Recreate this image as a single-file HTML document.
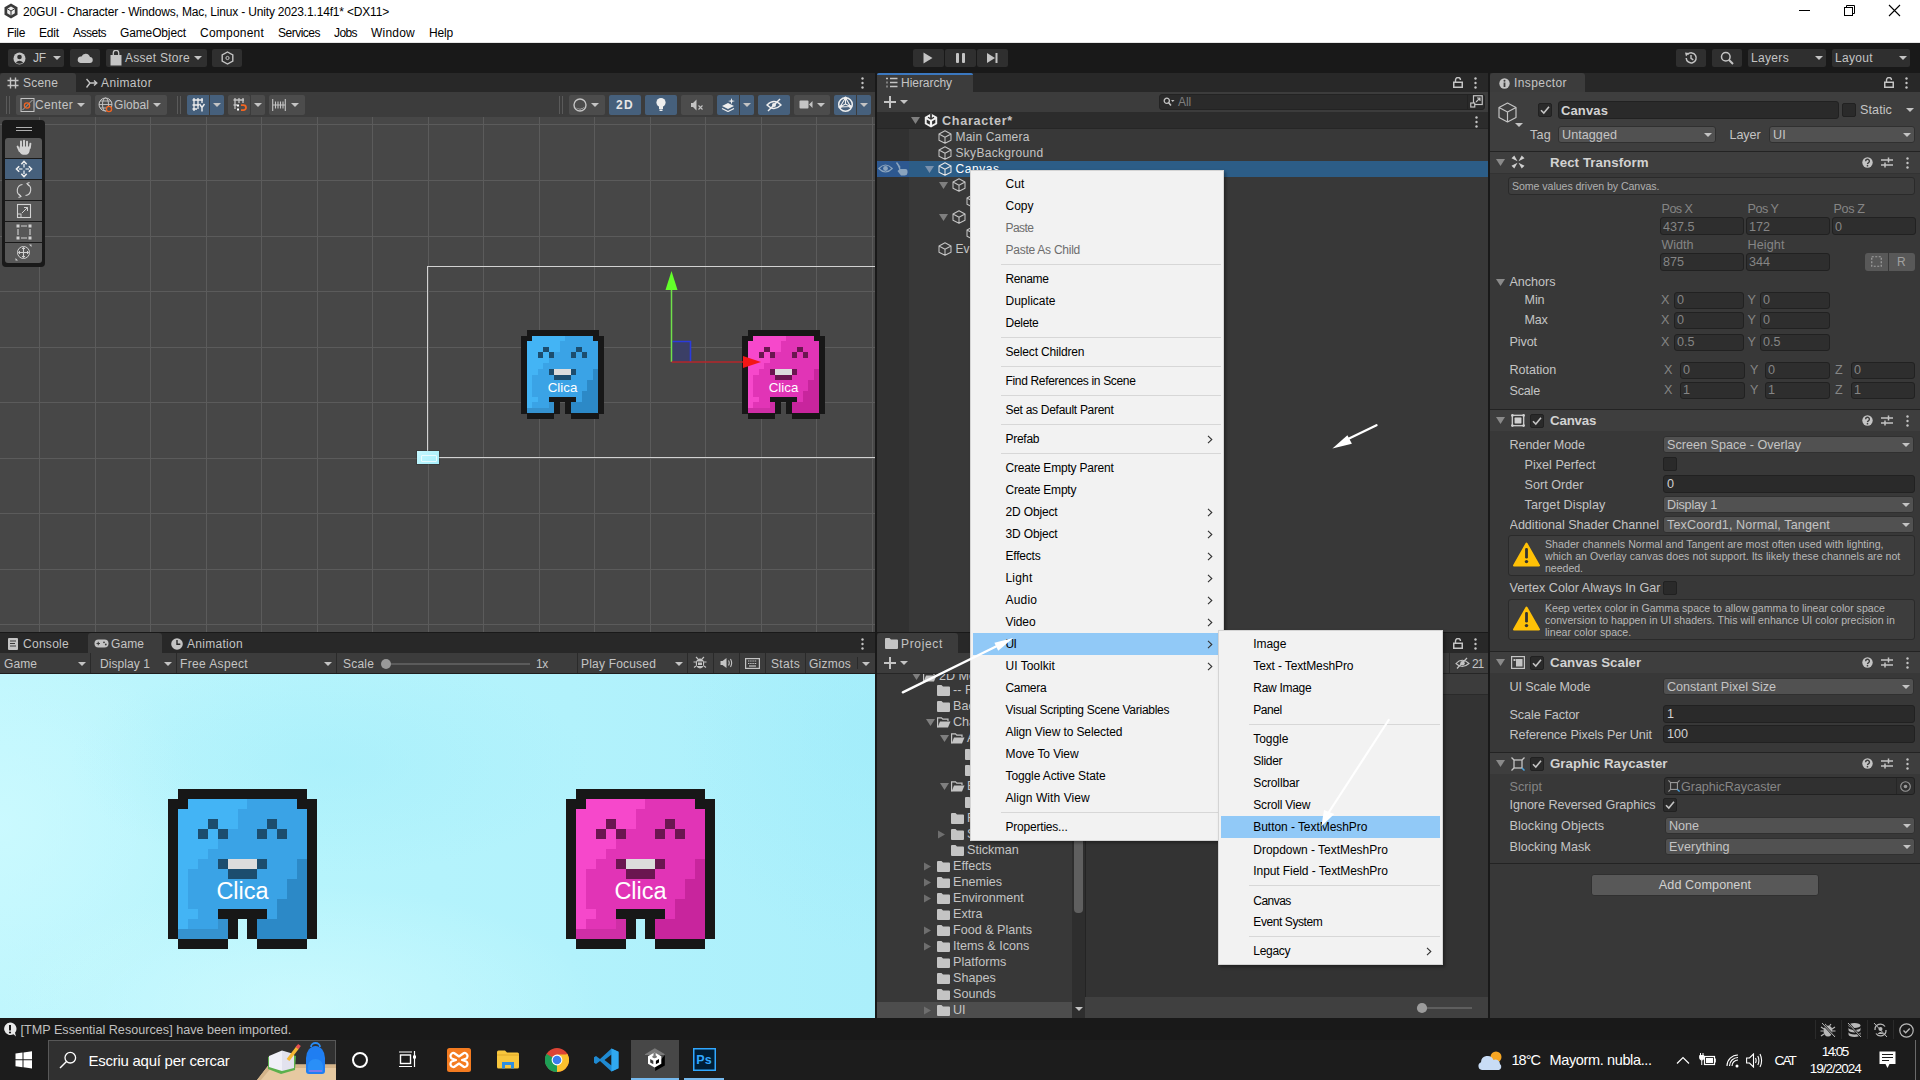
<!DOCTYPE html>
<html><head><meta charset="utf-8"><style>
html,body{margin:0;padding:0;width:1920px;height:1080px;overflow:hidden;background:#191919;}
body{position:relative;font-family:"Liberation Sans",sans-serif;}
body>div,body>svg{position:absolute;}
.t{white-space:nowrap;}
</style></head><body>
<div style="left:0px;top:0px;width:1920px;height:43px;background:#ffffff;"></div>
<div style="left:0px;top:42px;width:1920px;height:1px;background:#e6e6e6;"></div>
<div style="left:0px;top:43px;width:1920px;height:997px;background:#191919;"></div>
<svg style="left:3px;top:3px" width="16" height="16" viewBox="0 0 16 16"><polygon points="8,0.5 14.5,4.2 14.5,11.8 8,15.5 1.5,11.8 1.5,4.2" fill="#3a3a3a"/><polygon points="8,3.5 11.8,5.7 11.8,10.3 8,12.5 4.2,10.3 4.2,5.7" fill="#eee"/><path d="M8,8 L8,12.5 M8,8 L4.2,5.7 M8,8 L11.8,5.7" stroke="#333" stroke-width="1"/></svg>
<div class="t" style="left:23.00px;top:3.00px;height:19px;line-height:19px;font-size:12px;color:#000;letter-spacing:-0.178px;">20GUI - Character - Windows, Mac, Linux - Unity 2023.1.14f1* &lt;DX11&gt;</div>
<div style="left:1799px;top:10px;width:11px;height:1px;background:#000;"></div>
<svg style="left:1843px;top:4px" width="14" height="14" viewBox="0 0 14 14"><rect x="1.5" y="3.5" width="8" height="8" fill="none" stroke="#000"/><path d="M3.5,3.5 V1.5 H11.5 V9.5 H9.5" fill="none" stroke="#000"/></svg>
<svg style="left:1888px;top:4px" width="14" height="14" viewBox="0 0 14 14"><path d="M1,1 L12,12 M12,1 L1,12" stroke="#000" stroke-width="1.1"/></svg>
<div class="t" style="left:7.00px;top:23.80px;height:19px;line-height:19px;font-size:12px;color:#000;letter-spacing:-0.334px;">File</div>
<div class="t" style="left:39.00px;top:23.80px;height:19px;line-height:19px;font-size:12px;color:#000;letter-spacing:-0.169px;">Edit</div>
<div class="t" style="left:73.00px;top:23.80px;height:19px;line-height:19px;font-size:12px;color:#000;letter-spacing:-0.502px;">Assets</div>
<div class="t" style="left:120.00px;top:23.80px;height:19px;line-height:19px;font-size:12px;color:#000;letter-spacing:-0.136px;">GameObject</div>
<div class="t" style="left:200.00px;top:23.80px;height:19px;line-height:19px;font-size:12px;color:#000;letter-spacing:0.218px;">Component</div>
<div class="t" style="left:278.00px;top:23.80px;height:19px;line-height:19px;font-size:12px;color:#000;letter-spacing:-0.502px;">Services</div>
<div class="t" style="left:334.00px;top:23.80px;height:19px;line-height:19px;font-size:12px;color:#000;letter-spacing:-0.587px;">Jobs</div>
<div class="t" style="left:371.00px;top:23.80px;height:19px;line-height:19px;font-size:12px;color:#000;letter-spacing:0.220px;">Window</div>
<div class="t" style="left:429.00px;top:23.80px;height:19px;line-height:19px;font-size:12px;color:#000;letter-spacing:-0.170px;">Help</div>
<div style="left:8px;top:49px;width:56px;height:18px;background:#2f2f2f;border-radius:2px;"></div>
<div style="left:70px;top:49px;width:30px;height:18px;background:#2f2f2f;border-radius:2px;"></div>
<div style="left:106px;top:49px;width:101px;height:18px;background:#2f2f2f;border-radius:2px;"></div>
<div style="left:212px;top:49px;width:30px;height:18px;background:#2f2f2f;border-radius:2px;"></div>
<svg style="left:13px;top:52px" width="13" height="13" viewBox="0 0 13 13"><circle cx="6.5" cy="6.5" r="6" fill="#c4c4c4"/><circle cx="6.5" cy="5" r="2.3" fill="#2f2f2f"/><path d="M2.8,10.5 Q6.5,6.8 10.2,10.5 Q6.5,13 2.8,10.5Z" fill="#2f2f2f"/></svg>
<div class="t" style="left:33.00px;top:48.50px;height:19px;line-height:19px;font-size:12px;color:#c4c4c4;letter-spacing:-0.165px;">JF</div>
<svg style="left:53px;top:56px" width="8" height="4" viewBox="0 0 8 4"><polygon points="0,0 8,0 4,4" fill="#c4c4c4"/></svg>
<svg style="left:77px;top:52px" width="16" height="12" viewBox="0 0 16 12"><path d="M3.5,11 H12.5 A3,3 0 0 0 13,5 A4.5,4.5 0 0 0 4.5,4.5 A3.2,3.2 0 0 0 3.5,11Z" fill="#c4c4c4"/></svg>
<svg style="left:110px;top:50px" width="12" height="16" viewBox="0 0 12 16"><rect x="0.5" y="5" width="11" height="10.5" fill="#c4c4c4"/><path d="M3.3,5 V3 A2.7,2.7 0 0 1 8.7,3 V5" fill="none" stroke="#c4c4c4" stroke-width="1.3"/></svg>
<div class="t" style="left:125.00px;top:48.50px;height:19px;line-height:19px;font-size:12px;color:#c4c4c4;letter-spacing:0.270px;">Asset Store</div>
<svg style="left:194px;top:56px" width="8" height="4" viewBox="0 0 8 4"><polygon points="0,0 8,0 4,4" fill="#c4c4c4"/></svg>
<svg style="left:221px;top:51px" width="13" height="14" viewBox="0 0 13 14"><polygon points="6.5,1 11.8,4 11.8,10 6.5,13 1.2,10 1.2,4" fill="none" stroke="#c4c4c4" stroke-width="1.4"/><circle cx="6.5" cy="7" r="1.6" fill="none" stroke="#c4c4c4" stroke-width="1"/></svg>
<div style="left:913px;top:49px;width:31px;height:18px;background:#2f2f2f;border-radius:2px;"></div>
<div style="left:945px;top:49px;width:31px;height:18px;background:#2f2f2f;border-radius:2px;"></div>
<div style="left:977px;top:49px;width:31px;height:18px;background:#2f2f2f;border-radius:2px;"></div>
<svg style="left:923px;top:52px" width="10" height="12" viewBox="0 0 10 12"><polygon points="0.5,0.5 9.5,6 0.5,11.5" fill="#c4c4c4"/></svg>
<div style="left:956px;top:53px;width:3px;height:10px;background:#c4c4c4;border-radius:1px;"></div>
<div style="left:962px;top:53px;width:3px;height:10px;background:#c4c4c4;border-radius:1px;"></div>
<svg style="left:987px;top:53px" width="11" height="10" viewBox="0 0 11 10"><polygon points="0,0 8,5 0,10" fill="#c4c4c4"/><rect x="8.5" y="0" width="2" height="10" fill="#c4c4c4"/></svg>
<div style="left:1676px;top:49px;width:30px;height:18px;background:#2f2f2f;border-radius:2px;"></div>
<div style="left:1712px;top:49px;width:30px;height:18px;background:#2f2f2f;border-radius:2px;"></div>
<div style="left:1748px;top:49px;width:78px;height:18px;background:#2f2f2f;border-radius:2px;"></div>
<div style="left:1832px;top:49px;width:78px;height:18px;background:#2f2f2f;border-radius:2px;"></div>
<svg style="left:1684px;top:51px" width="14" height="14" viewBox="0 0 14 14"><path d="M2.2,7 A5,5 0 1 0 3.6,3.4" fill="none" stroke="#c4c4c4" stroke-width="1.5"/><polygon points="1,1.5 5,2 2,5.5" fill="#c4c4c4"/><path d="M7,4 V7.3 L9.3,8.8" fill="none" stroke="#c4c4c4" stroke-width="1.4"/></svg>
<svg style="left:1720px;top:51px" width="14" height="14" viewBox="0 0 14 14"><circle cx="5.8" cy="5.8" r="4.3" fill="none" stroke="#c4c4c4" stroke-width="1.5"/><path d="M8.8,8.8 L13,13" stroke="#c4c4c4" stroke-width="2"/></svg>
<div class="t" style="left:1751.00px;top:48.50px;height:19px;line-height:19px;font-size:12px;color:#c4c4c4;letter-spacing:0.331px;">Layers</div>
<svg style="left:1815px;top:56px" width="8" height="4" viewBox="0 0 8 4"><polygon points="0,0 8,0 4,4" fill="#c4c4c4"/></svg>
<div class="t" style="left:1835.00px;top:48.50px;height:19px;line-height:19px;font-size:12px;color:#c4c4c4;letter-spacing:0.329px;">Layout</div>
<svg style="left:1899px;top:56px" width="8" height="4" viewBox="0 0 8 4"><polygon points="0,0 8,0 4,4" fill="#c4c4c4"/></svg>
<div style="left:0px;top:73px;width:875px;height:19px;background:#282828;"></div>
<div style="left:0px;top:73px;width:76px;height:19px;background:#3c3c3c;border-radius:3px 3px 0 0;"></div>
<svg style="left:7px;top:77px" width="12" height="12" viewBox="0 0 12 12"><path d="M3.5,0.5 V11.5 M8.5,0.5 V11.5 M0.5,3.5 H11.5 M0.5,8.5 H11.5" stroke="#c4c4c4" stroke-width="1.4"/></svg>
<div class="t" style="left:23.00px;top:73.50px;height:19px;line-height:19px;font-size:12px;color:#c4c4c4;letter-spacing:0.195px;">Scene</div>
<svg style="left:86px;top:77px" width="12" height="12" viewBox="0 0 12 12"><path d="M0.5,2 L4,6 L0.5,10.5 M4,6 H10.5 M8,3.5 L10.8,6 L8,8.5" fill="none" stroke="#c4c4c4" stroke-width="1.4"/></svg>
<div class="t" style="left:101.00px;top:73.50px;height:19px;line-height:19px;font-size:12px;color:#c4c4c4;letter-spacing:0.373px;">Animator</div>
<svg style="left:861px;top:77px" width="3" height="12" viewBox="0 0 3 12"><circle cx="1.5" cy="1.5" r="1.2" fill="#c4c4c4"/><circle cx="1.5" cy="6" r="1.2" fill="#c4c4c4"/><circle cx="1.5" cy="10.5" r="1.2" fill="#c4c4c4"/></svg>
<div style="left:0px;top:92px;width:875px;height:25px;background:#3c3c3c;"></div>
<div style="left:6px;top:96px;width:1px;height:18px;background:#5a5a5a;"></div>
<div style="left:9px;top:96px;width:1px;height:18px;background:#5a5a5a;"></div>
<div style="left:16px;top:95px;width:75px;height:20px;background:#4c4c4c;border-radius:2px;"></div>
<div style="left:95px;top:95px;width:72px;height:20px;background:#4c4c4c;border-radius:2px;"></div>
<svg style="left:20px;top:97px" width="15" height="16" viewBox="0 0 15 16"><rect x="1" y="1.5" width="13" height="13" fill="none" stroke="#c4c4c4" stroke-width="1"/><path d="M2.5,13 L12.5,3" stroke="#c4c4c4" stroke-width="0.8"/><circle cx="7" cy="8.5" r="2.6" fill="none" stroke="#f26522" stroke-width="1.3"/></svg>
<div class="t" style="left:35.00px;top:95.50px;height:19px;line-height:19px;font-size:12px;color:#c4c4c4;letter-spacing:0.331px;">Center</div>
<svg style="left:77px;top:103px" width="8" height="4" viewBox="0 0 8 4"><polygon points="0,0 8,0 4,4" fill="#c4c4c4"/></svg>
<svg style="left:98px;top:97px" width="16" height="16" viewBox="0 0 16 16"><circle cx="7.5" cy="7.5" r="6.5" fill="none" stroke="#c4c4c4" stroke-width="1"/><ellipse cx="7.5" cy="7.5" rx="3" ry="6.5" fill="none" stroke="#c4c4c4" stroke-width="1"/><path d="M1,7.5 H14 M2,4 H13 M2,11 H13" stroke="#c4c4c4" stroke-width="0.9"/><circle cx="11" cy="12" r="2.6" fill="#4c4c4c" stroke="#f26522" stroke-width="1.3"/></svg>
<div class="t" style="left:114.00px;top:95.50px;height:19px;line-height:19px;font-size:12px;color:#c4c4c4;letter-spacing:0.052px;">Global</div>
<svg style="left:153px;top:103px" width="8" height="4" viewBox="0 0 8 4"><polygon points="0,0 8,0 4,4" fill="#c4c4c4"/></svg>
<div style="left:177px;top:96px;width:1px;height:18px;background:#5a5a5a;"></div>
<div style="left:180px;top:96px;width:1px;height:18px;background:#5a5a5a;"></div>
<div style="left:187px;top:95px;width:22px;height:20px;background:#46607c;border-radius:2px 0 0 2px;"></div>
<div style="left:210px;top:95px;width:14px;height:20px;background:#46607c;border-radius:0 2px 2px 0;"></div>
<svg style="left:191px;top:97px" width="15" height="15" viewBox="0 0 15 15"><path d="M1.5,3 H12 M1.5,8 H8 M1.5,12 H6 M3,1 V14 M7,1 V12 M11,1 V6" stroke="#eee" stroke-width="1.3"/><path d="M8.5,7 L11,10.5 L13.5,7 M11,10.5 V14.5" fill="none" stroke="#eee" stroke-width="1.4"/></svg>
<svg style="left:213px;top:103px" width="8" height="4" viewBox="0 0 8 4"><polygon points="0,0 8,0 4,4" fill="#c4c4c4"/></svg>
<div style="left:228px;top:95px;width:22px;height:20px;background:#4c4c4c;border-radius:2px;"></div>
<div style="left:251px;top:95px;width:14px;height:20px;background:#4c4c4c;border-radius:0 2px 2px 0;"></div>
<svg style="left:232px;top:97px" width="15" height="15" viewBox="0 0 15 15"><path d="M1.5,3 H12 M1.5,8 H5 M3,1 V12 M7,1 V6 M11,1 V6" stroke="#c4c4c4" stroke-width="1.3"/><rect x="5" y="7.5" width="2" height="2" fill="#fff"/><rect x="5" y="11.5" width="2" height="2" fill="#fff"/><path d="M9,8.2 H11.5 A2.5,2.5 0 0 1 11.5,13.2 H9" fill="none" stroke="#f26522" stroke-width="1.8"/></svg>
<svg style="left:254px;top:103px" width="8" height="4" viewBox="0 0 8 4"><polygon points="0,0 8,0 4,4" fill="#c4c4c4"/></svg>
<div style="left:269px;top:95px;width:36px;height:20px;background:#4c4c4c;border-radius:2px;"></div>
<svg style="left:272px;top:98px" width="14" height="14" viewBox="0 0 14 14"><path d="M0.7,1 V13 M13.3,1 V13 M0.7,7 H13.3 M3.5,3.5 V10.5 M6,3.5 V10.5 M8.5,3.5 V10.5 M11,3.5 V10.5" stroke="#c4c4c4" stroke-width="1.1"/></svg>
<svg style="left:291px;top:103px" width="8" height="4" viewBox="0 0 8 4"><polygon points="0,0 8,0 4,4" fill="#c4c4c4"/></svg>
<div style="left:559px;top:96px;width:1px;height:18px;background:#5a5a5a;"></div>
<div style="left:562px;top:96px;width:1px;height:18px;background:#5a5a5a;"></div>
<div style="left:569px;top:95px;width:36px;height:20px;background:#4c4c4c;border-radius:2px;"></div>
<svg style="left:573px;top:98px" width="15" height="14" viewBox="0 0 15 14"><circle cx="7" cy="7" r="6" fill="none" stroke="#c4c4c4" stroke-width="1.4"/><path d="M3,9.5 A5,5 0 0 0 11.5,8.5 A6,6 0 0 1 3,9.5Z" fill="#c4c4c4"/></svg>
<svg style="left:591px;top:103px" width="8" height="4" viewBox="0 0 8 4"><polygon points="0,0 8,0 4,4" fill="#c4c4c4"/></svg>
<div style="left:609px;top:95px;width:32px;height:20px;background:#46607c;border-radius:2px;"></div>
<div class="t" style="left:616.00px;top:95.50px;height:19px;line-height:19px;font-size:12px;color:#e6e6e6;font-weight:bold;letter-spacing:1.330px;">2D</div>
<div style="left:645px;top:95px;width:32px;height:20px;background:#46607c;border-radius:2px;"></div>
<svg style="left:655px;top:97px" width="12" height="15" viewBox="0 0 12 15"><circle cx="6" cy="5.5" r="4.6" fill="#eee"/><rect x="4" y="9" width="4" height="3" fill="#eee"/><rect x="4.5" y="12.5" width="3" height="1.5" fill="#eee"/></svg>
<div style="left:681px;top:95px;width:32px;height:20px;background:#4c4c4c;border-radius:2px;"></div>
<svg style="left:690px;top:98px" width="14" height="14" viewBox="0 0 14 14"><path d="M1,5 H3 L6.5,1.5 V12.5 L3,9 H1Z" fill="#c4c4c4"/><path d="M8.5,7.5 L12.5,11.5 M12.5,7.5 L8.5,11.5" stroke="#c4c4c4" stroke-width="1.1"/></svg>
<div style="left:717px;top:95px;width:22px;height:20px;background:#46607c;border-radius:2px 0 0 2px;"></div>
<div style="left:740px;top:95px;width:14px;height:20px;background:#46607c;border-radius:0 2px 2px 0;"></div>
<svg style="left:721px;top:97px" width="15" height="15" viewBox="0 0 15 15"><path d="M1,9 L7,6 L13,9 L7,12Z" fill="#eee"/><path d="M1,11.5 L7,14.5 L13,11.5" fill="none" stroke="#eee" stroke-width="1.2"/><path d="M10.5,1 L11.3,3.5 L14,4 L11.3,4.8 L10.5,7.5 L9.7,4.8 L7,4 L9.7,3.5Z" fill="#eee"/></svg>
<svg style="left:743px;top:103px" width="8" height="4" viewBox="0 0 8 4"><polygon points="0,0 8,0 4,4" fill="#c4c4c4"/></svg>
<div style="left:758px;top:95px;width:32px;height:20px;background:#46607c;border-radius:2px;"></div>
<svg style="left:766px;top:98px" width="16" height="14" viewBox="0 0 16 14"><path d="M1,7 Q8,0 15,7 Q8,14 1,7Z" fill="none" stroke="#eee" stroke-width="1.4"/><circle cx="8" cy="7" r="2" fill="#eee"/><path d="M2,13 L14,1" stroke="#eee" stroke-width="1.5"/></svg>
<div style="left:794px;top:95px;width:36px;height:20px;background:#4c4c4c;border-radius:2px;"></div>
<svg style="left:799px;top:99px" width="14" height="11" viewBox="0 0 14 11"><rect x="0.5" y="1.5" width="9" height="8" rx="1" fill="#c4c4c4"/><polygon points="10,5.5 13.5,2 13.5,9" fill="#c4c4c4"/></svg>
<svg style="left:817px;top:103px" width="8" height="4" viewBox="0 0 8 4"><polygon points="0,0 8,0 4,4" fill="#c4c4c4"/></svg>
<div style="left:834px;top:95px;width:22px;height:20px;background:#46607c;border-radius:2px 0 0 2px;"></div>
<div style="left:857px;top:95px;width:14px;height:20px;background:#46607c;border-radius:0 2px 2px 0;"></div>
<svg style="left:837px;top:96px" width="17" height="17" viewBox="0 0 17 17"><circle cx="8.5" cy="8.5" r="6.8" fill="none" stroke="#eee" stroke-width="1.5"/><path d="M8.5,1.7 L3,11 L13.5,10.5Z M8.5,1.7 L8.5,8 L3,11 M8.5,8 L13.5,10.5" fill="none" stroke="#eee" stroke-width="1.1"/><circle cx="8.5" cy="2" r="1.6" fill="#eee"/><circle cx="3" cy="11" r="1.6" fill="#eee"/><circle cx="13.5" cy="10.5" r="1.6" fill="#eee"/></svg>
<svg style="left:860px;top:103px" width="8" height="4" viewBox="0 0 8 4"><polygon points="0,0 8,0 4,4" fill="#c4c4c4"/></svg>
<svg style="left:0;top:117px" width="875" height="515" viewBox="0 0 875 515"><rect width="875" height="515" fill="#474747"/><rect x="39" y="0" width="1" height="515" fill="#5b5b5b"/><rect x="95" y="0" width="1" height="515" fill="#5b5b5b"/><rect x="150" y="0" width="1" height="515" fill="#5b5b5b"/><rect x="206" y="0" width="1" height="515" fill="#5b5b5b"/><rect x="261" y="0" width="1" height="515" fill="#5b5b5b"/><rect x="317" y="0" width="1" height="515" fill="#5b5b5b"/><rect x="372" y="0" width="1" height="515" fill="#5b5b5b"/><rect x="428" y="0" width="1" height="515" fill="#5b5b5b"/><rect x="483" y="0" width="1" height="515" fill="#5b5b5b"/><rect x="539" y="0" width="1" height="515" fill="#5b5b5b"/><rect x="594" y="0" width="1" height="515" fill="#5b5b5b"/><rect x="650" y="0" width="1" height="515" fill="#5b5b5b"/><rect x="705" y="0" width="1" height="515" fill="#5b5b5b"/><rect x="761" y="0" width="1" height="515" fill="#5b5b5b"/><rect x="816" y="0" width="1" height="515" fill="#5b5b5b"/><rect x="872" y="0" width="1" height="515" fill="#5b5b5b"/><rect x="0" y="7" width="875" height="1" fill="#5b5b5b"/><rect x="0" y="63" width="875" height="1" fill="#5b5b5b"/><rect x="0" y="119" width="875" height="1" fill="#5b5b5b"/><rect x="0" y="174" width="875" height="1" fill="#5b5b5b"/><rect x="0" y="230" width="875" height="1" fill="#5b5b5b"/><rect x="0" y="285" width="875" height="1" fill="#5b5b5b"/><rect x="0" y="341" width="875" height="1" fill="#5b5b5b"/><rect x="0" y="396" width="875" height="1" fill="#5b5b5b"/><rect x="0" y="452" width="875" height="1" fill="#5b5b5b"/><rect x="0" y="507" width="875" height="1" fill="#5b5b5b"/></svg>
<div style="left:427px;top:266px;width:448px;height:1px;background:#d2d2d2;"></div>
<div style="left:427px;top:266px;width:1px;height:192px;background:#d2d2d2;"></div>
<div style="left:427px;top:457px;width:448px;height:1px;background:#d2d2d2;"></div>
<div style="left:417px;top:451px;width:22px;height:13px;background:linear-gradient(135deg,#c6f8ff,#a5eefb);box-shadow:0 0 0 1px rgba(0,0,0,0.15);"></div>
<div style="left:421px;top:455px;width:14px;height:5px;background:transparent;border:1px solid rgba(255,255,255,0.7);border-radius:1px;"></div>
<svg style="left:521px;top:330px" width="83" height="89" viewBox="0 0 15 16" preserveAspectRatio="none" shape-rendering="crispEdges"><rect x="1" y="0" width="1.02" height="1.02" fill="#171717"/><rect x="2" y="0" width="1.02" height="1.02" fill="#171717"/><rect x="3" y="0" width="1.02" height="1.02" fill="#171717"/><rect x="4" y="0" width="1.02" height="1.02" fill="#171717"/><rect x="5" y="0" width="1.02" height="1.02" fill="#171717"/><rect x="6" y="0" width="1.02" height="1.02" fill="#171717"/><rect x="7" y="0" width="1.02" height="1.02" fill="#171717"/><rect x="8" y="0" width="1.02" height="1.02" fill="#171717"/><rect x="9" y="0" width="1.02" height="1.02" fill="#171717"/><rect x="10" y="0" width="1.02" height="1.02" fill="#171717"/><rect x="11" y="0" width="1.02" height="1.02" fill="#171717"/><rect x="12" y="0" width="1.02" height="1.02" fill="#171717"/><rect x="13" y="0" width="1.02" height="1.02" fill="#171717"/><rect x="0" y="1" width="1.02" height="1.02" fill="#171717"/><rect x="1" y="1" width="1.02" height="1.02" fill="#171717"/><rect x="2" y="1" width="1.02" height="1.02" fill="#43b4f5"/><rect x="3" y="1" width="1.02" height="1.02" fill="#43b4f5"/><rect x="4" y="1" width="1.02" height="1.02" fill="#43b4f5"/><rect x="5" y="1" width="1.02" height="1.02" fill="#43b4f5"/><rect x="6" y="1" width="1.02" height="1.02" fill="#43b4f5"/><rect x="7" y="1" width="1.02" height="1.02" fill="#43b4f5"/><rect x="8" y="1" width="1.02" height="1.02" fill="#3aa3e6"/><rect x="9" y="1" width="1.02" height="1.02" fill="#3aa3e6"/><rect x="10" y="1" width="1.02" height="1.02" fill="#3aa3e6"/><rect x="11" y="1" width="1.02" height="1.02" fill="#3aa3e6"/><rect x="12" y="1" width="1.02" height="1.02" fill="#3aa3e6"/><rect x="13" y="1" width="1.02" height="1.02" fill="#171717"/><rect x="14" y="1" width="1.02" height="1.02" fill="#171717"/><rect x="0" y="2" width="1.02" height="1.02" fill="#171717"/><rect x="1" y="2" width="1.02" height="1.02" fill="#43b4f5"/><rect x="2" y="2" width="1.02" height="1.02" fill="#43b4f5"/><rect x="3" y="2" width="1.02" height="1.02" fill="#43b4f5"/><rect x="4" y="2" width="1.02" height="1.02" fill="#43b4f5"/><rect x="5" y="2" width="1.02" height="1.02" fill="#43b4f5"/><rect x="6" y="2" width="1.02" height="1.02" fill="#43b4f5"/><rect x="7" y="2" width="1.02" height="1.02" fill="#3aa3e6"/><rect x="8" y="2" width="1.02" height="1.02" fill="#3aa3e6"/><rect x="9" y="2" width="1.02" height="1.02" fill="#3aa3e6"/><rect x="10" y="2" width="1.02" height="1.02" fill="#3aa3e6"/><rect x="11" y="2" width="1.02" height="1.02" fill="#3aa3e6"/><rect x="12" y="2" width="1.02" height="1.02" fill="#3aa3e6"/><rect x="13" y="2" width="1.02" height="1.02" fill="#3aa3e6"/><rect x="14" y="2" width="1.02" height="1.02" fill="#171717"/><rect x="0" y="3" width="1.02" height="1.02" fill="#171717"/><rect x="1" y="3" width="1.02" height="1.02" fill="#43b4f5"/><rect x="2" y="3" width="1.02" height="1.02" fill="#43b4f5"/><rect x="3" y="3" width="1.02" height="1.02" fill="#43b4f5"/><rect x="4" y="3" width="1.02" height="1.02" fill="#1c4d6e"/><rect x="5" y="3" width="1.02" height="1.02" fill="#43b4f5"/><rect x="6" y="3" width="1.02" height="1.02" fill="#43b4f5"/><rect x="7" y="3" width="1.02" height="1.02" fill="#3aa3e6"/><rect x="8" y="3" width="1.02" height="1.02" fill="#3aa3e6"/><rect x="9" y="3" width="1.02" height="1.02" fill="#3aa3e6"/><rect x="10" y="3" width="1.02" height="1.02" fill="#1c4d6e"/><rect x="11" y="3" width="1.02" height="1.02" fill="#3aa3e6"/><rect x="12" y="3" width="1.02" height="1.02" fill="#3aa3e6"/><rect x="13" y="3" width="1.02" height="1.02" fill="#3aa3e6"/><rect x="14" y="3" width="1.02" height="1.02" fill="#171717"/><rect x="0" y="4" width="1.02" height="1.02" fill="#171717"/><rect x="1" y="4" width="1.02" height="1.02" fill="#43b4f5"/><rect x="2" y="4" width="1.02" height="1.02" fill="#43b4f5"/><rect x="3" y="4" width="1.02" height="1.02" fill="#1c4d6e"/><rect x="4" y="4" width="1.02" height="1.02" fill="#43b4f5"/><rect x="5" y="4" width="1.02" height="1.02" fill="#1c4d6e"/><rect x="6" y="4" width="1.02" height="1.02" fill="#3aa3e6"/><rect x="7" y="4" width="1.02" height="1.02" fill="#3aa3e6"/><rect x="8" y="4" width="1.02" height="1.02" fill="#3aa3e6"/><rect x="9" y="4" width="1.02" height="1.02" fill="#1c4d6e"/><rect x="10" y="4" width="1.02" height="1.02" fill="#3aa3e6"/><rect x="11" y="4" width="1.02" height="1.02" fill="#1c4d6e"/><rect x="12" y="4" width="1.02" height="1.02" fill="#3aa3e6"/><rect x="13" y="4" width="1.02" height="1.02" fill="#3aa3e6"/><rect x="14" y="4" width="1.02" height="1.02" fill="#171717"/><rect x="0" y="5" width="1.02" height="1.02" fill="#171717"/><rect x="1" y="5" width="1.02" height="1.02" fill="#43b4f5"/><rect x="2" y="5" width="1.02" height="1.02" fill="#43b4f5"/><rect x="3" y="5" width="1.02" height="1.02" fill="#43b4f5"/><rect x="4" y="5" width="1.02" height="1.02" fill="#43b4f5"/><rect x="5" y="5" width="1.02" height="1.02" fill="#3aa3e6"/><rect x="6" y="5" width="1.02" height="1.02" fill="#3aa3e6"/><rect x="7" y="5" width="1.02" height="1.02" fill="#3aa3e6"/><rect x="8" y="5" width="1.02" height="1.02" fill="#3aa3e6"/><rect x="9" y="5" width="1.02" height="1.02" fill="#3aa3e6"/><rect x="10" y="5" width="1.02" height="1.02" fill="#3aa3e6"/><rect x="11" y="5" width="1.02" height="1.02" fill="#3aa3e6"/><rect x="12" y="5" width="1.02" height="1.02" fill="#3aa3e6"/><rect x="13" y="5" width="1.02" height="1.02" fill="#3aa3e6"/><rect x="14" y="5" width="1.02" height="1.02" fill="#171717"/><rect x="0" y="6" width="1.02" height="1.02" fill="#171717"/><rect x="1" y="6" width="1.02" height="1.02" fill="#43b4f5"/><rect x="2" y="6" width="1.02" height="1.02" fill="#43b4f5"/><rect x="3" y="6" width="1.02" height="1.02" fill="#43b4f5"/><rect x="4" y="6" width="1.02" height="1.02" fill="#3aa3e6"/><rect x="5" y="6" width="1.02" height="1.02" fill="#3aa3e6"/><rect x="6" y="6" width="1.02" height="1.02" fill="#3aa3e6"/><rect x="7" y="6" width="1.02" height="1.02" fill="#3aa3e6"/><rect x="8" y="6" width="1.02" height="1.02" fill="#3aa3e6"/><rect x="9" y="6" width="1.02" height="1.02" fill="#3aa3e6"/><rect x="10" y="6" width="1.02" height="1.02" fill="#3aa3e6"/><rect x="11" y="6" width="1.02" height="1.02" fill="#3aa3e6"/><rect x="12" y="6" width="1.02" height="1.02" fill="#3aa3e6"/><rect x="13" y="6" width="1.02" height="1.02" fill="#3aa3e6"/><rect x="14" y="6" width="1.02" height="1.02" fill="#171717"/><rect x="0" y="7" width="1.02" height="1.02" fill="#171717"/><rect x="1" y="7" width="1.02" height="1.02" fill="#43b4f5"/><rect x="2" y="7" width="1.02" height="1.02" fill="#43b4f5"/><rect x="3" y="7" width="1.02" height="1.02" fill="#3aa3e6"/><rect x="4" y="7" width="1.02" height="1.02" fill="#3aa3e6"/><rect x="5" y="7" width="1.02" height="1.02" fill="#1c4d6e"/><rect x="6" y="7" width="1.02" height="1.02" fill="#dcdcdc"/><rect x="7" y="7" width="1.02" height="1.02" fill="#dcdcdc"/><rect x="8" y="7" width="1.02" height="1.02" fill="#dcdcdc"/><rect x="9" y="7" width="1.02" height="1.02" fill="#1c4d6e"/><rect x="10" y="7" width="1.02" height="1.02" fill="#3aa3e6"/><rect x="11" y="7" width="1.02" height="1.02" fill="#3aa3e6"/><rect x="12" y="7" width="1.02" height="1.02" fill="#3aa3e6"/><rect x="13" y="7" width="1.02" height="1.02" fill="#2c89c7"/><rect x="14" y="7" width="1.02" height="1.02" fill="#171717"/><rect x="0" y="8" width="1.02" height="1.02" fill="#171717"/><rect x="1" y="8" width="1.02" height="1.02" fill="#43b4f5"/><rect x="2" y="8" width="1.02" height="1.02" fill="#3aa3e6"/><rect x="3" y="8" width="1.02" height="1.02" fill="#3aa3e6"/><rect x="4" y="8" width="1.02" height="1.02" fill="#3aa3e6"/><rect x="5" y="8" width="1.02" height="1.02" fill="#3aa3e6"/><rect x="6" y="8" width="1.02" height="1.02" fill="#1c4d6e"/><rect x="7" y="8" width="1.02" height="1.02" fill="#1c4d6e"/><rect x="8" y="8" width="1.02" height="1.02" fill="#1c4d6e"/><rect x="9" y="8" width="1.02" height="1.02" fill="#3aa3e6"/><rect x="10" y="8" width="1.02" height="1.02" fill="#3aa3e6"/><rect x="11" y="8" width="1.02" height="1.02" fill="#3aa3e6"/><rect x="12" y="8" width="1.02" height="1.02" fill="#3aa3e6"/><rect x="13" y="8" width="1.02" height="1.02" fill="#2c89c7"/><rect x="14" y="8" width="1.02" height="1.02" fill="#171717"/><rect x="0" y="9" width="1.02" height="1.02" fill="#171717"/><rect x="1" y="9" width="1.02" height="1.02" fill="#43b4f5"/><rect x="2" y="9" width="1.02" height="1.02" fill="#3aa3e6"/><rect x="3" y="9" width="1.02" height="1.02" fill="#3aa3e6"/><rect x="4" y="9" width="1.02" height="1.02" fill="#3aa3e6"/><rect x="5" y="9" width="1.02" height="1.02" fill="#3aa3e6"/><rect x="6" y="9" width="1.02" height="1.02" fill="#3aa3e6"/><rect x="7" y="9" width="1.02" height="1.02" fill="#3aa3e6"/><rect x="8" y="9" width="1.02" height="1.02" fill="#3aa3e6"/><rect x="9" y="9" width="1.02" height="1.02" fill="#3aa3e6"/><rect x="10" y="9" width="1.02" height="1.02" fill="#3aa3e6"/><rect x="11" y="9" width="1.02" height="1.02" fill="#3aa3e6"/><rect x="12" y="9" width="1.02" height="1.02" fill="#2c89c7"/><rect x="13" y="9" width="1.02" height="1.02" fill="#2c89c7"/><rect x="14" y="9" width="1.02" height="1.02" fill="#171717"/><rect x="0" y="10" width="1.02" height="1.02" fill="#171717"/><rect x="1" y="10" width="1.02" height="1.02" fill="#43b4f5"/><rect x="2" y="10" width="1.02" height="1.02" fill="#3aa3e6"/><rect x="3" y="10" width="1.02" height="1.02" fill="#3aa3e6"/><rect x="4" y="10" width="1.02" height="1.02" fill="#3aa3e6"/><rect x="5" y="10" width="1.02" height="1.02" fill="#3aa3e6"/><rect x="6" y="10" width="1.02" height="1.02" fill="#3aa3e6"/><rect x="7" y="10" width="1.02" height="1.02" fill="#3aa3e6"/><rect x="8" y="10" width="1.02" height="1.02" fill="#3aa3e6"/><rect x="9" y="10" width="1.02" height="1.02" fill="#3aa3e6"/><rect x="10" y="10" width="1.02" height="1.02" fill="#3aa3e6"/><rect x="11" y="10" width="1.02" height="1.02" fill="#3aa3e6"/><rect x="12" y="10" width="1.02" height="1.02" fill="#2c89c7"/><rect x="13" y="10" width="1.02" height="1.02" fill="#2c89c7"/><rect x="14" y="10" width="1.02" height="1.02" fill="#171717"/><rect x="0" y="11" width="1.02" height="1.02" fill="#171717"/><rect x="1" y="11" width="1.02" height="1.02" fill="#43b4f5"/><rect x="2" y="11" width="1.02" height="1.02" fill="#3aa3e6"/><rect x="3" y="11" width="1.02" height="1.02" fill="#3aa3e6"/><rect x="4" y="11" width="1.02" height="1.02" fill="#3aa3e6"/><rect x="5" y="11" width="1.02" height="1.02" fill="#3aa3e6"/><rect x="6" y="11" width="1.02" height="1.02" fill="#3aa3e6"/><rect x="7" y="11" width="1.02" height="1.02" fill="#3aa3e6"/><rect x="8" y="11" width="1.02" height="1.02" fill="#3aa3e6"/><rect x="9" y="11" width="1.02" height="1.02" fill="#3aa3e6"/><rect x="10" y="11" width="1.02" height="1.02" fill="#3aa3e6"/><rect x="11" y="11" width="1.02" height="1.02" fill="#2c89c7"/><rect x="12" y="11" width="1.02" height="1.02" fill="#2c89c7"/><rect x="13" y="11" width="1.02" height="1.02" fill="#2c89c7"/><rect x="14" y="11" width="1.02" height="1.02" fill="#171717"/><rect x="0" y="12" width="1.02" height="1.02" fill="#171717"/><rect x="1" y="12" width="1.02" height="1.02" fill="#43b4f5"/><rect x="2" y="12" width="1.02" height="1.02" fill="#43b4f5"/><rect x="3" y="12" width="1.02" height="1.02" fill="#3aa3e6"/><rect x="4" y="12" width="1.02" height="1.02" fill="#3aa3e6"/><rect x="5" y="12" width="1.02" height="1.02" fill="#171717"/><rect x="6" y="12" width="1.02" height="1.02" fill="#171717"/><rect x="7" y="12" width="1.02" height="1.02" fill="#171717"/><rect x="8" y="12" width="1.02" height="1.02" fill="#171717"/><rect x="9" y="12" width="1.02" height="1.02" fill="#171717"/><rect x="10" y="12" width="1.02" height="1.02" fill="#3aa3e6"/><rect x="11" y="12" width="1.02" height="1.02" fill="#2c89c7"/><rect x="12" y="12" width="1.02" height="1.02" fill="#2c89c7"/><rect x="13" y="12" width="1.02" height="1.02" fill="#2c89c7"/><rect x="14" y="12" width="1.02" height="1.02" fill="#171717"/><rect x="0" y="13" width="1.02" height="1.02" fill="#171717"/><rect x="1" y="13" width="1.02" height="1.02" fill="#43b4f5"/><rect x="2" y="13" width="1.02" height="1.02" fill="#3aa3e6"/><rect x="3" y="13" width="1.02" height="1.02" fill="#3aa3e6"/><rect x="4" y="13" width="1.02" height="1.02" fill="#3aa3e6"/><rect x="5" y="13" width="1.02" height="1.02" fill="#3592cf"/><rect x="6" y="13" width="1.02" height="1.02" fill="#171717"/><rect x="8" y="13" width="1.02" height="1.02" fill="#171717"/><rect x="9" y="13" width="1.02" height="1.02" fill="#2c89c7"/><rect x="10" y="13" width="1.02" height="1.02" fill="#2c89c7"/><rect x="11" y="13" width="1.02" height="1.02" fill="#2c89c7"/><rect x="12" y="13" width="1.02" height="1.02" fill="#2c89c7"/><rect x="13" y="13" width="1.02" height="1.02" fill="#2c89c7"/><rect x="14" y="13" width="1.02" height="1.02" fill="#171717"/><rect x="0" y="14" width="1.02" height="1.02" fill="#171717"/><rect x="1" y="14" width="1.02" height="1.02" fill="#3592cf"/><rect x="2" y="14" width="1.02" height="1.02" fill="#3592cf"/><rect x="3" y="14" width="1.02" height="1.02" fill="#3592cf"/><rect x="4" y="14" width="1.02" height="1.02" fill="#3592cf"/><rect x="5" y="14" width="1.02" height="1.02" fill="#3592cf"/><rect x="6" y="14" width="1.02" height="1.02" fill="#171717"/><rect x="8" y="14" width="1.02" height="1.02" fill="#171717"/><rect x="9" y="14" width="1.02" height="1.02" fill="#2c89c7"/><rect x="10" y="14" width="1.02" height="1.02" fill="#2c89c7"/><rect x="11" y="14" width="1.02" height="1.02" fill="#2c89c7"/><rect x="12" y="14" width="1.02" height="1.02" fill="#2c89c7"/><rect x="13" y="14" width="1.02" height="1.02" fill="#2c89c7"/><rect x="14" y="14" width="1.02" height="1.02" fill="#171717"/><rect x="1" y="15" width="1.02" height="1.02" fill="#171717"/><rect x="2" y="15" width="1.02" height="1.02" fill="#171717"/><rect x="3" y="15" width="1.02" height="1.02" fill="#171717"/><rect x="4" y="15" width="1.02" height="1.02" fill="#171717"/><rect x="5" y="15" width="1.02" height="1.02" fill="#171717"/><rect x="9" y="15" width="1.02" height="1.02" fill="#171717"/><rect x="10" y="15" width="1.02" height="1.02" fill="#171717"/><rect x="11" y="15" width="1.02" height="1.02" fill="#171717"/><rect x="12" y="15" width="1.02" height="1.02" fill="#171717"/><rect x="13" y="15" width="1.02" height="1.02" fill="#171717"/></svg>
<div class="t" style="left:547.72px;top:376.50px;height:21px;line-height:21px;font-size:13.3px;color:#ffffff;">Clica</div>
<svg style="left:742px;top:330px" width="83" height="89" viewBox="0 0 15 16" preserveAspectRatio="none" shape-rendering="crispEdges"><rect x="1" y="0" width="1.02" height="1.02" fill="#171717"/><rect x="2" y="0" width="1.02" height="1.02" fill="#171717"/><rect x="3" y="0" width="1.02" height="1.02" fill="#171717"/><rect x="4" y="0" width="1.02" height="1.02" fill="#171717"/><rect x="5" y="0" width="1.02" height="1.02" fill="#171717"/><rect x="6" y="0" width="1.02" height="1.02" fill="#171717"/><rect x="7" y="0" width="1.02" height="1.02" fill="#171717"/><rect x="8" y="0" width="1.02" height="1.02" fill="#171717"/><rect x="9" y="0" width="1.02" height="1.02" fill="#171717"/><rect x="10" y="0" width="1.02" height="1.02" fill="#171717"/><rect x="11" y="0" width="1.02" height="1.02" fill="#171717"/><rect x="12" y="0" width="1.02" height="1.02" fill="#171717"/><rect x="13" y="0" width="1.02" height="1.02" fill="#171717"/><rect x="0" y="1" width="1.02" height="1.02" fill="#171717"/><rect x="1" y="1" width="1.02" height="1.02" fill="#171717"/><rect x="2" y="1" width="1.02" height="1.02" fill="#f648cb"/><rect x="3" y="1" width="1.02" height="1.02" fill="#f648cb"/><rect x="4" y="1" width="1.02" height="1.02" fill="#f648cb"/><rect x="5" y="1" width="1.02" height="1.02" fill="#f648cb"/><rect x="6" y="1" width="1.02" height="1.02" fill="#f648cb"/><rect x="7" y="1" width="1.02" height="1.02" fill="#f648cb"/><rect x="8" y="1" width="1.02" height="1.02" fill="#e134b6"/><rect x="9" y="1" width="1.02" height="1.02" fill="#e134b6"/><rect x="10" y="1" width="1.02" height="1.02" fill="#e134b6"/><rect x="11" y="1" width="1.02" height="1.02" fill="#e134b6"/><rect x="12" y="1" width="1.02" height="1.02" fill="#e134b6"/><rect x="13" y="1" width="1.02" height="1.02" fill="#171717"/><rect x="14" y="1" width="1.02" height="1.02" fill="#171717"/><rect x="0" y="2" width="1.02" height="1.02" fill="#171717"/><rect x="1" y="2" width="1.02" height="1.02" fill="#f648cb"/><rect x="2" y="2" width="1.02" height="1.02" fill="#f648cb"/><rect x="3" y="2" width="1.02" height="1.02" fill="#f648cb"/><rect x="4" y="2" width="1.02" height="1.02" fill="#f648cb"/><rect x="5" y="2" width="1.02" height="1.02" fill="#f648cb"/><rect x="6" y="2" width="1.02" height="1.02" fill="#f648cb"/><rect x="7" y="2" width="1.02" height="1.02" fill="#e134b6"/><rect x="8" y="2" width="1.02" height="1.02" fill="#e134b6"/><rect x="9" y="2" width="1.02" height="1.02" fill="#e134b6"/><rect x="10" y="2" width="1.02" height="1.02" fill="#e134b6"/><rect x="11" y="2" width="1.02" height="1.02" fill="#e134b6"/><rect x="12" y="2" width="1.02" height="1.02" fill="#e134b6"/><rect x="13" y="2" width="1.02" height="1.02" fill="#e134b6"/><rect x="14" y="2" width="1.02" height="1.02" fill="#171717"/><rect x="0" y="3" width="1.02" height="1.02" fill="#171717"/><rect x="1" y="3" width="1.02" height="1.02" fill="#f648cb"/><rect x="2" y="3" width="1.02" height="1.02" fill="#f648cb"/><rect x="3" y="3" width="1.02" height="1.02" fill="#f648cb"/><rect x="4" y="3" width="1.02" height="1.02" fill="#6a1650"/><rect x="5" y="3" width="1.02" height="1.02" fill="#f648cb"/><rect x="6" y="3" width="1.02" height="1.02" fill="#f648cb"/><rect x="7" y="3" width="1.02" height="1.02" fill="#e134b6"/><rect x="8" y="3" width="1.02" height="1.02" fill="#e134b6"/><rect x="9" y="3" width="1.02" height="1.02" fill="#e134b6"/><rect x="10" y="3" width="1.02" height="1.02" fill="#6a1650"/><rect x="11" y="3" width="1.02" height="1.02" fill="#e134b6"/><rect x="12" y="3" width="1.02" height="1.02" fill="#e134b6"/><rect x="13" y="3" width="1.02" height="1.02" fill="#e134b6"/><rect x="14" y="3" width="1.02" height="1.02" fill="#171717"/><rect x="0" y="4" width="1.02" height="1.02" fill="#171717"/><rect x="1" y="4" width="1.02" height="1.02" fill="#f648cb"/><rect x="2" y="4" width="1.02" height="1.02" fill="#f648cb"/><rect x="3" y="4" width="1.02" height="1.02" fill="#6a1650"/><rect x="4" y="4" width="1.02" height="1.02" fill="#f648cb"/><rect x="5" y="4" width="1.02" height="1.02" fill="#6a1650"/><rect x="6" y="4" width="1.02" height="1.02" fill="#e134b6"/><rect x="7" y="4" width="1.02" height="1.02" fill="#e134b6"/><rect x="8" y="4" width="1.02" height="1.02" fill="#e134b6"/><rect x="9" y="4" width="1.02" height="1.02" fill="#6a1650"/><rect x="10" y="4" width="1.02" height="1.02" fill="#e134b6"/><rect x="11" y="4" width="1.02" height="1.02" fill="#6a1650"/><rect x="12" y="4" width="1.02" height="1.02" fill="#e134b6"/><rect x="13" y="4" width="1.02" height="1.02" fill="#e134b6"/><rect x="14" y="4" width="1.02" height="1.02" fill="#171717"/><rect x="0" y="5" width="1.02" height="1.02" fill="#171717"/><rect x="1" y="5" width="1.02" height="1.02" fill="#f648cb"/><rect x="2" y="5" width="1.02" height="1.02" fill="#f648cb"/><rect x="3" y="5" width="1.02" height="1.02" fill="#f648cb"/><rect x="4" y="5" width="1.02" height="1.02" fill="#f648cb"/><rect x="5" y="5" width="1.02" height="1.02" fill="#e134b6"/><rect x="6" y="5" width="1.02" height="1.02" fill="#e134b6"/><rect x="7" y="5" width="1.02" height="1.02" fill="#e134b6"/><rect x="8" y="5" width="1.02" height="1.02" fill="#e134b6"/><rect x="9" y="5" width="1.02" height="1.02" fill="#e134b6"/><rect x="10" y="5" width="1.02" height="1.02" fill="#e134b6"/><rect x="11" y="5" width="1.02" height="1.02" fill="#e134b6"/><rect x="12" y="5" width="1.02" height="1.02" fill="#e134b6"/><rect x="13" y="5" width="1.02" height="1.02" fill="#e134b6"/><rect x="14" y="5" width="1.02" height="1.02" fill="#171717"/><rect x="0" y="6" width="1.02" height="1.02" fill="#171717"/><rect x="1" y="6" width="1.02" height="1.02" fill="#f648cb"/><rect x="2" y="6" width="1.02" height="1.02" fill="#f648cb"/><rect x="3" y="6" width="1.02" height="1.02" fill="#f648cb"/><rect x="4" y="6" width="1.02" height="1.02" fill="#e134b6"/><rect x="5" y="6" width="1.02" height="1.02" fill="#e134b6"/><rect x="6" y="6" width="1.02" height="1.02" fill="#e134b6"/><rect x="7" y="6" width="1.02" height="1.02" fill="#e134b6"/><rect x="8" y="6" width="1.02" height="1.02" fill="#e134b6"/><rect x="9" y="6" width="1.02" height="1.02" fill="#e134b6"/><rect x="10" y="6" width="1.02" height="1.02" fill="#e134b6"/><rect x="11" y="6" width="1.02" height="1.02" fill="#e134b6"/><rect x="12" y="6" width="1.02" height="1.02" fill="#e134b6"/><rect x="13" y="6" width="1.02" height="1.02" fill="#e134b6"/><rect x="14" y="6" width="1.02" height="1.02" fill="#171717"/><rect x="0" y="7" width="1.02" height="1.02" fill="#171717"/><rect x="1" y="7" width="1.02" height="1.02" fill="#f648cb"/><rect x="2" y="7" width="1.02" height="1.02" fill="#f648cb"/><rect x="3" y="7" width="1.02" height="1.02" fill="#e134b6"/><rect x="4" y="7" width="1.02" height="1.02" fill="#e134b6"/><rect x="5" y="7" width="1.02" height="1.02" fill="#6a1650"/><rect x="6" y="7" width="1.02" height="1.02" fill="#dcdcdc"/><rect x="7" y="7" width="1.02" height="1.02" fill="#dcdcdc"/><rect x="8" y="7" width="1.02" height="1.02" fill="#dcdcdc"/><rect x="9" y="7" width="1.02" height="1.02" fill="#6a1650"/><rect x="10" y="7" width="1.02" height="1.02" fill="#e134b6"/><rect x="11" y="7" width="1.02" height="1.02" fill="#e134b6"/><rect x="12" y="7" width="1.02" height="1.02" fill="#e134b6"/><rect x="13" y="7" width="1.02" height="1.02" fill="#c8259d"/><rect x="14" y="7" width="1.02" height="1.02" fill="#171717"/><rect x="0" y="8" width="1.02" height="1.02" fill="#171717"/><rect x="1" y="8" width="1.02" height="1.02" fill="#f648cb"/><rect x="2" y="8" width="1.02" height="1.02" fill="#e134b6"/><rect x="3" y="8" width="1.02" height="1.02" fill="#e134b6"/><rect x="4" y="8" width="1.02" height="1.02" fill="#e134b6"/><rect x="5" y="8" width="1.02" height="1.02" fill="#e134b6"/><rect x="6" y="8" width="1.02" height="1.02" fill="#6a1650"/><rect x="7" y="8" width="1.02" height="1.02" fill="#6a1650"/><rect x="8" y="8" width="1.02" height="1.02" fill="#6a1650"/><rect x="9" y="8" width="1.02" height="1.02" fill="#e134b6"/><rect x="10" y="8" width="1.02" height="1.02" fill="#e134b6"/><rect x="11" y="8" width="1.02" height="1.02" fill="#e134b6"/><rect x="12" y="8" width="1.02" height="1.02" fill="#e134b6"/><rect x="13" y="8" width="1.02" height="1.02" fill="#c8259d"/><rect x="14" y="8" width="1.02" height="1.02" fill="#171717"/><rect x="0" y="9" width="1.02" height="1.02" fill="#171717"/><rect x="1" y="9" width="1.02" height="1.02" fill="#f648cb"/><rect x="2" y="9" width="1.02" height="1.02" fill="#e134b6"/><rect x="3" y="9" width="1.02" height="1.02" fill="#e134b6"/><rect x="4" y="9" width="1.02" height="1.02" fill="#e134b6"/><rect x="5" y="9" width="1.02" height="1.02" fill="#e134b6"/><rect x="6" y="9" width="1.02" height="1.02" fill="#e134b6"/><rect x="7" y="9" width="1.02" height="1.02" fill="#e134b6"/><rect x="8" y="9" width="1.02" height="1.02" fill="#e134b6"/><rect x="9" y="9" width="1.02" height="1.02" fill="#e134b6"/><rect x="10" y="9" width="1.02" height="1.02" fill="#e134b6"/><rect x="11" y="9" width="1.02" height="1.02" fill="#e134b6"/><rect x="12" y="9" width="1.02" height="1.02" fill="#c8259d"/><rect x="13" y="9" width="1.02" height="1.02" fill="#c8259d"/><rect x="14" y="9" width="1.02" height="1.02" fill="#171717"/><rect x="0" y="10" width="1.02" height="1.02" fill="#171717"/><rect x="1" y="10" width="1.02" height="1.02" fill="#f648cb"/><rect x="2" y="10" width="1.02" height="1.02" fill="#e134b6"/><rect x="3" y="10" width="1.02" height="1.02" fill="#e134b6"/><rect x="4" y="10" width="1.02" height="1.02" fill="#e134b6"/><rect x="5" y="10" width="1.02" height="1.02" fill="#e134b6"/><rect x="6" y="10" width="1.02" height="1.02" fill="#e134b6"/><rect x="7" y="10" width="1.02" height="1.02" fill="#e134b6"/><rect x="8" y="10" width="1.02" height="1.02" fill="#e134b6"/><rect x="9" y="10" width="1.02" height="1.02" fill="#e134b6"/><rect x="10" y="10" width="1.02" height="1.02" fill="#e134b6"/><rect x="11" y="10" width="1.02" height="1.02" fill="#e134b6"/><rect x="12" y="10" width="1.02" height="1.02" fill="#c8259d"/><rect x="13" y="10" width="1.02" height="1.02" fill="#c8259d"/><rect x="14" y="10" width="1.02" height="1.02" fill="#171717"/><rect x="0" y="11" width="1.02" height="1.02" fill="#171717"/><rect x="1" y="11" width="1.02" height="1.02" fill="#f648cb"/><rect x="2" y="11" width="1.02" height="1.02" fill="#e134b6"/><rect x="3" y="11" width="1.02" height="1.02" fill="#e134b6"/><rect x="4" y="11" width="1.02" height="1.02" fill="#e134b6"/><rect x="5" y="11" width="1.02" height="1.02" fill="#e134b6"/><rect x="6" y="11" width="1.02" height="1.02" fill="#e134b6"/><rect x="7" y="11" width="1.02" height="1.02" fill="#e134b6"/><rect x="8" y="11" width="1.02" height="1.02" fill="#e134b6"/><rect x="9" y="11" width="1.02" height="1.02" fill="#e134b6"/><rect x="10" y="11" width="1.02" height="1.02" fill="#e134b6"/><rect x="11" y="11" width="1.02" height="1.02" fill="#c8259d"/><rect x="12" y="11" width="1.02" height="1.02" fill="#c8259d"/><rect x="13" y="11" width="1.02" height="1.02" fill="#c8259d"/><rect x="14" y="11" width="1.02" height="1.02" fill="#171717"/><rect x="0" y="12" width="1.02" height="1.02" fill="#171717"/><rect x="1" y="12" width="1.02" height="1.02" fill="#f648cb"/><rect x="2" y="12" width="1.02" height="1.02" fill="#f648cb"/><rect x="3" y="12" width="1.02" height="1.02" fill="#e134b6"/><rect x="4" y="12" width="1.02" height="1.02" fill="#e134b6"/><rect x="5" y="12" width="1.02" height="1.02" fill="#171717"/><rect x="6" y="12" width="1.02" height="1.02" fill="#171717"/><rect x="7" y="12" width="1.02" height="1.02" fill="#171717"/><rect x="8" y="12" width="1.02" height="1.02" fill="#171717"/><rect x="9" y="12" width="1.02" height="1.02" fill="#171717"/><rect x="10" y="12" width="1.02" height="1.02" fill="#e134b6"/><rect x="11" y="12" width="1.02" height="1.02" fill="#c8259d"/><rect x="12" y="12" width="1.02" height="1.02" fill="#c8259d"/><rect x="13" y="12" width="1.02" height="1.02" fill="#c8259d"/><rect x="14" y="12" width="1.02" height="1.02" fill="#171717"/><rect x="0" y="13" width="1.02" height="1.02" fill="#171717"/><rect x="1" y="13" width="1.02" height="1.02" fill="#f648cb"/><rect x="2" y="13" width="1.02" height="1.02" fill="#e134b6"/><rect x="3" y="13" width="1.02" height="1.02" fill="#e134b6"/><rect x="4" y="13" width="1.02" height="1.02" fill="#e134b6"/><rect x="5" y="13" width="1.02" height="1.02" fill="#cf2ea6"/><rect x="6" y="13" width="1.02" height="1.02" fill="#171717"/><rect x="8" y="13" width="1.02" height="1.02" fill="#171717"/><rect x="9" y="13" width="1.02" height="1.02" fill="#c8259d"/><rect x="10" y="13" width="1.02" height="1.02" fill="#c8259d"/><rect x="11" y="13" width="1.02" height="1.02" fill="#c8259d"/><rect x="12" y="13" width="1.02" height="1.02" fill="#c8259d"/><rect x="13" y="13" width="1.02" height="1.02" fill="#c8259d"/><rect x="14" y="13" width="1.02" height="1.02" fill="#171717"/><rect x="0" y="14" width="1.02" height="1.02" fill="#171717"/><rect x="1" y="14" width="1.02" height="1.02" fill="#cf2ea6"/><rect x="2" y="14" width="1.02" height="1.02" fill="#cf2ea6"/><rect x="3" y="14" width="1.02" height="1.02" fill="#cf2ea6"/><rect x="4" y="14" width="1.02" height="1.02" fill="#cf2ea6"/><rect x="5" y="14" width="1.02" height="1.02" fill="#cf2ea6"/><rect x="6" y="14" width="1.02" height="1.02" fill="#171717"/><rect x="8" y="14" width="1.02" height="1.02" fill="#171717"/><rect x="9" y="14" width="1.02" height="1.02" fill="#c8259d"/><rect x="10" y="14" width="1.02" height="1.02" fill="#c8259d"/><rect x="11" y="14" width="1.02" height="1.02" fill="#c8259d"/><rect x="12" y="14" width="1.02" height="1.02" fill="#c8259d"/><rect x="13" y="14" width="1.02" height="1.02" fill="#c8259d"/><rect x="14" y="14" width="1.02" height="1.02" fill="#171717"/><rect x="1" y="15" width="1.02" height="1.02" fill="#171717"/><rect x="2" y="15" width="1.02" height="1.02" fill="#171717"/><rect x="3" y="15" width="1.02" height="1.02" fill="#171717"/><rect x="4" y="15" width="1.02" height="1.02" fill="#171717"/><rect x="5" y="15" width="1.02" height="1.02" fill="#171717"/><rect x="9" y="15" width="1.02" height="1.02" fill="#171717"/><rect x="10" y="15" width="1.02" height="1.02" fill="#171717"/><rect x="11" y="15" width="1.02" height="1.02" fill="#171717"/><rect x="12" y="15" width="1.02" height="1.02" fill="#171717"/><rect x="13" y="15" width="1.02" height="1.02" fill="#171717"/></svg>
<div class="t" style="left:768.72px;top:376.50px;height:21px;line-height:21px;font-size:13.3px;color:#ffffff;">Clica</div>
<svg style="left:660px;top:268px" width="110" height="105" viewBox="0 0 110 105"><rect x="12" y="73" width="19" height="21" fill="#3b3f66"/><path d="M12.5,73.5 H30.5 V94" fill="none" stroke="#2a3bdd" stroke-width="1.6"/><path d="M11.5,22 V94" stroke="#6fe04a" stroke-width="1.5"/><polygon points="11.5,3 17.5,22 5.5,22" fill="#63ff2a"/><path d="M11.5,94 H83" stroke="#b5262a" stroke-width="1.6"/><polygon points="101,94 83,88 83,100" fill="#f31616"/></svg>
<div style="left:2px;top:120px;width:43px;height:147px;background:#191919;border-radius:4px;"></div>
<div style="left:16px;top:127px;width:16px;height:1px;background:#b0b0b0;"></div>
<div style="left:16px;top:130px;width:16px;height:1px;background:#b0b0b0;"></div>
<div style="left:5px;top:138px;width:37px;height:20px;background:#575757;border-radius:3px 3px 0 0;"></div>
<div style="left:5px;top:159px;width:37px;height:20px;background:#46607c;"></div>
<div style="left:5px;top:180px;width:37px;height:20px;background:#575757;"></div>
<div style="left:5px;top:201px;width:37px;height:20px;background:#575757;"></div>
<div style="left:5px;top:222px;width:37px;height:20px;background:#575757;"></div>
<div style="left:5px;top:243px;width:37px;height:20px;background:#575757;border-radius:0 0 3px 3px;"></div>
<svg style="left:16px;top:139px" width="16" height="17" viewBox="0 0 16 17"><path d="M5,8 V2.5 M8,8 V1.8 M11,8 V2.6 M13.8,9 L14.4,4.6 M3.6,12 L1.6,7.6" stroke="#d2d2d2" stroke-width="1.9" stroke-linecap="round"/><path d="M3.6,7.5 H14.2 L13.6,12 Q12.6,15.8 10,15.8 H7.2 Q4.6,15.8 3.3,12Z" fill="#d2d2d2"/></svg>
<svg style="left:15px;top:160px" width="18" height="18" viewBox="0 0 18 18"><path d="M9,4 V7.5 M9,10.5 V14 M4,9 H7.5 M10.5,9 H14" stroke="#c8d2dc" stroke-width="1.6"/><path d="M6.3,4.2 L9,1.5 L11.7,4.2 M6.3,13.8 L9,16.5 L11.7,13.8 M4.2,6.3 L1.5,9 L4.2,11.7 M13.8,6.3 L16.5,9 L13.8,11.7" fill="none" stroke="#eeeeee" stroke-width="1.6"/></svg>
<svg style="left:16px;top:182px" width="16" height="16" viewBox="0 0 16 16"><path d="M6.5,2.5 A6,6 0 0 0 5,14" fill="none" stroke="#d2d2d2" stroke-width="1.1"/><path d="M9.5,13.5 A6,6 0 0 0 11,2" fill="none" stroke="#d2d2d2" stroke-width="1.1"/><path d="M3,12 L5,14.5 L2.5,15.5 M13,4 L11,1.5 L13.5,0.5" fill="none" stroke="#d2d2d2" stroke-width="1.1"/></svg>
<svg style="left:16px;top:203px" width="16" height="16" viewBox="0 0 16 16"><rect x="1.5" y="1.5" width="13" height="13" fill="none" stroke="#d2d2d2" stroke-width="1.1"/><rect x="1.5" y="11" width="3.5" height="3.5" fill="none" stroke="#d2d2d2" stroke-width="1"/><path d="M6,10 L11.5,4.5 M8,4.5 H11.5 V8" fill="none" stroke="#d2d2d2" stroke-width="1"/></svg>
<svg style="left:16px;top:224px" width="16" height="16" viewBox="0 0 16 16"><path d="M5,2 H11 M5,14 H11 M2,5 V11 M14,5 V11" stroke="#d2d2d2" stroke-width="1.1"/><rect x="0.5" y="0.5" width="3" height="3" fill="#d2d2d2"/><rect x="12.5" y="0.5" width="3" height="3" fill="#d2d2d2"/><rect x="0.5" y="12.5" width="3" height="3" fill="#d2d2d2"/><rect x="12.5" y="12.5" width="3" height="3" fill="#d2d2d2"/></svg>
<svg style="left:15px;top:244px" width="17" height="17" viewBox="0 0 17 17"><circle cx="8.5" cy="8.5" r="6" fill="none" stroke="#d2d2d2" stroke-width="1"/><path d="M8.5,3.5 V13.5 M3.5,8.5 H13.5" stroke="#d2d2d2" stroke-width="1.1"/><path d="M7,5 L8.5,3.5 L10,5 M7,12 L8.5,13.5 L10,12 M5,7 L3.5,8.5 L5,10 M12,7 L13.5,8.5 L12,10" fill="none" stroke="#d2d2d2" stroke-width="1"/><path d="M0.5,16.5 L3,16.5 L0.5,14Z M16.5,0.5 L14,0.5 L16.5,3Z" fill="#d2d2d2"/></svg>
<div style="left:877px;top:73px;width:611px;height:19px;background:#282828;"></div>
<div style="left:877px;top:73px;width:96px;height:19px;background:#3c3c3c;border-radius:3px 3px 0 0;"></div>
<div style="left:877px;top:73px;width:96px;height:2px;background:#3b78c0;border-radius:2px 2px 0 0;"></div>
<svg style="left:886px;top:77px" width="12" height="11" viewBox="0 0 12 11"><path d="M4,1.5 H11.5 M4,5.5 H11.5 M4,9.5 H11.5" stroke="#c4c4c4" stroke-width="1.3"/><path d="M1,0.5 V2.5 M0,1.5 H2 M1,4.5 V6.5 M1,8.5 V10.5" stroke="#c4c4c4" stroke-width="1"/></svg>
<div class="t" style="left:901.00px;top:73.50px;height:19px;line-height:19px;font-size:12px;color:#c4c4c4;letter-spacing:-0.038px;">Hierarchy</div>
<svg style="left:1453px;top:77px" width="10" height="11" viewBox="0 0 10 11"><rect x="0.75" y="5.25" width="8.5" height="5" fill="none" stroke="#c4c4c4" stroke-width="1.5"/><path d="M2.5,5 V3 A2.5,2.5 0 0 1 7.5,3" fill="none" stroke="#c4c4c4" stroke-width="1.4"/></svg>
<svg style="left:1474px;top:77px" width="3" height="12" viewBox="0 0 3 12"><circle cx="1.5" cy="1.5" r="1.2" fill="#c4c4c4"/><circle cx="1.5" cy="6" r="1.2" fill="#c4c4c4"/><circle cx="1.5" cy="10.5" r="1.2" fill="#c4c4c4"/></svg>
<div style="left:877px;top:92px;width:611px;height:20px;background:#3c3c3c;"></div>
<div style="left:889px;top:96px;width:2px;height:12px;background:#c4c4c4;"></div>
<div style="left:884px;top:101px;width:12px;height:2px;background:#c4c4c4;"></div>
<svg style="left:900px;top:100px" width="8" height="4" viewBox="0 0 8 4"><polygon points="0,0 8,0 4,4" fill="#c4c4c4"/></svg>
<div style="left:1159px;top:94px;width:326px;height:16px;background:#2a2a2a;border:1px solid #232323;border-radius:3px;box-sizing:border-box;"></div>
<div style="left:1467px;top:95px;width:1px;height:14px;background:#232323;"></div>
<svg style="left:1163px;top:97px" width="12" height="10" viewBox="0 0 12 10"><circle cx="3.8" cy="3.8" r="2.6" fill="none" stroke="#c4c4c4" stroke-width="1.3"/><path d="M5.5,5.5 L8,8.5" stroke="#c4c4c4" stroke-width="1.5"/><polygon points="8,3 11.5,3 9.75,5" fill="#c4c4c4"/></svg>
<div class="t" style="left:1178.00px;top:92.50px;height:19px;line-height:19px;font-size:12px;color:#7f7f7f;letter-spacing:-0.112px;">All</div>
<svg style="left:1470px;top:95px" width="13" height="13" viewBox="0 0 13 13"><rect x="3.5" y="0.75" width="8.75" height="8.75" fill="none" stroke="#c4c4c4" stroke-width="1.2"/><rect x="0.75" y="8" width="4" height="4" fill="#2a2a2a" stroke="#c4c4c4" stroke-width="1.2"/><path d="M6,7 L10,3 M7,3 H10 V6" fill="none" stroke="#c4c4c4" stroke-width="1.1"/></svg>
<div style="left:877px;top:112px;width:611px;height:520px;background:#383838;"></div>
<div style="left:877px;top:129px;width:32px;height:503px;background:#313131;"></div>
<div style="left:877px;top:112px;width:611px;height:17px;background:#2c2c2c;"></div>
<div style="left:877px;top:128px;width:611px;height:1px;background:#262626;"></div>
<svg style="left:911px;top:116px" width="9" height="9" viewBox="0 0 9 9"><polygon points="0,1 9,1 4.5,8" fill="#7f7f7f"/></svg>
<svg style="left:924px;top:113px" width="14" height="15" viewBox="0 0 14 15"><polygon points="7,0.6 13.2,4.1 13.2,10.9 7,14.4 0.8,10.9 0.8,4.1" fill="#f0f0f0"/><path d="M7,0.5 V5.2" stroke="#2c2c2c" stroke-width="1.7"/><polygon points="2.7,6.4 5.9,8.2 5.9,11.8 2.7,10" fill="#2c2c2c"/><polygon points="11.3,6.4 8.1,8.2 8.1,11.8 11.3,10" fill="#2c2c2c"/><path d="M4,4.3 L7,6 L10,4.3" fill="none" stroke="#2c2c2c" stroke-width="1.2"/></svg>
<div class="t" style="left:942.00px;top:111.20px;height:20px;line-height:20px;font-size:12.6px;color:#c4c4c4;font-weight:bold;letter-spacing:0.727px;">Character*</div>
<svg style="left:1475px;top:116px" width="3" height="12" viewBox="0 0 3 12"><circle cx="1.5" cy="1.5" r="1.2" fill="#c4c4c4"/><circle cx="1.5" cy="6" r="1.2" fill="#c4c4c4"/><circle cx="1.5" cy="10.5" r="1.2" fill="#c4c4c4"/></svg>
<svg style="left:938px;top:130px" width="14" height="14" viewBox="0 0 14 14"><path d="M7,0.8 L13,4 V10.2 L7,13.3 L1,10.2 V4Z M1,4 L7,7.2 L13,4 M7,7.2 V13.3" fill="none" stroke="#c4c4c4" stroke-width="1.05" stroke-linejoin="round"/></svg>
<div class="t" style="left:955.50px;top:127.50px;height:19px;line-height:19px;font-size:12px;color:#c4c4c4;letter-spacing:0.180px;">Main Camera</div>
<svg style="left:938px;top:146px" width="14" height="14" viewBox="0 0 14 14"><path d="M7,0.8 L13,4 V10.2 L7,13.3 L1,10.2 V4Z M1,4 L7,7.2 L13,4 M7,7.2 V13.3" fill="none" stroke="#c4c4c4" stroke-width="1.05" stroke-linejoin="round"/></svg>
<div class="t" style="left:955.50px;top:143.50px;height:19px;line-height:19px;font-size:12px;color:#c4c4c4;letter-spacing:0.304px;">SkyBackground</div>
<div style="left:877px;top:161px;width:611px;height:16px;background:#2c5d87;"></div>
<div style="left:877px;top:161px;width:32px;height:16px;background:#2d5890;"></div>
<svg style="left:878px;top:163px" width="15" height="11" viewBox="0 0 15 11"><path d="M0.8,5.5 Q7.5,-1.5 14.2,5.5 Q7.5,12.5 0.8,5.5Z" fill="none" stroke="#8aa3bd" stroke-width="1.2"/><circle cx="7.5" cy="5.5" r="2.4" fill="#8aa3bd"/></svg>
<svg style="left:895px;top:162px" width="13" height="14" viewBox="0 0 13 14"><path d="M2,1 L5.5,6 L5,7 H10.5 A2,2 0 0 1 12.5,9 V11 A3,3 0 0 1 9.5,13.5 H6 L2.5,9 L4.2,7.5Z" fill="#8aa3bd"/><path d="M1.5,0.5 L5,5.5" stroke="#8aa3bd" stroke-width="1.4"/></svg>
<svg style="left:925px;top:165px" width="9" height="9" viewBox="0 0 9 9"><polygon points="0,1 9,1 4.5,8" fill="#7a92ad"/></svg>
<svg style="left:938px;top:162px" width="14" height="14" viewBox="0 0 14 14"><path d="M7,0.8 L13,4 V10.2 L7,13.3 L1,10.2 V4Z M1,4 L7,7.2 L13,4 M7,7.2 V13.3" fill="none" stroke="#e6e6e6" stroke-width="1.05" stroke-linejoin="round"/></svg>
<div class="t" style="left:955.50px;top:159.50px;height:19px;line-height:19px;font-size:12px;color:#ffffff;letter-spacing:0.552px;">Canvas</div>
<svg style="left:939px;top:181px" width="9" height="9" viewBox="0 0 9 9"><polygon points="0,1 9,1 4.5,8" fill="#7f7f7f"/></svg>
<svg style="left:952px;top:178px" width="14" height="14" viewBox="0 0 14 14"><path d="M7,0.8 L13,4 V10.2 L7,13.3 L1,10.2 V4Z M1,4 L7,7.2 L13,4 M7,7.2 V13.3" fill="none" stroke="#c4c4c4" stroke-width="1.05" stroke-linejoin="round"/></svg>
<svg style="left:966px;top:194px" width="14" height="14" viewBox="0 0 14 14"><path d="M7,0.8 L13,4 V10.2 L7,13.3 L1,10.2 V4Z M1,4 L7,7.2 L13,4 M7,7.2 V13.3" fill="none" stroke="#c4c4c4" stroke-width="1.05" stroke-linejoin="round"/></svg>
<svg style="left:939px;top:213px" width="9" height="9" viewBox="0 0 9 9"><polygon points="0,1 9,1 4.5,8" fill="#7f7f7f"/></svg>
<svg style="left:952px;top:210px" width="14" height="14" viewBox="0 0 14 14"><path d="M7,0.8 L13,4 V10.2 L7,13.3 L1,10.2 V4Z M1,4 L7,7.2 L13,4 M7,7.2 V13.3" fill="none" stroke="#c4c4c4" stroke-width="1.05" stroke-linejoin="round"/></svg>
<svg style="left:966px;top:226px" width="14" height="14" viewBox="0 0 14 14"><path d="M7,0.8 L13,4 V10.2 L7,13.3 L1,10.2 V4Z M1,4 L7,7.2 L13,4 M7,7.2 V13.3" fill="none" stroke="#c4c4c4" stroke-width="1.05" stroke-linejoin="round"/></svg>
<svg style="left:938px;top:242px" width="14" height="14" viewBox="0 0 14 14"><path d="M7,0.8 L13,4 V10.2 L7,13.3 L1,10.2 V4Z M1,4 L7,7.2 L13,4 M7,7.2 V13.3" fill="none" stroke="#c4c4c4" stroke-width="1.05" stroke-linejoin="round"/></svg>
<div class="t" style="left:955.50px;top:239.50px;height:19px;line-height:19px;font-size:12px;color:#c4c4c4;letter-spacing:0.119px;">EventSystem</div>
<svg style="left:1325px;top:418px" width="60" height="36" viewBox="1325 418 60 36"><path d="M1376.5,425.2 L1347,439.5" stroke="#fff" stroke-width="2.3" stroke-linecap="round"/><polygon points="1332.4,448.5 1347.4,435.2 1351.9,443.7" fill="#fff"/></svg>
<div style="left:0px;top:633px;width:875px;height:20px;background:#282828;"></div>
<div style="left:88px;top:633px;width:74px;height:20px;background:#3c3c3c;border-radius:3px 3px 0 0;"></div>
<svg style="left:8px;top:638px" width="10" height="12" viewBox="0 0 10 12"><rect x="0" y="0" width="10" height="12" rx="1" fill="#c4c4c4"/><path d="M2,3 H8 M2,5.5 H7 M2,8 H8" stroke="#3a3a3a" stroke-width="1"/></svg>
<div class="t" style="left:23.00px;top:634.50px;height:19px;line-height:19px;font-size:12px;color:#c4c4c4;letter-spacing:0.282px;">Console</div>
<svg style="left:94px;top:639px" width="15" height="9" viewBox="0 0 15 9"><rect x="0.5" y="0.5" width="14" height="8" rx="4" fill="#c4c4c4"/><path d="M2.5,4.5 H6 M4.25,2.75 V6.25" stroke="#3c3c3c" stroke-width="1.1"/><circle cx="10" cy="3.3" r="0.9" fill="#3c3c3c"/><circle cx="11.8" cy="5.5" r="0.9" fill="#3c3c3c"/></svg>
<div class="t" style="left:111.00px;top:634.50px;height:19px;line-height:19px;font-size:12px;color:#c4c4c4;letter-spacing:0.081px;">Game</div>
<svg style="left:171px;top:638px" width="12" height="12" viewBox="0 0 12 12"><circle cx="6" cy="6" r="5.8" fill="#c4c4c4"/><path d="M6,2 V6.3 H9.3" fill="none" stroke="#282828" stroke-width="1.4"/></svg>
<div class="t" style="left:187.00px;top:634.50px;height:19px;line-height:19px;font-size:12px;color:#c4c4c4;letter-spacing:0.293px;">Animation</div>
<svg style="left:861px;top:638px" width="3" height="12" viewBox="0 0 3 12"><circle cx="1.5" cy="1.5" r="1.2" fill="#c4c4c4"/><circle cx="1.5" cy="6" r="1.2" fill="#c4c4c4"/><circle cx="1.5" cy="10.5" r="1.2" fill="#c4c4c4"/></svg>
<div style="left:0px;top:653px;width:875px;height:20px;background:#3c3c3c;"></div>
<div style="left:90px;top:653px;width:1px;height:20px;background:#2a2a2a;"></div>
<div style="left:176px;top:653px;width:1px;height:20px;background:#2a2a2a;"></div>
<div style="left:336px;top:653px;width:1px;height:20px;background:#2a2a2a;"></div>
<div style="left:577px;top:653px;width:1px;height:20px;background:#2a2a2a;"></div>
<div style="left:687px;top:653px;width:1px;height:20px;background:#2a2a2a;"></div>
<div style="left:713px;top:653px;width:1px;height:20px;background:#2a2a2a;"></div>
<div style="left:739px;top:653px;width:1px;height:20px;background:#2a2a2a;"></div>
<div style="left:765px;top:653px;width:1px;height:20px;background:#2a2a2a;"></div>
<div style="left:805px;top:653px;width:1px;height:20px;background:#2a2a2a;"></div>
<div style="left:857px;top:657px;width:1px;height:12px;background:#2a2a2a;"></div>
<div class="t" style="left:4.00px;top:654.50px;height:19px;line-height:19px;font-size:12px;color:#c4c4c4;letter-spacing:0.081px;">Game</div>
<svg style="left:78px;top:662px" width="8" height="4" viewBox="0 0 8 4"><polygon points="0,0 8,0 4,4" fill="#c4c4c4"/></svg>
<div class="t" style="left:100.00px;top:654.50px;height:19px;line-height:19px;font-size:12px;color:#c4c4c4;letter-spacing:0.072px;">Display 1</div>
<svg style="left:164px;top:662px" width="8" height="4" viewBox="0 0 8 4"><polygon points="0,0 8,0 4,4" fill="#c4c4c4"/></svg>
<div class="t" style="left:180.00px;top:654.50px;height:19px;line-height:19px;font-size:12px;color:#c4c4c4;letter-spacing:0.361px;">Free Aspect</div>
<svg style="left:324px;top:662px" width="8" height="4" viewBox="0 0 8 4"><polygon points="0,0 8,0 4,4" fill="#c4c4c4"/></svg>
<div class="t" style="left:343.00px;top:654.50px;height:19px;line-height:19px;font-size:12px;color:#c4c4c4;letter-spacing:0.197px;">Scale</div>
<div style="left:386px;top:663px;width:144px;height:2px;background:#5b5b5b;"></div>
<svg style="left:380px;top:658px" width="12" height="12" viewBox="0 0 12 12"><circle cx="6" cy="6" r="5" fill="#999"/></svg>
<div class="t" style="left:536.00px;top:654.50px;height:19px;line-height:19px;font-size:12px;color:#c4c4c4;letter-spacing:-0.337px;">1x</div>
<div class="t" style="left:581.00px;top:654.50px;height:19px;line-height:19px;font-size:12px;color:#c4c4c4;letter-spacing:0.192px;">Play Focused</div>
<svg style="left:675px;top:662px" width="8" height="4" viewBox="0 0 8 4"><polygon points="0,0 8,0 4,4" fill="#c4c4c4"/></svg>
<svg style="left:693px;top:656px" width="14" height="14" viewBox="0 0 14 14"><path d="M3,1 L5,3 M11,1 L9,3 M0.5,6 H3 M11,6 H13.5 M1,11.5 L3,10 M13,11.5 L11,10" stroke="#c4c4c4" stroke-width="1.1"/><ellipse cx="7" cy="7.5" rx="4.2" ry="5" fill="#c4c4c4"/><rect x="4.5" y="6" width="5" height="3.5" fill="none" stroke="#3c3c3c" stroke-width="1"/></svg>
<svg style="left:720px;top:657px" width="13" height="12" viewBox="0 0 13 12"><path d="M0.5,4 H2.5 L6.5,1 V11 L2.5,8 H0.5Z" fill="#c4c4c4"/><path d="M8.5,3.5 Q10,6 8.5,8.5 M10.5,2 Q12.8,6 10.5,10" fill="none" stroke="#c4c4c4" stroke-width="1.1"/></svg>
<svg style="left:745px;top:658px" width="15" height="11" viewBox="0 0 15 11"><rect x="0.6" y="0.6" width="13.8" height="9.8" fill="none" stroke="#c4c4c4" stroke-width="1.2"/><path d="M3,3 H12 M3,5.5 H12" stroke="#c4c4c4" stroke-width="1.2" stroke-dasharray="1.4,0.8"/><path d="M4,8 H11" stroke="#c4c4c4" stroke-width="1.2"/></svg>
<div class="t" style="left:771.00px;top:654.50px;height:19px;line-height:19px;font-size:12px;color:#c4c4c4;letter-spacing:0.331px;">Stats</div>
<div class="t" style="left:809.00px;top:654.50px;height:19px;line-height:19px;font-size:12px;color:#c4c4c4;letter-spacing:0.222px;">Gizmos</div>
<svg style="left:862px;top:662px" width="8" height="4" viewBox="0 0 8 4"><polygon points="0,0 8,0 4,4" fill="#c4c4c4"/></svg>
<div style="left:0px;top:673px;width:875px;height:1px;background:#1e1e1e;"></div>
<div style="left:0px;top:674px;width:875px;height:344px;background:radial-gradient(ellipse 260px 110px at 330px 90px, rgba(160,236,250,0.45), rgba(160,236,250,0)), radial-gradient(ellipse 300px 120px at 300px 330px, rgba(210,251,255,0.7), rgba(210,251,255,0)), radial-gradient(ellipse 200px 220px at 880px 60px, rgba(158,236,250,0.6), rgba(158,236,250,0)), radial-gradient(ellipse 200px 200px at 0px 150px, rgba(205,250,255,0.8), rgba(205,250,255,0)), linear-gradient(90deg,#bff6fd 0%,#b6f4fc 35%,#b2f2fc 65%,#abeffb 100%);"></div>
<svg style="left:168px;top:789px" width="149" height="160" viewBox="0 0 15 16" preserveAspectRatio="none" shape-rendering="crispEdges"><rect x="1" y="0" width="1.02" height="1.02" fill="#171717"/><rect x="2" y="0" width="1.02" height="1.02" fill="#171717"/><rect x="3" y="0" width="1.02" height="1.02" fill="#171717"/><rect x="4" y="0" width="1.02" height="1.02" fill="#171717"/><rect x="5" y="0" width="1.02" height="1.02" fill="#171717"/><rect x="6" y="0" width="1.02" height="1.02" fill="#171717"/><rect x="7" y="0" width="1.02" height="1.02" fill="#171717"/><rect x="8" y="0" width="1.02" height="1.02" fill="#171717"/><rect x="9" y="0" width="1.02" height="1.02" fill="#171717"/><rect x="10" y="0" width="1.02" height="1.02" fill="#171717"/><rect x="11" y="0" width="1.02" height="1.02" fill="#171717"/><rect x="12" y="0" width="1.02" height="1.02" fill="#171717"/><rect x="13" y="0" width="1.02" height="1.02" fill="#171717"/><rect x="0" y="1" width="1.02" height="1.02" fill="#171717"/><rect x="1" y="1" width="1.02" height="1.02" fill="#171717"/><rect x="2" y="1" width="1.02" height="1.02" fill="#43b4f5"/><rect x="3" y="1" width="1.02" height="1.02" fill="#43b4f5"/><rect x="4" y="1" width="1.02" height="1.02" fill="#43b4f5"/><rect x="5" y="1" width="1.02" height="1.02" fill="#43b4f5"/><rect x="6" y="1" width="1.02" height="1.02" fill="#43b4f5"/><rect x="7" y="1" width="1.02" height="1.02" fill="#43b4f5"/><rect x="8" y="1" width="1.02" height="1.02" fill="#3aa3e6"/><rect x="9" y="1" width="1.02" height="1.02" fill="#3aa3e6"/><rect x="10" y="1" width="1.02" height="1.02" fill="#3aa3e6"/><rect x="11" y="1" width="1.02" height="1.02" fill="#3aa3e6"/><rect x="12" y="1" width="1.02" height="1.02" fill="#3aa3e6"/><rect x="13" y="1" width="1.02" height="1.02" fill="#171717"/><rect x="14" y="1" width="1.02" height="1.02" fill="#171717"/><rect x="0" y="2" width="1.02" height="1.02" fill="#171717"/><rect x="1" y="2" width="1.02" height="1.02" fill="#43b4f5"/><rect x="2" y="2" width="1.02" height="1.02" fill="#43b4f5"/><rect x="3" y="2" width="1.02" height="1.02" fill="#43b4f5"/><rect x="4" y="2" width="1.02" height="1.02" fill="#43b4f5"/><rect x="5" y="2" width="1.02" height="1.02" fill="#43b4f5"/><rect x="6" y="2" width="1.02" height="1.02" fill="#43b4f5"/><rect x="7" y="2" width="1.02" height="1.02" fill="#3aa3e6"/><rect x="8" y="2" width="1.02" height="1.02" fill="#3aa3e6"/><rect x="9" y="2" width="1.02" height="1.02" fill="#3aa3e6"/><rect x="10" y="2" width="1.02" height="1.02" fill="#3aa3e6"/><rect x="11" y="2" width="1.02" height="1.02" fill="#3aa3e6"/><rect x="12" y="2" width="1.02" height="1.02" fill="#3aa3e6"/><rect x="13" y="2" width="1.02" height="1.02" fill="#3aa3e6"/><rect x="14" y="2" width="1.02" height="1.02" fill="#171717"/><rect x="0" y="3" width="1.02" height="1.02" fill="#171717"/><rect x="1" y="3" width="1.02" height="1.02" fill="#43b4f5"/><rect x="2" y="3" width="1.02" height="1.02" fill="#43b4f5"/><rect x="3" y="3" width="1.02" height="1.02" fill="#43b4f5"/><rect x="4" y="3" width="1.02" height="1.02" fill="#1c4d6e"/><rect x="5" y="3" width="1.02" height="1.02" fill="#43b4f5"/><rect x="6" y="3" width="1.02" height="1.02" fill="#43b4f5"/><rect x="7" y="3" width="1.02" height="1.02" fill="#3aa3e6"/><rect x="8" y="3" width="1.02" height="1.02" fill="#3aa3e6"/><rect x="9" y="3" width="1.02" height="1.02" fill="#3aa3e6"/><rect x="10" y="3" width="1.02" height="1.02" fill="#1c4d6e"/><rect x="11" y="3" width="1.02" height="1.02" fill="#3aa3e6"/><rect x="12" y="3" width="1.02" height="1.02" fill="#3aa3e6"/><rect x="13" y="3" width="1.02" height="1.02" fill="#3aa3e6"/><rect x="14" y="3" width="1.02" height="1.02" fill="#171717"/><rect x="0" y="4" width="1.02" height="1.02" fill="#171717"/><rect x="1" y="4" width="1.02" height="1.02" fill="#43b4f5"/><rect x="2" y="4" width="1.02" height="1.02" fill="#43b4f5"/><rect x="3" y="4" width="1.02" height="1.02" fill="#1c4d6e"/><rect x="4" y="4" width="1.02" height="1.02" fill="#43b4f5"/><rect x="5" y="4" width="1.02" height="1.02" fill="#1c4d6e"/><rect x="6" y="4" width="1.02" height="1.02" fill="#3aa3e6"/><rect x="7" y="4" width="1.02" height="1.02" fill="#3aa3e6"/><rect x="8" y="4" width="1.02" height="1.02" fill="#3aa3e6"/><rect x="9" y="4" width="1.02" height="1.02" fill="#1c4d6e"/><rect x="10" y="4" width="1.02" height="1.02" fill="#3aa3e6"/><rect x="11" y="4" width="1.02" height="1.02" fill="#1c4d6e"/><rect x="12" y="4" width="1.02" height="1.02" fill="#3aa3e6"/><rect x="13" y="4" width="1.02" height="1.02" fill="#3aa3e6"/><rect x="14" y="4" width="1.02" height="1.02" fill="#171717"/><rect x="0" y="5" width="1.02" height="1.02" fill="#171717"/><rect x="1" y="5" width="1.02" height="1.02" fill="#43b4f5"/><rect x="2" y="5" width="1.02" height="1.02" fill="#43b4f5"/><rect x="3" y="5" width="1.02" height="1.02" fill="#43b4f5"/><rect x="4" y="5" width="1.02" height="1.02" fill="#43b4f5"/><rect x="5" y="5" width="1.02" height="1.02" fill="#3aa3e6"/><rect x="6" y="5" width="1.02" height="1.02" fill="#3aa3e6"/><rect x="7" y="5" width="1.02" height="1.02" fill="#3aa3e6"/><rect x="8" y="5" width="1.02" height="1.02" fill="#3aa3e6"/><rect x="9" y="5" width="1.02" height="1.02" fill="#3aa3e6"/><rect x="10" y="5" width="1.02" height="1.02" fill="#3aa3e6"/><rect x="11" y="5" width="1.02" height="1.02" fill="#3aa3e6"/><rect x="12" y="5" width="1.02" height="1.02" fill="#3aa3e6"/><rect x="13" y="5" width="1.02" height="1.02" fill="#3aa3e6"/><rect x="14" y="5" width="1.02" height="1.02" fill="#171717"/><rect x="0" y="6" width="1.02" height="1.02" fill="#171717"/><rect x="1" y="6" width="1.02" height="1.02" fill="#43b4f5"/><rect x="2" y="6" width="1.02" height="1.02" fill="#43b4f5"/><rect x="3" y="6" width="1.02" height="1.02" fill="#43b4f5"/><rect x="4" y="6" width="1.02" height="1.02" fill="#3aa3e6"/><rect x="5" y="6" width="1.02" height="1.02" fill="#3aa3e6"/><rect x="6" y="6" width="1.02" height="1.02" fill="#3aa3e6"/><rect x="7" y="6" width="1.02" height="1.02" fill="#3aa3e6"/><rect x="8" y="6" width="1.02" height="1.02" fill="#3aa3e6"/><rect x="9" y="6" width="1.02" height="1.02" fill="#3aa3e6"/><rect x="10" y="6" width="1.02" height="1.02" fill="#3aa3e6"/><rect x="11" y="6" width="1.02" height="1.02" fill="#3aa3e6"/><rect x="12" y="6" width="1.02" height="1.02" fill="#3aa3e6"/><rect x="13" y="6" width="1.02" height="1.02" fill="#3aa3e6"/><rect x="14" y="6" width="1.02" height="1.02" fill="#171717"/><rect x="0" y="7" width="1.02" height="1.02" fill="#171717"/><rect x="1" y="7" width="1.02" height="1.02" fill="#43b4f5"/><rect x="2" y="7" width="1.02" height="1.02" fill="#43b4f5"/><rect x="3" y="7" width="1.02" height="1.02" fill="#3aa3e6"/><rect x="4" y="7" width="1.02" height="1.02" fill="#3aa3e6"/><rect x="5" y="7" width="1.02" height="1.02" fill="#1c4d6e"/><rect x="6" y="7" width="1.02" height="1.02" fill="#dcdcdc"/><rect x="7" y="7" width="1.02" height="1.02" fill="#dcdcdc"/><rect x="8" y="7" width="1.02" height="1.02" fill="#dcdcdc"/><rect x="9" y="7" width="1.02" height="1.02" fill="#1c4d6e"/><rect x="10" y="7" width="1.02" height="1.02" fill="#3aa3e6"/><rect x="11" y="7" width="1.02" height="1.02" fill="#3aa3e6"/><rect x="12" y="7" width="1.02" height="1.02" fill="#3aa3e6"/><rect x="13" y="7" width="1.02" height="1.02" fill="#2c89c7"/><rect x="14" y="7" width="1.02" height="1.02" fill="#171717"/><rect x="0" y="8" width="1.02" height="1.02" fill="#171717"/><rect x="1" y="8" width="1.02" height="1.02" fill="#43b4f5"/><rect x="2" y="8" width="1.02" height="1.02" fill="#3aa3e6"/><rect x="3" y="8" width="1.02" height="1.02" fill="#3aa3e6"/><rect x="4" y="8" width="1.02" height="1.02" fill="#3aa3e6"/><rect x="5" y="8" width="1.02" height="1.02" fill="#3aa3e6"/><rect x="6" y="8" width="1.02" height="1.02" fill="#1c4d6e"/><rect x="7" y="8" width="1.02" height="1.02" fill="#1c4d6e"/><rect x="8" y="8" width="1.02" height="1.02" fill="#1c4d6e"/><rect x="9" y="8" width="1.02" height="1.02" fill="#3aa3e6"/><rect x="10" y="8" width="1.02" height="1.02" fill="#3aa3e6"/><rect x="11" y="8" width="1.02" height="1.02" fill="#3aa3e6"/><rect x="12" y="8" width="1.02" height="1.02" fill="#3aa3e6"/><rect x="13" y="8" width="1.02" height="1.02" fill="#2c89c7"/><rect x="14" y="8" width="1.02" height="1.02" fill="#171717"/><rect x="0" y="9" width="1.02" height="1.02" fill="#171717"/><rect x="1" y="9" width="1.02" height="1.02" fill="#43b4f5"/><rect x="2" y="9" width="1.02" height="1.02" fill="#3aa3e6"/><rect x="3" y="9" width="1.02" height="1.02" fill="#3aa3e6"/><rect x="4" y="9" width="1.02" height="1.02" fill="#3aa3e6"/><rect x="5" y="9" width="1.02" height="1.02" fill="#3aa3e6"/><rect x="6" y="9" width="1.02" height="1.02" fill="#3aa3e6"/><rect x="7" y="9" width="1.02" height="1.02" fill="#3aa3e6"/><rect x="8" y="9" width="1.02" height="1.02" fill="#3aa3e6"/><rect x="9" y="9" width="1.02" height="1.02" fill="#3aa3e6"/><rect x="10" y="9" width="1.02" height="1.02" fill="#3aa3e6"/><rect x="11" y="9" width="1.02" height="1.02" fill="#3aa3e6"/><rect x="12" y="9" width="1.02" height="1.02" fill="#2c89c7"/><rect x="13" y="9" width="1.02" height="1.02" fill="#2c89c7"/><rect x="14" y="9" width="1.02" height="1.02" fill="#171717"/><rect x="0" y="10" width="1.02" height="1.02" fill="#171717"/><rect x="1" y="10" width="1.02" height="1.02" fill="#43b4f5"/><rect x="2" y="10" width="1.02" height="1.02" fill="#3aa3e6"/><rect x="3" y="10" width="1.02" height="1.02" fill="#3aa3e6"/><rect x="4" y="10" width="1.02" height="1.02" fill="#3aa3e6"/><rect x="5" y="10" width="1.02" height="1.02" fill="#3aa3e6"/><rect x="6" y="10" width="1.02" height="1.02" fill="#3aa3e6"/><rect x="7" y="10" width="1.02" height="1.02" fill="#3aa3e6"/><rect x="8" y="10" width="1.02" height="1.02" fill="#3aa3e6"/><rect x="9" y="10" width="1.02" height="1.02" fill="#3aa3e6"/><rect x="10" y="10" width="1.02" height="1.02" fill="#3aa3e6"/><rect x="11" y="10" width="1.02" height="1.02" fill="#3aa3e6"/><rect x="12" y="10" width="1.02" height="1.02" fill="#2c89c7"/><rect x="13" y="10" width="1.02" height="1.02" fill="#2c89c7"/><rect x="14" y="10" width="1.02" height="1.02" fill="#171717"/><rect x="0" y="11" width="1.02" height="1.02" fill="#171717"/><rect x="1" y="11" width="1.02" height="1.02" fill="#43b4f5"/><rect x="2" y="11" width="1.02" height="1.02" fill="#3aa3e6"/><rect x="3" y="11" width="1.02" height="1.02" fill="#3aa3e6"/><rect x="4" y="11" width="1.02" height="1.02" fill="#3aa3e6"/><rect x="5" y="11" width="1.02" height="1.02" fill="#3aa3e6"/><rect x="6" y="11" width="1.02" height="1.02" fill="#3aa3e6"/><rect x="7" y="11" width="1.02" height="1.02" fill="#3aa3e6"/><rect x="8" y="11" width="1.02" height="1.02" fill="#3aa3e6"/><rect x="9" y="11" width="1.02" height="1.02" fill="#3aa3e6"/><rect x="10" y="11" width="1.02" height="1.02" fill="#3aa3e6"/><rect x="11" y="11" width="1.02" height="1.02" fill="#2c89c7"/><rect x="12" y="11" width="1.02" height="1.02" fill="#2c89c7"/><rect x="13" y="11" width="1.02" height="1.02" fill="#2c89c7"/><rect x="14" y="11" width="1.02" height="1.02" fill="#171717"/><rect x="0" y="12" width="1.02" height="1.02" fill="#171717"/><rect x="1" y="12" width="1.02" height="1.02" fill="#43b4f5"/><rect x="2" y="12" width="1.02" height="1.02" fill="#43b4f5"/><rect x="3" y="12" width="1.02" height="1.02" fill="#3aa3e6"/><rect x="4" y="12" width="1.02" height="1.02" fill="#3aa3e6"/><rect x="5" y="12" width="1.02" height="1.02" fill="#171717"/><rect x="6" y="12" width="1.02" height="1.02" fill="#171717"/><rect x="7" y="12" width="1.02" height="1.02" fill="#171717"/><rect x="8" y="12" width="1.02" height="1.02" fill="#171717"/><rect x="9" y="12" width="1.02" height="1.02" fill="#171717"/><rect x="10" y="12" width="1.02" height="1.02" fill="#3aa3e6"/><rect x="11" y="12" width="1.02" height="1.02" fill="#2c89c7"/><rect x="12" y="12" width="1.02" height="1.02" fill="#2c89c7"/><rect x="13" y="12" width="1.02" height="1.02" fill="#2c89c7"/><rect x="14" y="12" width="1.02" height="1.02" fill="#171717"/><rect x="0" y="13" width="1.02" height="1.02" fill="#171717"/><rect x="1" y="13" width="1.02" height="1.02" fill="#43b4f5"/><rect x="2" y="13" width="1.02" height="1.02" fill="#3aa3e6"/><rect x="3" y="13" width="1.02" height="1.02" fill="#3aa3e6"/><rect x="4" y="13" width="1.02" height="1.02" fill="#3aa3e6"/><rect x="5" y="13" width="1.02" height="1.02" fill="#3592cf"/><rect x="6" y="13" width="1.02" height="1.02" fill="#171717"/><rect x="8" y="13" width="1.02" height="1.02" fill="#171717"/><rect x="9" y="13" width="1.02" height="1.02" fill="#2c89c7"/><rect x="10" y="13" width="1.02" height="1.02" fill="#2c89c7"/><rect x="11" y="13" width="1.02" height="1.02" fill="#2c89c7"/><rect x="12" y="13" width="1.02" height="1.02" fill="#2c89c7"/><rect x="13" y="13" width="1.02" height="1.02" fill="#2c89c7"/><rect x="14" y="13" width="1.02" height="1.02" fill="#171717"/><rect x="0" y="14" width="1.02" height="1.02" fill="#171717"/><rect x="1" y="14" width="1.02" height="1.02" fill="#3592cf"/><rect x="2" y="14" width="1.02" height="1.02" fill="#3592cf"/><rect x="3" y="14" width="1.02" height="1.02" fill="#3592cf"/><rect x="4" y="14" width="1.02" height="1.02" fill="#3592cf"/><rect x="5" y="14" width="1.02" height="1.02" fill="#3592cf"/><rect x="6" y="14" width="1.02" height="1.02" fill="#171717"/><rect x="8" y="14" width="1.02" height="1.02" fill="#171717"/><rect x="9" y="14" width="1.02" height="1.02" fill="#2c89c7"/><rect x="10" y="14" width="1.02" height="1.02" fill="#2c89c7"/><rect x="11" y="14" width="1.02" height="1.02" fill="#2c89c7"/><rect x="12" y="14" width="1.02" height="1.02" fill="#2c89c7"/><rect x="13" y="14" width="1.02" height="1.02" fill="#2c89c7"/><rect x="14" y="14" width="1.02" height="1.02" fill="#171717"/><rect x="1" y="15" width="1.02" height="1.02" fill="#171717"/><rect x="2" y="15" width="1.02" height="1.02" fill="#171717"/><rect x="3" y="15" width="1.02" height="1.02" fill="#171717"/><rect x="4" y="15" width="1.02" height="1.02" fill="#171717"/><rect x="5" y="15" width="1.02" height="1.02" fill="#171717"/><rect x="9" y="15" width="1.02" height="1.02" fill="#171717"/><rect x="10" y="15" width="1.02" height="1.02" fill="#171717"/><rect x="11" y="15" width="1.02" height="1.02" fill="#171717"/><rect x="12" y="15" width="1.02" height="1.02" fill="#171717"/><rect x="13" y="15" width="1.02" height="1.02" fill="#171717"/></svg>
<div class="t" style="left:216.38px;top:872.50px;height:37px;line-height:37px;font-size:23.5px;color:#ffffff;">Clica</div>
<svg style="left:566px;top:789px" width="149" height="160" viewBox="0 0 15 16" preserveAspectRatio="none" shape-rendering="crispEdges"><rect x="1" y="0" width="1.02" height="1.02" fill="#171717"/><rect x="2" y="0" width="1.02" height="1.02" fill="#171717"/><rect x="3" y="0" width="1.02" height="1.02" fill="#171717"/><rect x="4" y="0" width="1.02" height="1.02" fill="#171717"/><rect x="5" y="0" width="1.02" height="1.02" fill="#171717"/><rect x="6" y="0" width="1.02" height="1.02" fill="#171717"/><rect x="7" y="0" width="1.02" height="1.02" fill="#171717"/><rect x="8" y="0" width="1.02" height="1.02" fill="#171717"/><rect x="9" y="0" width="1.02" height="1.02" fill="#171717"/><rect x="10" y="0" width="1.02" height="1.02" fill="#171717"/><rect x="11" y="0" width="1.02" height="1.02" fill="#171717"/><rect x="12" y="0" width="1.02" height="1.02" fill="#171717"/><rect x="13" y="0" width="1.02" height="1.02" fill="#171717"/><rect x="0" y="1" width="1.02" height="1.02" fill="#171717"/><rect x="1" y="1" width="1.02" height="1.02" fill="#171717"/><rect x="2" y="1" width="1.02" height="1.02" fill="#f648cb"/><rect x="3" y="1" width="1.02" height="1.02" fill="#f648cb"/><rect x="4" y="1" width="1.02" height="1.02" fill="#f648cb"/><rect x="5" y="1" width="1.02" height="1.02" fill="#f648cb"/><rect x="6" y="1" width="1.02" height="1.02" fill="#f648cb"/><rect x="7" y="1" width="1.02" height="1.02" fill="#f648cb"/><rect x="8" y="1" width="1.02" height="1.02" fill="#e134b6"/><rect x="9" y="1" width="1.02" height="1.02" fill="#e134b6"/><rect x="10" y="1" width="1.02" height="1.02" fill="#e134b6"/><rect x="11" y="1" width="1.02" height="1.02" fill="#e134b6"/><rect x="12" y="1" width="1.02" height="1.02" fill="#e134b6"/><rect x="13" y="1" width="1.02" height="1.02" fill="#171717"/><rect x="14" y="1" width="1.02" height="1.02" fill="#171717"/><rect x="0" y="2" width="1.02" height="1.02" fill="#171717"/><rect x="1" y="2" width="1.02" height="1.02" fill="#f648cb"/><rect x="2" y="2" width="1.02" height="1.02" fill="#f648cb"/><rect x="3" y="2" width="1.02" height="1.02" fill="#f648cb"/><rect x="4" y="2" width="1.02" height="1.02" fill="#f648cb"/><rect x="5" y="2" width="1.02" height="1.02" fill="#f648cb"/><rect x="6" y="2" width="1.02" height="1.02" fill="#f648cb"/><rect x="7" y="2" width="1.02" height="1.02" fill="#e134b6"/><rect x="8" y="2" width="1.02" height="1.02" fill="#e134b6"/><rect x="9" y="2" width="1.02" height="1.02" fill="#e134b6"/><rect x="10" y="2" width="1.02" height="1.02" fill="#e134b6"/><rect x="11" y="2" width="1.02" height="1.02" fill="#e134b6"/><rect x="12" y="2" width="1.02" height="1.02" fill="#e134b6"/><rect x="13" y="2" width="1.02" height="1.02" fill="#e134b6"/><rect x="14" y="2" width="1.02" height="1.02" fill="#171717"/><rect x="0" y="3" width="1.02" height="1.02" fill="#171717"/><rect x="1" y="3" width="1.02" height="1.02" fill="#f648cb"/><rect x="2" y="3" width="1.02" height="1.02" fill="#f648cb"/><rect x="3" y="3" width="1.02" height="1.02" fill="#f648cb"/><rect x="4" y="3" width="1.02" height="1.02" fill="#6a1650"/><rect x="5" y="3" width="1.02" height="1.02" fill="#f648cb"/><rect x="6" y="3" width="1.02" height="1.02" fill="#f648cb"/><rect x="7" y="3" width="1.02" height="1.02" fill="#e134b6"/><rect x="8" y="3" width="1.02" height="1.02" fill="#e134b6"/><rect x="9" y="3" width="1.02" height="1.02" fill="#e134b6"/><rect x="10" y="3" width="1.02" height="1.02" fill="#6a1650"/><rect x="11" y="3" width="1.02" height="1.02" fill="#e134b6"/><rect x="12" y="3" width="1.02" height="1.02" fill="#e134b6"/><rect x="13" y="3" width="1.02" height="1.02" fill="#e134b6"/><rect x="14" y="3" width="1.02" height="1.02" fill="#171717"/><rect x="0" y="4" width="1.02" height="1.02" fill="#171717"/><rect x="1" y="4" width="1.02" height="1.02" fill="#f648cb"/><rect x="2" y="4" width="1.02" height="1.02" fill="#f648cb"/><rect x="3" y="4" width="1.02" height="1.02" fill="#6a1650"/><rect x="4" y="4" width="1.02" height="1.02" fill="#f648cb"/><rect x="5" y="4" width="1.02" height="1.02" fill="#6a1650"/><rect x="6" y="4" width="1.02" height="1.02" fill="#e134b6"/><rect x="7" y="4" width="1.02" height="1.02" fill="#e134b6"/><rect x="8" y="4" width="1.02" height="1.02" fill="#e134b6"/><rect x="9" y="4" width="1.02" height="1.02" fill="#6a1650"/><rect x="10" y="4" width="1.02" height="1.02" fill="#e134b6"/><rect x="11" y="4" width="1.02" height="1.02" fill="#6a1650"/><rect x="12" y="4" width="1.02" height="1.02" fill="#e134b6"/><rect x="13" y="4" width="1.02" height="1.02" fill="#e134b6"/><rect x="14" y="4" width="1.02" height="1.02" fill="#171717"/><rect x="0" y="5" width="1.02" height="1.02" fill="#171717"/><rect x="1" y="5" width="1.02" height="1.02" fill="#f648cb"/><rect x="2" y="5" width="1.02" height="1.02" fill="#f648cb"/><rect x="3" y="5" width="1.02" height="1.02" fill="#f648cb"/><rect x="4" y="5" width="1.02" height="1.02" fill="#f648cb"/><rect x="5" y="5" width="1.02" height="1.02" fill="#e134b6"/><rect x="6" y="5" width="1.02" height="1.02" fill="#e134b6"/><rect x="7" y="5" width="1.02" height="1.02" fill="#e134b6"/><rect x="8" y="5" width="1.02" height="1.02" fill="#e134b6"/><rect x="9" y="5" width="1.02" height="1.02" fill="#e134b6"/><rect x="10" y="5" width="1.02" height="1.02" fill="#e134b6"/><rect x="11" y="5" width="1.02" height="1.02" fill="#e134b6"/><rect x="12" y="5" width="1.02" height="1.02" fill="#e134b6"/><rect x="13" y="5" width="1.02" height="1.02" fill="#e134b6"/><rect x="14" y="5" width="1.02" height="1.02" fill="#171717"/><rect x="0" y="6" width="1.02" height="1.02" fill="#171717"/><rect x="1" y="6" width="1.02" height="1.02" fill="#f648cb"/><rect x="2" y="6" width="1.02" height="1.02" fill="#f648cb"/><rect x="3" y="6" width="1.02" height="1.02" fill="#f648cb"/><rect x="4" y="6" width="1.02" height="1.02" fill="#e134b6"/><rect x="5" y="6" width="1.02" height="1.02" fill="#e134b6"/><rect x="6" y="6" width="1.02" height="1.02" fill="#e134b6"/><rect x="7" y="6" width="1.02" height="1.02" fill="#e134b6"/><rect x="8" y="6" width="1.02" height="1.02" fill="#e134b6"/><rect x="9" y="6" width="1.02" height="1.02" fill="#e134b6"/><rect x="10" y="6" width="1.02" height="1.02" fill="#e134b6"/><rect x="11" y="6" width="1.02" height="1.02" fill="#e134b6"/><rect x="12" y="6" width="1.02" height="1.02" fill="#e134b6"/><rect x="13" y="6" width="1.02" height="1.02" fill="#e134b6"/><rect x="14" y="6" width="1.02" height="1.02" fill="#171717"/><rect x="0" y="7" width="1.02" height="1.02" fill="#171717"/><rect x="1" y="7" width="1.02" height="1.02" fill="#f648cb"/><rect x="2" y="7" width="1.02" height="1.02" fill="#f648cb"/><rect x="3" y="7" width="1.02" height="1.02" fill="#e134b6"/><rect x="4" y="7" width="1.02" height="1.02" fill="#e134b6"/><rect x="5" y="7" width="1.02" height="1.02" fill="#6a1650"/><rect x="6" y="7" width="1.02" height="1.02" fill="#dcdcdc"/><rect x="7" y="7" width="1.02" height="1.02" fill="#dcdcdc"/><rect x="8" y="7" width="1.02" height="1.02" fill="#dcdcdc"/><rect x="9" y="7" width="1.02" height="1.02" fill="#6a1650"/><rect x="10" y="7" width="1.02" height="1.02" fill="#e134b6"/><rect x="11" y="7" width="1.02" height="1.02" fill="#e134b6"/><rect x="12" y="7" width="1.02" height="1.02" fill="#e134b6"/><rect x="13" y="7" width="1.02" height="1.02" fill="#c8259d"/><rect x="14" y="7" width="1.02" height="1.02" fill="#171717"/><rect x="0" y="8" width="1.02" height="1.02" fill="#171717"/><rect x="1" y="8" width="1.02" height="1.02" fill="#f648cb"/><rect x="2" y="8" width="1.02" height="1.02" fill="#e134b6"/><rect x="3" y="8" width="1.02" height="1.02" fill="#e134b6"/><rect x="4" y="8" width="1.02" height="1.02" fill="#e134b6"/><rect x="5" y="8" width="1.02" height="1.02" fill="#e134b6"/><rect x="6" y="8" width="1.02" height="1.02" fill="#6a1650"/><rect x="7" y="8" width="1.02" height="1.02" fill="#6a1650"/><rect x="8" y="8" width="1.02" height="1.02" fill="#6a1650"/><rect x="9" y="8" width="1.02" height="1.02" fill="#e134b6"/><rect x="10" y="8" width="1.02" height="1.02" fill="#e134b6"/><rect x="11" y="8" width="1.02" height="1.02" fill="#e134b6"/><rect x="12" y="8" width="1.02" height="1.02" fill="#e134b6"/><rect x="13" y="8" width="1.02" height="1.02" fill="#c8259d"/><rect x="14" y="8" width="1.02" height="1.02" fill="#171717"/><rect x="0" y="9" width="1.02" height="1.02" fill="#171717"/><rect x="1" y="9" width="1.02" height="1.02" fill="#f648cb"/><rect x="2" y="9" width="1.02" height="1.02" fill="#e134b6"/><rect x="3" y="9" width="1.02" height="1.02" fill="#e134b6"/><rect x="4" y="9" width="1.02" height="1.02" fill="#e134b6"/><rect x="5" y="9" width="1.02" height="1.02" fill="#e134b6"/><rect x="6" y="9" width="1.02" height="1.02" fill="#e134b6"/><rect x="7" y="9" width="1.02" height="1.02" fill="#e134b6"/><rect x="8" y="9" width="1.02" height="1.02" fill="#e134b6"/><rect x="9" y="9" width="1.02" height="1.02" fill="#e134b6"/><rect x="10" y="9" width="1.02" height="1.02" fill="#e134b6"/><rect x="11" y="9" width="1.02" height="1.02" fill="#e134b6"/><rect x="12" y="9" width="1.02" height="1.02" fill="#c8259d"/><rect x="13" y="9" width="1.02" height="1.02" fill="#c8259d"/><rect x="14" y="9" width="1.02" height="1.02" fill="#171717"/><rect x="0" y="10" width="1.02" height="1.02" fill="#171717"/><rect x="1" y="10" width="1.02" height="1.02" fill="#f648cb"/><rect x="2" y="10" width="1.02" height="1.02" fill="#e134b6"/><rect x="3" y="10" width="1.02" height="1.02" fill="#e134b6"/><rect x="4" y="10" width="1.02" height="1.02" fill="#e134b6"/><rect x="5" y="10" width="1.02" height="1.02" fill="#e134b6"/><rect x="6" y="10" width="1.02" height="1.02" fill="#e134b6"/><rect x="7" y="10" width="1.02" height="1.02" fill="#e134b6"/><rect x="8" y="10" width="1.02" height="1.02" fill="#e134b6"/><rect x="9" y="10" width="1.02" height="1.02" fill="#e134b6"/><rect x="10" y="10" width="1.02" height="1.02" fill="#e134b6"/><rect x="11" y="10" width="1.02" height="1.02" fill="#e134b6"/><rect x="12" y="10" width="1.02" height="1.02" fill="#c8259d"/><rect x="13" y="10" width="1.02" height="1.02" fill="#c8259d"/><rect x="14" y="10" width="1.02" height="1.02" fill="#171717"/><rect x="0" y="11" width="1.02" height="1.02" fill="#171717"/><rect x="1" y="11" width="1.02" height="1.02" fill="#f648cb"/><rect x="2" y="11" width="1.02" height="1.02" fill="#e134b6"/><rect x="3" y="11" width="1.02" height="1.02" fill="#e134b6"/><rect x="4" y="11" width="1.02" height="1.02" fill="#e134b6"/><rect x="5" y="11" width="1.02" height="1.02" fill="#e134b6"/><rect x="6" y="11" width="1.02" height="1.02" fill="#e134b6"/><rect x="7" y="11" width="1.02" height="1.02" fill="#e134b6"/><rect x="8" y="11" width="1.02" height="1.02" fill="#e134b6"/><rect x="9" y="11" width="1.02" height="1.02" fill="#e134b6"/><rect x="10" y="11" width="1.02" height="1.02" fill="#e134b6"/><rect x="11" y="11" width="1.02" height="1.02" fill="#c8259d"/><rect x="12" y="11" width="1.02" height="1.02" fill="#c8259d"/><rect x="13" y="11" width="1.02" height="1.02" fill="#c8259d"/><rect x="14" y="11" width="1.02" height="1.02" fill="#171717"/><rect x="0" y="12" width="1.02" height="1.02" fill="#171717"/><rect x="1" y="12" width="1.02" height="1.02" fill="#f648cb"/><rect x="2" y="12" width="1.02" height="1.02" fill="#f648cb"/><rect x="3" y="12" width="1.02" height="1.02" fill="#e134b6"/><rect x="4" y="12" width="1.02" height="1.02" fill="#e134b6"/><rect x="5" y="12" width="1.02" height="1.02" fill="#171717"/><rect x="6" y="12" width="1.02" height="1.02" fill="#171717"/><rect x="7" y="12" width="1.02" height="1.02" fill="#171717"/><rect x="8" y="12" width="1.02" height="1.02" fill="#171717"/><rect x="9" y="12" width="1.02" height="1.02" fill="#171717"/><rect x="10" y="12" width="1.02" height="1.02" fill="#e134b6"/><rect x="11" y="12" width="1.02" height="1.02" fill="#c8259d"/><rect x="12" y="12" width="1.02" height="1.02" fill="#c8259d"/><rect x="13" y="12" width="1.02" height="1.02" fill="#c8259d"/><rect x="14" y="12" width="1.02" height="1.02" fill="#171717"/><rect x="0" y="13" width="1.02" height="1.02" fill="#171717"/><rect x="1" y="13" width="1.02" height="1.02" fill="#f648cb"/><rect x="2" y="13" width="1.02" height="1.02" fill="#e134b6"/><rect x="3" y="13" width="1.02" height="1.02" fill="#e134b6"/><rect x="4" y="13" width="1.02" height="1.02" fill="#e134b6"/><rect x="5" y="13" width="1.02" height="1.02" fill="#cf2ea6"/><rect x="6" y="13" width="1.02" height="1.02" fill="#171717"/><rect x="8" y="13" width="1.02" height="1.02" fill="#171717"/><rect x="9" y="13" width="1.02" height="1.02" fill="#c8259d"/><rect x="10" y="13" width="1.02" height="1.02" fill="#c8259d"/><rect x="11" y="13" width="1.02" height="1.02" fill="#c8259d"/><rect x="12" y="13" width="1.02" height="1.02" fill="#c8259d"/><rect x="13" y="13" width="1.02" height="1.02" fill="#c8259d"/><rect x="14" y="13" width="1.02" height="1.02" fill="#171717"/><rect x="0" y="14" width="1.02" height="1.02" fill="#171717"/><rect x="1" y="14" width="1.02" height="1.02" fill="#cf2ea6"/><rect x="2" y="14" width="1.02" height="1.02" fill="#cf2ea6"/><rect x="3" y="14" width="1.02" height="1.02" fill="#cf2ea6"/><rect x="4" y="14" width="1.02" height="1.02" fill="#cf2ea6"/><rect x="5" y="14" width="1.02" height="1.02" fill="#cf2ea6"/><rect x="6" y="14" width="1.02" height="1.02" fill="#171717"/><rect x="8" y="14" width="1.02" height="1.02" fill="#171717"/><rect x="9" y="14" width="1.02" height="1.02" fill="#c8259d"/><rect x="10" y="14" width="1.02" height="1.02" fill="#c8259d"/><rect x="11" y="14" width="1.02" height="1.02" fill="#c8259d"/><rect x="12" y="14" width="1.02" height="1.02" fill="#c8259d"/><rect x="13" y="14" width="1.02" height="1.02" fill="#c8259d"/><rect x="14" y="14" width="1.02" height="1.02" fill="#171717"/><rect x="1" y="15" width="1.02" height="1.02" fill="#171717"/><rect x="2" y="15" width="1.02" height="1.02" fill="#171717"/><rect x="3" y="15" width="1.02" height="1.02" fill="#171717"/><rect x="4" y="15" width="1.02" height="1.02" fill="#171717"/><rect x="5" y="15" width="1.02" height="1.02" fill="#171717"/><rect x="9" y="15" width="1.02" height="1.02" fill="#171717"/><rect x="10" y="15" width="1.02" height="1.02" fill="#171717"/><rect x="11" y="15" width="1.02" height="1.02" fill="#171717"/><rect x="12" y="15" width="1.02" height="1.02" fill="#171717"/><rect x="13" y="15" width="1.02" height="1.02" fill="#171717"/></svg>
<div class="t" style="left:614.38px;top:872.50px;height:37px;line-height:37px;font-size:23.5px;color:#ffffff;">Clica</div>
<div style="left:877px;top:633px;width:611px;height:20px;background:#282828;"></div>
<div style="left:877px;top:633px;width:81px;height:20px;background:#3c3c3c;border-radius:3px 3px 0 0;"></div>
<svg style="left:885px;top:638px" width="13" height="11" viewBox="0 0 13 11"><path d="M0,1 A1,1 0 0 1 1,0 H4.5 L6,1.5 H12 A1,1 0 0 1 13,2.5 V10 A1,1 0 0 1 12,11 H1 A1,1 0 0 1 0,10Z" fill="#c4c4c4"/></svg>
<div class="t" style="left:901.00px;top:634.50px;height:19px;line-height:19px;font-size:12px;color:#c4c4c4;letter-spacing:0.665px;">Project</div>
<svg style="left:1453px;top:638px" width="10" height="11" viewBox="0 0 10 11"><rect x="0.75" y="5.25" width="8.5" height="5" fill="none" stroke="#c4c4c4" stroke-width="1.5"/><path d="M2.5,5 V3 A2.5,2.5 0 0 1 7.5,3" fill="none" stroke="#c4c4c4" stroke-width="1.4"/></svg>
<svg style="left:1474px;top:638px" width="3" height="12" viewBox="0 0 3 12"><circle cx="1.5" cy="1.5" r="1.2" fill="#c4c4c4"/><circle cx="1.5" cy="6" r="1.2" fill="#c4c4c4"/><circle cx="1.5" cy="10.5" r="1.2" fill="#c4c4c4"/></svg>
<div style="left:877px;top:653px;width:611px;height:20px;background:#3c3c3c;"></div>
<div style="left:889px;top:657px;width:2px;height:12px;background:#c4c4c4;"></div>
<div style="left:884px;top:662px;width:12px;height:2px;background:#c4c4c4;"></div>
<svg style="left:900px;top:661px" width="8" height="4" viewBox="0 0 8 4"><polygon points="0,0 8,0 4,4" fill="#c4c4c4"/></svg>
<div style="left:1449px;top:653px;width:1px;height:20px;background:#2a2a2a;"></div>
<svg style="left:1455px;top:657px" width="15" height="12" viewBox="0 0 15 12"><path d="M1,6.5 Q7,0 14,6.5 Q7,12.5 1,6.5Z" fill="none" stroke="#c4c4c4" stroke-width="1.1"/><circle cx="7.5" cy="6.3" r="2.2" fill="#c4c4c4"/><path d="M2,11.5 L12,1" stroke="#c4c4c4" stroke-width="1.2"/></svg>
<div class="t" style="left:1472.00px;top:654.50px;height:19px;line-height:19px;font-size:12px;color:#c4c4c4;letter-spacing:-1.173px;">21</div>
<div style="left:877px;top:673px;width:611px;height:1px;background:#262626;"></div>
<div style="left:877px;top:674px;width:195px;height:344px;background:#383838;"></div>
<div style="left:1072px;top:674px;width:13px;height:344px;background:#2e2e2e;"></div>
<div style="left:1074px;top:674px;width:9px;height:239px;background:#5f5f5f;border-radius:4px;"></div>
<svg style="left:1075px;top:1007px" width="8" height="4" viewBox="0 0 8 4"><polygon points="0,0 8,0 4,4" fill="#c4c4c4"/></svg>
<div style="left:1085px;top:674px;width:403px;height:344px;background:#333333;"></div>
<div style="left:1085px;top:674px;width:403px;height:20px;background:#3c3c3c;"></div>
<div style="left:1085px;top:694px;width:403px;height:1px;background:#2a2a2a;"></div>
<div style="left:1085px;top:674px;width:1px;height:344px;background:#242424;"></div>
<div style="left:1085px;top:997px;width:403px;height:21px;background:#404040;"></div>
<svg style="left:1415px;top:1002px" width="60" height="12" viewBox="0 0 60 12"><rect x="6" y="5" width="51" height="2" fill="#5e5e5e"/><circle cx="7" cy="6" r="5.1" fill="#9c9c9c"/></svg>
<div style="left:877px;top:1002px;width:195px;height:16px;background:#4d4d4d;"></div>
<svg style="left:912px;top:672px" width="9" height="9" viewBox="0 0 9 9"><polygon points="0,1 9,1 4.5,8" fill="#7f7f7f"/></svg>
<svg style="left:923px;top:671px" width="14" height="11" viewBox="0 0 14 11"><path d="M0.6,10.4 V0.8 H4.5 L5.8,2.2 H11 V4" fill="none" stroke="#c4c4c4" stroke-width="1.2"/><path d="M0.6,10.4 L3,4.5 H13.5 L11,10.4Z" fill="#c4c4c4"/></svg>
<div class="t" style="left:939.00px;top:666.00px;height:20px;line-height:20px;font-size:12.6px;color:#c4c4c4;">2D Mega Pack</div>
<svg style="left:937px;top:685px" width="13" height="11" viewBox="0 0 13 11"><path d="M0,1 A1,1 0 0 1 1,0 H4.5 L6,1.5 H12 A1,1 0 0 1 13,2.5 V10 A1,1 0 0 1 12,11 H1 A1,1 0 0 1 0,10Z" fill="#c4c4c4"/></svg>
<div class="t" style="left:953.00px;top:680.00px;height:20px;line-height:20px;font-size:12.6px;color:#c4c4c4;">-- Read Me</div>
<svg style="left:937px;top:701px" width="13" height="11" viewBox="0 0 13 11"><path d="M0,1 A1,1 0 0 1 1,0 H4.5 L6,1.5 H12 A1,1 0 0 1 13,2.5 V10 A1,1 0 0 1 12,11 H1 A1,1 0 0 1 0,10Z" fill="#c4c4c4"/></svg>
<div class="t" style="left:953.00px;top:696.00px;height:20px;line-height:20px;font-size:12.6px;color:#c4c4c4;">Backgrounds</div>
<svg style="left:926px;top:718px" width="9" height="9" viewBox="0 0 9 9"><polygon points="0,1 9,1 4.5,8" fill="#7f7f7f"/></svg>
<svg style="left:937px;top:717px" width="14" height="11" viewBox="0 0 14 11"><path d="M0.6,10.4 V0.8 H4.5 L5.8,2.2 H11 V4" fill="none" stroke="#c4c4c4" stroke-width="1.2"/><path d="M0.6,10.4 L3,4.5 H13.5 L11,10.4Z" fill="#c4c4c4"/></svg>
<div class="t" style="left:953.00px;top:712.00px;height:20px;line-height:20px;font-size:12.6px;color:#c4c4c4;">Characters</div>
<svg style="left:940px;top:734px" width="9" height="9" viewBox="0 0 9 9"><polygon points="0,1 9,1 4.5,8" fill="#7f7f7f"/></svg>
<svg style="left:951px;top:733px" width="14" height="11" viewBox="0 0 14 11"><path d="M0.6,10.4 V0.8 H4.5 L5.8,2.2 H11 V4" fill="none" stroke="#c4c4c4" stroke-width="1.2"/><path d="M0.6,10.4 L3,4.5 H13.5 L11,10.4Z" fill="#c4c4c4"/></svg>
<div class="t" style="left:967.00px;top:728.00px;height:20px;line-height:20px;font-size:12.6px;color:#c4c4c4;">Animals</div>
<svg style="left:965px;top:749px" width="13" height="11" viewBox="0 0 13 11"><path d="M0,1 A1,1 0 0 1 1,0 H4.5 L6,1.5 H12 A1,1 0 0 1 13,2.5 V10 A1,1 0 0 1 12,11 H1 A1,1 0 0 1 0,10Z" fill="#c4c4c4"/></svg>
<div class="t" style="left:981.00px;top:744.00px;height:20px;line-height:20px;font-size:12.6px;color:#c4c4c4;">Bat</div>
<svg style="left:965px;top:765px" width="13" height="11" viewBox="0 0 13 11"><path d="M0,1 A1,1 0 0 1 1,0 H4.5 L6,1.5 H12 A1,1 0 0 1 13,2.5 V10 A1,1 0 0 1 12,11 H1 A1,1 0 0 1 0,10Z" fill="#c4c4c4"/></svg>
<div class="t" style="left:981.00px;top:760.00px;height:20px;line-height:20px;font-size:12.6px;color:#c4c4c4;">Bee</div>
<svg style="left:940px;top:782px" width="9" height="9" viewBox="0 0 9 9"><polygon points="0,1 9,1 4.5,8" fill="#7f7f7f"/></svg>
<svg style="left:951px;top:781px" width="14" height="11" viewBox="0 0 14 11"><path d="M0.6,10.4 V0.8 H4.5 L5.8,2.2 H11 V4" fill="none" stroke="#c4c4c4" stroke-width="1.2"/><path d="M0.6,10.4 L3,4.5 H13.5 L11,10.4Z" fill="#c4c4c4"/></svg>
<div class="t" style="left:967.00px;top:776.00px;height:20px;line-height:20px;font-size:12.6px;color:#c4c4c4;">Bosses</div>
<svg style="left:965px;top:797px" width="13" height="11" viewBox="0 0 13 11"><path d="M0,1 A1,1 0 0 1 1,0 H4.5 L6,1.5 H12 A1,1 0 0 1 13,2.5 V10 A1,1 0 0 1 12,11 H1 A1,1 0 0 1 0,10Z" fill="#c4c4c4"/></svg>
<div class="t" style="left:981.00px;top:792.00px;height:20px;line-height:20px;font-size:12.6px;color:#c4c4c4;">Boss</div>
<svg style="left:951px;top:813px" width="13" height="11" viewBox="0 0 13 11"><path d="M0,1 A1,1 0 0 1 1,0 H4.5 L6,1.5 H12 A1,1 0 0 1 13,2.5 V10 A1,1 0 0 1 12,11 H1 A1,1 0 0 1 0,10Z" fill="#c4c4c4"/></svg>
<div class="t" style="left:967.00px;top:808.00px;height:20px;line-height:20px;font-size:12.6px;color:#c4c4c4;">Robot</div>
<svg style="left:937px;top:830px" width="9" height="9" viewBox="0 0 9 9"><polygon points="1,0.5 8,4.5 1,8.5" fill="#6e6e6e"/></svg>
<svg style="left:951px;top:829px" width="13" height="11" viewBox="0 0 13 11"><path d="M0,1 A1,1 0 0 1 1,0 H4.5 L6,1.5 H12 A1,1 0 0 1 13,2.5 V10 A1,1 0 0 1 12,11 H1 A1,1 0 0 1 0,10Z" fill="#c4c4c4"/></svg>
<div class="t" style="left:967.00px;top:824.00px;height:20px;line-height:20px;font-size:12.6px;color:#c4c4c4;">Slime</div>
<svg style="left:951px;top:845px" width="13" height="11" viewBox="0 0 13 11"><path d="M0,1 A1,1 0 0 1 1,0 H4.5 L6,1.5 H12 A1,1 0 0 1 13,2.5 V10 A1,1 0 0 1 12,11 H1 A1,1 0 0 1 0,10Z" fill="#c4c4c4"/></svg>
<div class="t" style="left:967.00px;top:840.00px;height:20px;line-height:20px;font-size:12.6px;color:#c4c4c4;">Stickman</div>
<svg style="left:923px;top:862px" width="9" height="9" viewBox="0 0 9 9"><polygon points="1,0.5 8,4.5 1,8.5" fill="#6e6e6e"/></svg>
<svg style="left:937px;top:861px" width="13" height="11" viewBox="0 0 13 11"><path d="M0,1 A1,1 0 0 1 1,0 H4.5 L6,1.5 H12 A1,1 0 0 1 13,2.5 V10 A1,1 0 0 1 12,11 H1 A1,1 0 0 1 0,10Z" fill="#c4c4c4"/></svg>
<div class="t" style="left:953.00px;top:856.00px;height:20px;line-height:20px;font-size:12.6px;color:#c4c4c4;">Effects</div>
<svg style="left:923px;top:878px" width="9" height="9" viewBox="0 0 9 9"><polygon points="1,0.5 8,4.5 1,8.5" fill="#6e6e6e"/></svg>
<svg style="left:937px;top:877px" width="13" height="11" viewBox="0 0 13 11"><path d="M0,1 A1,1 0 0 1 1,0 H4.5 L6,1.5 H12 A1,1 0 0 1 13,2.5 V10 A1,1 0 0 1 12,11 H1 A1,1 0 0 1 0,10Z" fill="#c4c4c4"/></svg>
<div class="t" style="left:953.00px;top:872.00px;height:20px;line-height:20px;font-size:12.6px;color:#c4c4c4;">Enemies</div>
<svg style="left:923px;top:894px" width="9" height="9" viewBox="0 0 9 9"><polygon points="1,0.5 8,4.5 1,8.5" fill="#6e6e6e"/></svg>
<svg style="left:937px;top:893px" width="13" height="11" viewBox="0 0 13 11"><path d="M0,1 A1,1 0 0 1 1,0 H4.5 L6,1.5 H12 A1,1 0 0 1 13,2.5 V10 A1,1 0 0 1 12,11 H1 A1,1 0 0 1 0,10Z" fill="#c4c4c4"/></svg>
<div class="t" style="left:953.00px;top:888.00px;height:20px;line-height:20px;font-size:12.6px;color:#c4c4c4;">Environment</div>
<svg style="left:937px;top:909px" width="13" height="11" viewBox="0 0 13 11"><path d="M0,1 A1,1 0 0 1 1,0 H4.5 L6,1.5 H12 A1,1 0 0 1 13,2.5 V10 A1,1 0 0 1 12,11 H1 A1,1 0 0 1 0,10Z" fill="#c4c4c4"/></svg>
<div class="t" style="left:953.00px;top:904.00px;height:20px;line-height:20px;font-size:12.6px;color:#c4c4c4;">Extra</div>
<svg style="left:923px;top:926px" width="9" height="9" viewBox="0 0 9 9"><polygon points="1,0.5 8,4.5 1,8.5" fill="#6e6e6e"/></svg>
<svg style="left:937px;top:925px" width="13" height="11" viewBox="0 0 13 11"><path d="M0,1 A1,1 0 0 1 1,0 H4.5 L6,1.5 H12 A1,1 0 0 1 13,2.5 V10 A1,1 0 0 1 12,11 H1 A1,1 0 0 1 0,10Z" fill="#c4c4c4"/></svg>
<div class="t" style="left:953.00px;top:920.00px;height:20px;line-height:20px;font-size:12.6px;color:#c4c4c4;">Food &amp; Plants</div>
<svg style="left:923px;top:942px" width="9" height="9" viewBox="0 0 9 9"><polygon points="1,0.5 8,4.5 1,8.5" fill="#6e6e6e"/></svg>
<svg style="left:937px;top:941px" width="13" height="11" viewBox="0 0 13 11"><path d="M0,1 A1,1 0 0 1 1,0 H4.5 L6,1.5 H12 A1,1 0 0 1 13,2.5 V10 A1,1 0 0 1 12,11 H1 A1,1 0 0 1 0,10Z" fill="#c4c4c4"/></svg>
<div class="t" style="left:953.00px;top:936.00px;height:20px;line-height:20px;font-size:12.6px;color:#c4c4c4;">Items &amp; Icons</div>
<svg style="left:937px;top:957px" width="13" height="11" viewBox="0 0 13 11"><path d="M0,1 A1,1 0 0 1 1,0 H4.5 L6,1.5 H12 A1,1 0 0 1 13,2.5 V10 A1,1 0 0 1 12,11 H1 A1,1 0 0 1 0,10Z" fill="#c4c4c4"/></svg>
<div class="t" style="left:953.00px;top:952.00px;height:20px;line-height:20px;font-size:12.6px;color:#c4c4c4;">Platforms</div>
<svg style="left:937px;top:973px" width="13" height="11" viewBox="0 0 13 11"><path d="M0,1 A1,1 0 0 1 1,0 H4.5 L6,1.5 H12 A1,1 0 0 1 13,2.5 V10 A1,1 0 0 1 12,11 H1 A1,1 0 0 1 0,10Z" fill="#c4c4c4"/></svg>
<div class="t" style="left:953.00px;top:968.00px;height:20px;line-height:20px;font-size:12.6px;color:#c4c4c4;">Shapes</div>
<svg style="left:937px;top:989px" width="13" height="11" viewBox="0 0 13 11"><path d="M0,1 A1,1 0 0 1 1,0 H4.5 L6,1.5 H12 A1,1 0 0 1 13,2.5 V10 A1,1 0 0 1 12,11 H1 A1,1 0 0 1 0,10Z" fill="#c4c4c4"/></svg>
<div class="t" style="left:953.00px;top:984.00px;height:20px;line-height:20px;font-size:12.6px;color:#c4c4c4;">Sounds</div>
<svg style="left:923px;top:1006px" width="9" height="9" viewBox="0 0 9 9"><polygon points="1,0.5 8,4.5 1,8.5" fill="#6e6e6e"/></svg>
<svg style="left:937px;top:1005px" width="13" height="11" viewBox="0 0 13 11"><path d="M0,1 A1,1 0 0 1 1,0 H4.5 L6,1.5 H12 A1,1 0 0 1 13,2.5 V10 A1,1 0 0 1 12,11 H1 A1,1 0 0 1 0,10Z" fill="#c4c4c4"/></svg>
<div class="t" style="left:953.00px;top:1000.00px;height:20px;line-height:20px;font-size:12.6px;color:#c4c4c4;">UI</div>
<div style="left:877px;top:653px;width:611px;height:20px;background:#3c3c3c;"></div>
<div style="left:889px;top:657px;width:2px;height:12px;background:#c4c4c4;"></div>
<div style="left:884px;top:662px;width:12px;height:2px;background:#c4c4c4;"></div>
<svg style="left:900px;top:661px" width="8" height="4" viewBox="0 0 8 4"><polygon points="0,0 8,0 4,4" fill="#c4c4c4"/></svg>
<div style="left:1449px;top:653px;width:1px;height:20px;background:#2a2a2a;"></div>
<svg style="left:1455px;top:657px" width="15" height="12" viewBox="0 0 15 12"><path d="M1,6.5 Q7,0 14,6.5 Q7,12.5 1,6.5Z" fill="none" stroke="#c4c4c4" stroke-width="1.1"/><circle cx="7.5" cy="6.3" r="2.2" fill="#c4c4c4"/><path d="M2,11.5 L12,1" stroke="#c4c4c4" stroke-width="1.2"/></svg>
<div class="t" style="left:1472.00px;top:654.50px;height:19px;line-height:19px;font-size:12px;color:#c4c4c4;letter-spacing:-1.173px;">21</div>
<div style="left:877px;top:673px;width:611px;height:1px;background:#262626;"></div>
<div style="left:1490px;top:73px;width:430px;height:19px;background:#282828;"></div>
<div style="left:1490px;top:73px;width:95px;height:19px;background:#3c3c3c;border-radius:3px 3px 0 0;"></div>
<svg style="left:1499px;top:78px" width="11" height="11" viewBox="0 0 11 11"><circle cx="5.5" cy="5.5" r="5.2" fill="#c4c4c4"/><rect x="4.6" y="4.5" width="1.8" height="4.5" fill="#3c3c3c"/><circle cx="5.5" cy="2.8" r="1" fill="#3c3c3c"/></svg>
<div class="t" style="left:1514.00px;top:73.50px;height:19px;line-height:19px;font-size:12px;color:#c4c4c4;letter-spacing:0.405px;">Inspector</div>
<svg style="left:1884px;top:77px" width="10" height="11" viewBox="0 0 10 11"><rect x="0.75" y="5.25" width="8.5" height="5" fill="none" stroke="#c4c4c4" stroke-width="1.5"/><path d="M2.5,5 V3 A2.5,2.5 0 0 1 7.5,3" fill="none" stroke="#c4c4c4" stroke-width="1.4"/></svg>
<svg style="left:1905px;top:77px" width="3" height="12" viewBox="0 0 3 12"><circle cx="1.5" cy="1.5" r="1.2" fill="#c4c4c4"/><circle cx="1.5" cy="6" r="1.2" fill="#c4c4c4"/><circle cx="1.5" cy="10.5" r="1.2" fill="#c4c4c4"/></svg>
<div style="left:1490px;top:92px;width:430px;height:926px;background:#383838;"></div>
<div style="left:1490px;top:92px;width:430px;height:59px;background:#3e3e3e;"></div>
<div style="left:1490px;top:151px;width:430px;height:1px;background:#232323;"></div>
<svg style="left:1498px;top:102px" width="20" height="24" viewBox="0 0 20 24"><path d="M9.5,1 L18,5.5 V15.5 L9.5,20 L1,15.5 V5.5Z M1,5.5 L9.5,10 L18,5.5 M9.5,10 V20" fill="none" stroke="#c4c4c4" stroke-width="1.2" stroke-linejoin="round"/></svg>
<svg style="left:1515px;top:123px" width="8" height="4" viewBox="0 0 8 4"><polygon points="0,0 8,0 4,4" fill="#c4c4c4"/></svg>
<div style="left:1538px;top:103px;width:14px;height:14px;background:#2a2a2a;border:1px solid #212121;border-radius:2px;box-sizing:border-box;"></div>
<svg style="left:1538px;top:103px" width="14" height="14" viewBox="0 0 14 14"><path d="M3,7.2 L5.8,10 L11,3.8" fill="none" stroke="#c4c4c4" stroke-width="1.6"/></svg>
<div style="left:1558px;top:101px;width:281px;height:18px;background:#2a2a2a;border:1px solid #212121;border-radius:3px;box-sizing:border-box;"></div>
<div class="t" style="left:1561.00px;top:100.50px;height:20px;line-height:20px;font-size:13px;color:#d2d2d2;font-weight:bold;letter-spacing:0.126px;">Canvas</div>
<div style="left:1842px;top:103px;width:14px;height:14px;background:#2a2a2a;border:1px solid #212121;border-radius:2px;box-sizing:border-box;"></div>
<div class="t" style="left:1860.00px;top:100.00px;height:20px;line-height:20px;font-size:12.6px;color:#c4c4c4;letter-spacing:0.081px;">Static</div>
<svg style="left:1906px;top:108px" width="8" height="4" viewBox="0 0 8 4"><polygon points="0,0 8,0 4,4" fill="#c4c4c4"/></svg>
<div class="t" style="left:1530.00px;top:124.50px;height:20px;line-height:20px;font-size:12.6px;color:#c4c4c4;letter-spacing:0.229px;">Tag</div>
<div style="left:1558px;top:126px;width:158px;height:17px;background:#515151;border:1px solid #303030;border-radius:3px;box-sizing:border-box;"></div>
<div class="t" style="left:1562.00px;top:124.50px;height:20px;line-height:20px;font-size:12.6px;color:#c4c4c4;letter-spacing:0.045px;">Untagged</div>
<svg style="left:1704px;top:132.5px" width="8" height="4" viewBox="0 0 8 4"><polygon points="0,0 8,0 4,4" fill="#c4c4c4"/></svg>
<div class="t" style="left:1729.50px;top:124.50px;height:20px;line-height:20px;font-size:12.6px;color:#c4c4c4;letter-spacing:-0.103px;">Layer</div>
<div style="left:1769px;top:126px;width:146px;height:17px;background:#515151;border:1px solid #303030;border-radius:3px;box-sizing:border-box;"></div>
<div class="t" style="left:1773.00px;top:124.50px;height:20px;line-height:20px;font-size:12.6px;color:#c4c4c4;letter-spacing:0.200px;">UI</div>
<svg style="left:1903px;top:132.5px" width="8" height="4" viewBox="0 0 8 4"><polygon points="0,0 8,0 4,4" fill="#c4c4c4"/></svg>
<div style="left:1490px;top:152px;width:430px;height:21px;background:#3e3e3e;"></div>
<svg style="left:1496px;top:158px" width="9" height="9" viewBox="0 0 9 9"><polygon points="0,1 9,1 4.5,8" fill="#8a8a8a"/></svg>
<svg style="left:1511px;top:155px" width="14" height="14" viewBox="0 0 14 14"><polygon points="0.5,3.2 3.3,0.6 6.5,6.3" fill="#d0d0d0"/><polygon points="13.5,3.2 10.7,0.6 7.5,6.3" fill="#d0d0d0"/><polygon points="0.5,10.8 3.3,13.4 6.5,7.7" fill="#d0d0d0"/><polygon points="13.5,10.8 10.7,13.4 7.5,7.7" fill="#d0d0d0"/></svg>
<div class="t" style="left:1550.00px;top:152.00px;height:21px;line-height:21px;font-size:13.3px;color:#d2d2d2;font-weight:bold;letter-spacing:0.074px;">Rect Transform</div>
<svg style="left:1862px;top:157px" width="11" height="11" viewBox="0 0 11 11"><circle cx="5.5" cy="5.5" r="5.2" fill="#c4c4c4"/><path d="M3.6,4.2 A1.9,1.9 0 1 1 6.4,5.8 Q5.5,6.3 5.5,7" fill="none" stroke="#3e3e3e" stroke-width="1.4"/><circle cx="5.5" cy="8.7" r="0.85" fill="#3e3e3e"/></svg>
<svg style="left:1881px;top:157px" width="12" height="11" viewBox="0 0 12 11"><path d="M0,3 H12 M0,8 H12" stroke="#c4c4c4" stroke-width="1.3"/><path d="M7.5,0.5 V5.5 M4,5.5 V10.5" stroke="#c4c4c4" stroke-width="1.5"/></svg>
<svg style="left:1906px;top:157px" width="3" height="12" viewBox="0 0 3 12"><circle cx="1.5" cy="1.5" r="1.2" fill="#c4c4c4"/><circle cx="1.5" cy="6" r="1.2" fill="#c4c4c4"/><circle cx="1.5" cy="10.5" r="1.2" fill="#c4c4c4"/></svg>
<div style="left:1490px;top:173px;width:430px;height:1px;background:#333;"></div>
<div style="left:1508px;top:177px;width:407px;height:18px;background:#3d3d3d;border:1px solid #2a2a2a;border-radius:3px;box-sizing:border-box;"></div>
<div class="t" style="left:1512.00px;top:178.00px;height:16px;line-height:16px;font-size:10.6px;color:#b0b0b0;letter-spacing:-0.054px;">Some values driven by Canvas.</div>
<div class="t" style="left:1661.50px;top:198.50px;height:20px;line-height:20px;font-size:12.6px;color:#858585;letter-spacing:-0.523px;">Pos X</div>
<div class="t" style="left:1747.50px;top:198.50px;height:20px;line-height:20px;font-size:12.6px;color:#858585;letter-spacing:-0.478px;">Pos Y</div>
<div class="t" style="left:1833.50px;top:198.50px;height:20px;line-height:20px;font-size:12.6px;color:#858585;letter-spacing:-0.382px;">Pos Z</div>
<div style="left:1660px;top:217px;width:84px;height:18px;background:#2e2e2e;border:1px solid #212121;border-radius:3px;box-sizing:border-box;"></div>
<div class="t" style="left:1663.00px;top:216.50px;height:20px;line-height:20px;font-size:12.6px;color:#858585;">437.5</div>
<div style="left:1746px;top:217px;width:84px;height:18px;background:#2e2e2e;border:1px solid #212121;border-radius:3px;box-sizing:border-box;"></div>
<div class="t" style="left:1749.00px;top:216.50px;height:20px;line-height:20px;font-size:12.6px;color:#858585;">172</div>
<div style="left:1832px;top:217px;width:84px;height:18px;background:#2e2e2e;border:1px solid #212121;border-radius:3px;box-sizing:border-box;"></div>
<div class="t" style="left:1835.00px;top:216.50px;height:20px;line-height:20px;font-size:12.6px;color:#858585;">0</div>
<div class="t" style="left:1661.50px;top:234.50px;height:20px;line-height:20px;font-size:12.6px;color:#858585;letter-spacing:-0.041px;">Width</div>
<div class="t" style="left:1747.50px;top:234.50px;height:20px;line-height:20px;font-size:12.6px;color:#858585;letter-spacing:0.097px;">Height</div>
<div style="left:1660px;top:253px;width:84px;height:18px;background:#2e2e2e;border:1px solid #212121;border-radius:3px;box-sizing:border-box;"></div>
<div class="t" style="left:1663.00px;top:252.00px;height:20px;line-height:20px;font-size:12.6px;color:#858585;">875</div>
<div style="left:1746px;top:253px;width:84px;height:18px;background:#2e2e2e;border:1px solid #212121;border-radius:3px;box-sizing:border-box;"></div>
<div class="t" style="left:1749.00px;top:252.00px;height:20px;line-height:20px;font-size:12.6px;color:#858585;">344</div>
<div style="left:1865px;top:253px;width:23px;height:18px;background:#585858;border-radius:3px 0 0 3px;"></div>
<div style="left:1889px;top:253px;width:26px;height:18px;background:#585858;border-radius:0 3px 3px 0;"></div>
<svg style="left:1871px;top:256px" width="11" height="11" viewBox="0 0 11 11"><rect x="0.75" y="0.75" width="9.5" height="9.5" fill="none" stroke="#a0a0a0" stroke-width="1.2" stroke-dasharray="2,1.5"/></svg>
<div class="t" style="left:1897.00px;top:252.50px;height:19px;line-height:19px;font-size:12px;color:#a0a0a0;">R</div>
<svg style="left:1496px;top:278px" width="9" height="9" viewBox="0 0 9 9"><polygon points="0,1 9,1 4.5,8" fill="#8a8a8a"/></svg>
<div class="t" style="left:1509.50px;top:272.00px;height:20px;line-height:20px;font-size:12.6px;color:#c4c4c4;letter-spacing:-0.031px;">Anchors</div>
<div class="t" style="left:1524.50px;top:290.00px;height:20px;line-height:20px;font-size:12.6px;color:#c4c4c4;letter-spacing:-0.101px;">Min</div>
<div class="t" style="left:1524.50px;top:310.00px;height:20px;line-height:20px;font-size:12.6px;color:#c4c4c4;letter-spacing:-0.267px;">Max</div>
<div class="t" style="left:1509.50px;top:332.00px;height:20px;line-height:20px;font-size:12.6px;color:#c4c4c4;letter-spacing:-0.102px;">Pivot</div>
<div class="t" style="left:1661.00px;top:290.00px;height:20px;line-height:20px;font-size:12.6px;color:#858585;">X</div>
<div style="left:1674px;top:292px;width:70px;height:17px;background:#2e2e2e;border:1px solid #212121;border-radius:3px;box-sizing:border-box;"></div>
<div class="t" style="left:1677.00px;top:290.00px;height:20px;line-height:20px;font-size:12.6px;color:#858585;">0</div>
<div class="t" style="left:1747.50px;top:290.00px;height:20px;line-height:20px;font-size:12.6px;color:#858585;">Y</div>
<div style="left:1760px;top:292px;width:70px;height:17px;background:#2e2e2e;border:1px solid #212121;border-radius:3px;box-sizing:border-box;"></div>
<div class="t" style="left:1763.00px;top:290.00px;height:20px;line-height:20px;font-size:12.6px;color:#858585;">0</div>
<div class="t" style="left:1661.00px;top:310.00px;height:20px;line-height:20px;font-size:12.6px;color:#858585;">X</div>
<div style="left:1674px;top:312px;width:70px;height:17px;background:#2e2e2e;border:1px solid #212121;border-radius:3px;box-sizing:border-box;"></div>
<div class="t" style="left:1677.00px;top:310.00px;height:20px;line-height:20px;font-size:12.6px;color:#858585;">0</div>
<div class="t" style="left:1747.50px;top:310.00px;height:20px;line-height:20px;font-size:12.6px;color:#858585;">Y</div>
<div style="left:1760px;top:312px;width:70px;height:17px;background:#2e2e2e;border:1px solid #212121;border-radius:3px;box-sizing:border-box;"></div>
<div class="t" style="left:1763.00px;top:310.00px;height:20px;line-height:20px;font-size:12.6px;color:#858585;">0</div>
<div class="t" style="left:1661.00px;top:332.00px;height:20px;line-height:20px;font-size:12.6px;color:#858585;">X</div>
<div style="left:1674px;top:334px;width:70px;height:17px;background:#2e2e2e;border:1px solid #212121;border-radius:3px;box-sizing:border-box;"></div>
<div class="t" style="left:1677.00px;top:332.00px;height:20px;line-height:20px;font-size:12.6px;color:#858585;">0.5</div>
<div class="t" style="left:1747.50px;top:332.00px;height:20px;line-height:20px;font-size:12.6px;color:#858585;">Y</div>
<div style="left:1760px;top:334px;width:70px;height:17px;background:#2e2e2e;border:1px solid #212121;border-radius:3px;box-sizing:border-box;"></div>
<div class="t" style="left:1763.00px;top:332.00px;height:20px;line-height:20px;font-size:12.6px;color:#858585;">0.5</div>
<div class="t" style="left:1509.50px;top:360.00px;height:20px;line-height:20px;font-size:12.6px;color:#c4c4c4;letter-spacing:-0.022px;">Rotation</div>
<div class="t" style="left:1509.50px;top:380.50px;height:20px;line-height:20px;font-size:12.6px;color:#c4c4c4;letter-spacing:-0.204px;">Scale</div>
<div class="t" style="left:1664.00px;top:360.00px;height:20px;line-height:20px;font-size:12.6px;color:#858585;">X</div>
<div style="left:1680px;top:362px;width:65px;height:17px;background:#2e2e2e;border:1px solid #212121;border-radius:3px;box-sizing:border-box;"></div>
<div class="t" style="left:1683.00px;top:360.00px;height:20px;line-height:20px;font-size:12.6px;color:#858585;">0</div>
<div class="t" style="left:1750.00px;top:360.00px;height:20px;line-height:20px;font-size:12.6px;color:#858585;">Y</div>
<div style="left:1765px;top:362px;width:65px;height:17px;background:#2e2e2e;border:1px solid #212121;border-radius:3px;box-sizing:border-box;"></div>
<div class="t" style="left:1768.00px;top:360.00px;height:20px;line-height:20px;font-size:12.6px;color:#858585;">0</div>
<div class="t" style="left:1835.00px;top:360.00px;height:20px;line-height:20px;font-size:12.6px;color:#858585;">Z</div>
<div style="left:1851px;top:362px;width:64px;height:17px;background:#2e2e2e;border:1px solid #212121;border-radius:3px;box-sizing:border-box;"></div>
<div class="t" style="left:1854.00px;top:360.00px;height:20px;line-height:20px;font-size:12.6px;color:#858585;">0</div>
<div class="t" style="left:1664.00px;top:380.00px;height:20px;line-height:20px;font-size:12.6px;color:#858585;">X</div>
<div style="left:1680px;top:382px;width:65px;height:17px;background:#2e2e2e;border:1px solid #212121;border-radius:3px;box-sizing:border-box;"></div>
<div class="t" style="left:1683.00px;top:380.00px;height:20px;line-height:20px;font-size:12.6px;color:#858585;">1</div>
<div class="t" style="left:1750.00px;top:380.00px;height:20px;line-height:20px;font-size:12.6px;color:#858585;">Y</div>
<div style="left:1765px;top:382px;width:65px;height:17px;background:#2e2e2e;border:1px solid #212121;border-radius:3px;box-sizing:border-box;"></div>
<div class="t" style="left:1768.00px;top:380.00px;height:20px;line-height:20px;font-size:12.6px;color:#858585;">1</div>
<div class="t" style="left:1835.00px;top:380.00px;height:20px;line-height:20px;font-size:12.6px;color:#858585;">Z</div>
<div style="left:1851px;top:382px;width:64px;height:17px;background:#2e2e2e;border:1px solid #212121;border-radius:3px;box-sizing:border-box;"></div>
<div class="t" style="left:1854.00px;top:380.00px;height:20px;line-height:20px;font-size:12.6px;color:#858585;">1</div>
<div style="left:1490px;top:409px;width:430px;height:1px;background:#232323;"></div>
<div style="left:1490px;top:410px;width:430px;height:21px;background:#3e3e3e;"></div>
<svg style="left:1496px;top:416px" width="9" height="9" viewBox="0 0 9 9"><polygon points="0,1 9,1 4.5,8" fill="#8a8a8a"/></svg>
<svg style="left:1511px;top:414px" width="14" height="13" viewBox="0 0 14 13"><rect x="1.3" y="1.3" width="11.4" height="10.4" fill="none" stroke="#d0d0d0" stroke-width="1.3"/><circle cx="1.4" cy="1.4" r="1.3" fill="#d0d0d0"/><circle cx="12.6" cy="1.4" r="1.3" fill="#d0d0d0"/><circle cx="1.4" cy="11.6" r="1.3" fill="#d0d0d0"/><circle cx="12.6" cy="11.6" r="1.3" fill="#d0d0d0"/><rect x="3.6" y="3.6" width="6.8" height="5.8" rx="0.6" fill="#d0d0d0"/></svg>
<div style="left:1530px;top:414px;width:14px;height:14px;background:#2a2a2a;border:1px solid #212121;border-radius:2px;box-sizing:border-box;"></div>
<svg style="left:1530px;top:414px" width="14" height="14" viewBox="0 0 14 14"><path d="M3,7.2 L5.8,10 L11,3.8" fill="none" stroke="#c4c4c4" stroke-width="1.6"/></svg>
<div class="t" style="left:1550.00px;top:410.00px;height:21px;line-height:21px;font-size:13.3px;color:#d2d2d2;font-weight:bold;letter-spacing:-0.177px;">Canvas</div>
<svg style="left:1862px;top:415px" width="11" height="11" viewBox="0 0 11 11"><circle cx="5.5" cy="5.5" r="5.2" fill="#c4c4c4"/><path d="M3.6,4.2 A1.9,1.9 0 1 1 6.4,5.8 Q5.5,6.3 5.5,7" fill="none" stroke="#3e3e3e" stroke-width="1.4"/><circle cx="5.5" cy="8.7" r="0.85" fill="#3e3e3e"/></svg>
<svg style="left:1881px;top:415px" width="12" height="11" viewBox="0 0 12 11"><path d="M0,3 H12 M0,8 H12" stroke="#c4c4c4" stroke-width="1.3"/><path d="M7.5,0.5 V5.5 M4,5.5 V10.5" stroke="#c4c4c4" stroke-width="1.5"/></svg>
<svg style="left:1906px;top:415px" width="3" height="12" viewBox="0 0 3 12"><circle cx="1.5" cy="1.5" r="1.2" fill="#c4c4c4"/><circle cx="1.5" cy="6" r="1.2" fill="#c4c4c4"/><circle cx="1.5" cy="10.5" r="1.2" fill="#c4c4c4"/></svg>
<div class="t" style="left:1509.50px;top:434.50px;height:20px;line-height:20px;font-size:12.6px;color:#c4c4c4;letter-spacing:-0.076px;">Render Mode</div>
<div style="left:1663px;top:436px;width:251px;height:17px;background:#515151;border:1px solid #303030;border-radius:3px;box-sizing:border-box;"></div>
<div class="t" style="left:1667.00px;top:434.50px;height:20px;line-height:20px;font-size:12.6px;color:#c4c4c4;letter-spacing:0.011px;">Screen Space - Overlay</div>
<svg style="left:1902px;top:442.5px" width="8" height="4" viewBox="0 0 8 4"><polygon points="0,0 8,0 4,4" fill="#c4c4c4"/></svg>
<div class="t" style="left:1524.50px;top:454.50px;height:20px;line-height:20px;font-size:12.6px;color:#c4c4c4;letter-spacing:0.021px;">Pixel Perfect</div>
<div style="left:1663px;top:457px;width:14px;height:14px;background:#2a2a2a;border:1px solid #212121;border-radius:2px;box-sizing:border-box;"></div>
<div class="t" style="left:1524.50px;top:474.50px;height:20px;line-height:20px;font-size:12.6px;color:#c4c4c4;letter-spacing:0.019px;">Sort Order</div>
<div style="left:1663px;top:475px;width:252px;height:18px;background:#2a2a2a;border:1px solid #212121;border-radius:3px;box-sizing:border-box;"></div>
<div class="t" style="left:1667.00px;top:474.00px;height:20px;line-height:20px;font-size:12.6px;color:#d2d2d2;">0</div>
<div class="t" style="left:1524.50px;top:494.50px;height:20px;line-height:20px;font-size:12.6px;color:#c4c4c4;letter-spacing:0.084px;">Target Display</div>
<div style="left:1663px;top:496px;width:251px;height:17px;background:#515151;border:1px solid #303030;border-radius:3px;box-sizing:border-box;"></div>
<div class="t" style="left:1667.00px;top:494.50px;height:20px;line-height:20px;font-size:12.6px;color:#c4c4c4;letter-spacing:-0.202px;">Display 1</div>
<svg style="left:1902px;top:502.5px" width="8" height="4" viewBox="0 0 8 4"><polygon points="0,0 8,0 4,4" fill="#c4c4c4"/></svg>
<div class="t" style="left:1509.50px;top:514.50px;height:20px;line-height:20px;font-size:12.6px;color:#c4c4c4;letter-spacing:-0.015px;width:150px;overflow:hidden;">Additional Shader Channel:</div>
<div style="left:1663px;top:516px;width:251px;height:17px;background:#515151;border:1px solid #303030;border-radius:3px;box-sizing:border-box;"></div>
<div class="t" style="left:1667.00px;top:514.50px;height:20px;line-height:20px;font-size:12.6px;color:#c4c4c4;letter-spacing:0.110px;">TexCoord1, Normal, Tangent</div>
<svg style="left:1902px;top:522.5px" width="8" height="4" viewBox="0 0 8 4"><polygon points="0,0 8,0 4,4" fill="#c4c4c4"/></svg>
<div style="left:1508px;top:535px;width:407px;height:41px;background:#3d3d3d;border:1px solid #2a2a2a;border-radius:3px;box-sizing:border-box;"></div>
<svg style="left:1513px;top:542px" width="27" height="25" viewBox="0 0 27 25"><path d="M13.5,1.5 L26,23.5 H1Z" fill="#ffc107" stroke="#ffc107" stroke-width="2" stroke-linejoin="round"/><rect x="12.1" y="6" width="2.8" height="10.5" rx="1.3" fill="#333"/><circle cx="13.5" cy="19.6" r="1.7" fill="#333"/></svg>
<div class="t" style="left:1545.00px;top:536.20px;height:16px;line-height:16px;font-size:10.6px;color:#b8b8b8;letter-spacing:0.045px;">Shader channels Normal and Tangent are most often used with lighting,</div>
<div class="t" style="left:1545.00px;top:548.20px;height:16px;line-height:16px;font-size:10.6px;color:#b8b8b8;letter-spacing:0.027px;">which an Overlay canvas does not support. Its likely these channels are not</div>
<div class="t" style="left:1545.00px;top:560.20px;height:16px;line-height:16px;font-size:10.6px;color:#b8b8b8;letter-spacing:-0.045px;">needed.</div>
<div class="t" style="left:1509.50px;top:578.00px;height:20px;line-height:20px;font-size:12.6px;color:#c4c4c4;letter-spacing:0.017px;">Vertex Color Always In Gar</div>
<div style="left:1663px;top:581px;width:14px;height:14px;background:#2a2a2a;border:1px solid #212121;border-radius:2px;box-sizing:border-box;"></div>
<div style="left:1508px;top:599px;width:407px;height:41px;background:#3d3d3d;border:1px solid #2a2a2a;border-radius:3px;box-sizing:border-box;"></div>
<svg style="left:1513px;top:606px" width="27" height="25" viewBox="0 0 27 25"><path d="M13.5,1.5 L26,23.5 H1Z" fill="#ffc107" stroke="#ffc107" stroke-width="2" stroke-linejoin="round"/><rect x="12.1" y="6" width="2.8" height="10.5" rx="1.3" fill="#333"/><circle cx="13.5" cy="19.6" r="1.7" fill="#333"/></svg>
<div class="t" style="left:1545.00px;top:600.20px;height:16px;line-height:16px;font-size:10.6px;color:#b8b8b8;letter-spacing:-0.007px;">Keep vertex color in Gamma space to allow gamma to linear color space</div>
<div class="t" style="left:1545.00px;top:612.20px;height:16px;line-height:16px;font-size:10.6px;color:#b8b8b8;letter-spacing:0.003px;">conversion to happen in UI shaders. This will enhance UI color precision in</div>
<div class="t" style="left:1545.00px;top:624.20px;height:16px;line-height:16px;font-size:10.6px;color:#b8b8b8;letter-spacing:0.012px;">linear color space.</div>
<div style="left:1490px;top:651px;width:430px;height:1px;background:#232323;"></div>
<div style="left:1490px;top:652px;width:430px;height:21px;background:#3e3e3e;"></div>
<svg style="left:1496px;top:658px" width="9" height="9" viewBox="0 0 9 9"><polygon points="0,1 9,1 4.5,8" fill="#8a8a8a"/></svg>
<svg style="left:1511px;top:656px" width="14" height="13" viewBox="0 0 14 13"><rect x="0.6" y="0.6" width="12.8" height="11.8" fill="none" stroke="#c4c4c4" stroke-width="1.2"/><rect x="5" y="3" width="6.5" height="7.5" fill="#c4c4c4"/><rect x="2.5" y="3" width="2" height="2" fill="#c4c4c4"/></svg>
<div style="left:1530px;top:656px;width:14px;height:14px;background:#2a2a2a;border:1px solid #212121;border-radius:2px;box-sizing:border-box;"></div>
<svg style="left:1530px;top:656px" width="14" height="14" viewBox="0 0 14 14"><path d="M3,7.2 L5.8,10 L11,3.8" fill="none" stroke="#c4c4c4" stroke-width="1.6"/></svg>
<div class="t" style="left:1550.00px;top:652.00px;height:21px;line-height:21px;font-size:13.3px;color:#d2d2d2;font-weight:bold;letter-spacing:0.024px;">Canvas Scaler</div>
<svg style="left:1862px;top:657px" width="11" height="11" viewBox="0 0 11 11"><circle cx="5.5" cy="5.5" r="5.2" fill="#c4c4c4"/><path d="M3.6,4.2 A1.9,1.9 0 1 1 6.4,5.8 Q5.5,6.3 5.5,7" fill="none" stroke="#3e3e3e" stroke-width="1.4"/><circle cx="5.5" cy="8.7" r="0.85" fill="#3e3e3e"/></svg>
<svg style="left:1881px;top:657px" width="12" height="11" viewBox="0 0 12 11"><path d="M0,3 H12 M0,8 H12" stroke="#c4c4c4" stroke-width="1.3"/><path d="M7.5,0.5 V5.5 M4,5.5 V10.5" stroke="#c4c4c4" stroke-width="1.5"/></svg>
<svg style="left:1906px;top:657px" width="3" height="12" viewBox="0 0 3 12"><circle cx="1.5" cy="1.5" r="1.2" fill="#c4c4c4"/><circle cx="1.5" cy="6" r="1.2" fill="#c4c4c4"/><circle cx="1.5" cy="10.5" r="1.2" fill="#c4c4c4"/></svg>
<div class="t" style="left:1509.50px;top:676.50px;height:20px;line-height:20px;font-size:12.6px;color:#c4c4c4;letter-spacing:-0.126px;">UI Scale Mode</div>
<div style="left:1663px;top:678px;width:251px;height:17px;background:#515151;border:1px solid #303030;border-radius:3px;box-sizing:border-box;"></div>
<div class="t" style="left:1667.00px;top:676.50px;height:20px;line-height:20px;font-size:12.6px;color:#c4c4c4;letter-spacing:-0.013px;">Constant Pixel Size</div>
<svg style="left:1902px;top:684.5px" width="8" height="4" viewBox="0 0 8 4"><polygon points="0,0 8,0 4,4" fill="#c4c4c4"/></svg>
<div class="t" style="left:1509.50px;top:704.50px;height:20px;line-height:20px;font-size:12.6px;color:#c4c4c4;letter-spacing:-0.060px;">Scale Factor</div>
<div style="left:1663px;top:705px;width:252px;height:18px;background:#2a2a2a;border:1px solid #212121;border-radius:3px;box-sizing:border-box;"></div>
<div class="t" style="left:1667.00px;top:704.00px;height:20px;line-height:20px;font-size:12.6px;color:#d2d2d2;">1</div>
<div class="t" style="left:1509.50px;top:724.50px;height:20px;line-height:20px;font-size:12.6px;color:#c4c4c4;letter-spacing:-0.070px;">Reference Pixels Per Unit</div>
<div style="left:1663px;top:725px;width:252px;height:18px;background:#2a2a2a;border:1px solid #212121;border-radius:3px;box-sizing:border-box;"></div>
<div class="t" style="left:1667.00px;top:724.00px;height:20px;line-height:20px;font-size:12.6px;color:#d2d2d2;">100</div>
<div style="left:1490px;top:752px;width:430px;height:1px;background:#232323;"></div>
<div style="left:1490px;top:753px;width:430px;height:21px;background:#3e3e3e;"></div>
<svg style="left:1496px;top:759px" width="9" height="9" viewBox="0 0 9 9"><polygon points="0,1 9,1 4.5,8" fill="#8a8a8a"/></svg>
<svg style="left:1511px;top:757px" width="14" height="14" viewBox="0 0 14 14"><rect x="3" y="3" width="8" height="8" fill="none" stroke="#c4c4c4" stroke-width="1.3"/><path d="M0.5,0.5 L3,3 M13.5,0.5 L11,3 M0.5,13.5 L3,11" stroke="#c4c4c4" stroke-width="1.3"/><path d="M11,11 L13.5,13.5" stroke="#4aa3df" stroke-width="1.5"/></svg>
<div style="left:1530px;top:757px;width:14px;height:14px;background:#2a2a2a;border:1px solid #212121;border-radius:2px;box-sizing:border-box;"></div>
<svg style="left:1530px;top:757px" width="14" height="14" viewBox="0 0 14 14"><path d="M3,7.2 L5.8,10 L11,3.8" fill="none" stroke="#c4c4c4" stroke-width="1.6"/></svg>
<div class="t" style="left:1550.00px;top:753.00px;height:21px;line-height:21px;font-size:13.3px;color:#d2d2d2;font-weight:bold;letter-spacing:-0.002px;">Graphic Raycaster</div>
<svg style="left:1862px;top:758px" width="11" height="11" viewBox="0 0 11 11"><circle cx="5.5" cy="5.5" r="5.2" fill="#c4c4c4"/><path d="M3.6,4.2 A1.9,1.9 0 1 1 6.4,5.8 Q5.5,6.3 5.5,7" fill="none" stroke="#3e3e3e" stroke-width="1.4"/><circle cx="5.5" cy="8.7" r="0.85" fill="#3e3e3e"/></svg>
<svg style="left:1881px;top:758px" width="12" height="11" viewBox="0 0 12 11"><path d="M0,3 H12 M0,8 H12" stroke="#c4c4c4" stroke-width="1.3"/><path d="M7.5,0.5 V5.5 M4,5.5 V10.5" stroke="#c4c4c4" stroke-width="1.5"/></svg>
<svg style="left:1906px;top:758px" width="3" height="12" viewBox="0 0 3 12"><circle cx="1.5" cy="1.5" r="1.2" fill="#c4c4c4"/><circle cx="1.5" cy="6" r="1.2" fill="#c4c4c4"/><circle cx="1.5" cy="10.5" r="1.2" fill="#c4c4c4"/></svg>
<div class="t" style="left:1509.50px;top:777.00px;height:20px;line-height:20px;font-size:12.6px;color:#858585;letter-spacing:0.049px;">Script</div>
<div style="left:1664px;top:777px;width:251px;height:18px;background:#303030;border:1px solid #212121;border-radius:3px;box-sizing:border-box;"></div>
<svg style="left:1668px;top:780px" width="12" height="12" viewBox="0 0 14 14"><rect x="3" y="3" width="8" height="8" fill="none" stroke="#999" stroke-width="1.3"/><path d="M0.5,0.5 L3,3 M13.5,0.5 L11,3 M0.5,13.5 L3,11" stroke="#999" stroke-width="1.3"/><path d="M11,11 L13.5,13.5" stroke="#4aa3df" stroke-width="1.5"/></svg>
<div class="t" style="left:1681.00px;top:776.50px;height:20px;line-height:20px;font-size:12.6px;color:#858585;letter-spacing:-0.052px;">GraphicRaycaster</div>
<div style="left:1896px;top:778px;width:1px;height:16px;background:#262626;"></div>
<svg style="left:1900px;top:781px" width="11" height="11" viewBox="0 0 11 11"><circle cx="5.5" cy="5.5" r="4.8" fill="none" stroke="#999" stroke-width="1.1"/><circle cx="5.5" cy="5.5" r="1.8" fill="#999"/></svg>
<div class="t" style="left:1509.50px;top:795.00px;height:20px;line-height:20px;font-size:12.6px;color:#c4c4c4;letter-spacing:-0.044px;">Ignore Reversed Graphics</div>
<div style="left:1663px;top:798px;width:14px;height:14px;background:#2a2a2a;border:1px solid #212121;border-radius:2px;box-sizing:border-box;"></div>
<svg style="left:1663px;top:798px" width="14" height="14" viewBox="0 0 14 14"><path d="M3,7.2 L5.8,10 L11,3.8" fill="none" stroke="#c4c4c4" stroke-width="1.6"/></svg>
<div class="t" style="left:1509.50px;top:815.50px;height:20px;line-height:20px;font-size:12.6px;color:#c4c4c4;letter-spacing:0.057px;">Blocking Objects</div>
<div style="left:1665px;top:817px;width:250px;height:17px;background:#515151;border:1px solid #303030;border-radius:3px;box-sizing:border-box;"></div>
<div class="t" style="left:1669.00px;top:815.50px;height:20px;line-height:20px;font-size:12.6px;color:#c4c4c4;letter-spacing:-0.030px;">None</div>
<svg style="left:1903px;top:823.5px" width="8" height="4" viewBox="0 0 8 4"><polygon points="0,0 8,0 4,4" fill="#c4c4c4"/></svg>
<div class="t" style="left:1509.50px;top:836.50px;height:20px;line-height:20px;font-size:12.6px;color:#c4c4c4;letter-spacing:-0.017px;">Blocking Mask</div>
<div style="left:1665px;top:838px;width:250px;height:17px;background:#515151;border:1px solid #303030;border-radius:3px;box-sizing:border-box;"></div>
<div class="t" style="left:1669.00px;top:836.50px;height:20px;line-height:20px;font-size:12.6px;color:#c4c4c4;letter-spacing:0.122px;">Everything</div>
<svg style="left:1903px;top:844.5px" width="8" height="4" viewBox="0 0 8 4"><polygon points="0,0 8,0 4,4" fill="#c4c4c4"/></svg>
<div style="left:1490px;top:863px;width:430px;height:1px;background:#232323;"></div>
<div style="left:1591px;top:874px;width:228px;height:22px;background:#585858;border:1px solid #303030;border-radius:3px;box-sizing:border-box;"></div>
<div class="t" style="left:1658.75px;top:875.00px;height:20px;line-height:20px;font-size:12.6px;color:#d2d2d2;letter-spacing:0.111px;">Add Component</div>
<div style="left:0px;top:1018px;width:1920px;height:22px;background:#191919;"></div>
<svg style="left:3px;top:1022px" width="14" height="15" viewBox="0 0 14 15"><path d="M7,0.5 A6.3,6.3 0 1 0 10.5,12.3 L13,14.5 L12,10.8 A6.3,6.3 0 0 0 7,0.5Z" fill="#e8e8e8"/><rect x="6" y="3" width="2" height="5.5" fill="#191919"/><circle cx="7" cy="10.5" r="1.1" fill="#191919"/></svg>
<div class="t" style="left:20.50px;top:1019.50px;height:20px;line-height:20px;font-size:12.6px;color:#c0c0c0;letter-spacing:0.020px;">[TMP Essential Resources] have been imported.</div>
<div style="left:1815px;top:1020px;width:1px;height:19px;background:#2a2a2a;"></div>
<div style="left:1841px;top:1020px;width:1px;height:19px;background:#2a2a2a;"></div>
<div style="left:1867px;top:1020px;width:1px;height:19px;background:#2a2a2a;"></div>
<div style="left:1893px;top:1020px;width:1px;height:19px;background:#2a2a2a;"></div>
<svg style="left:1820px;top:1022px" width="16" height="16" viewBox="0 0 16 16"><ellipse cx="8" cy="9" rx="4.5" ry="5.5" fill="#b8b8b8"/><path d="M1,5 L4,7 M15,5 L12,7 M0.5,9 H3.5 M15.5,9 H12.5 M1,14 L4,12 M15,14 L12,12 M5,2 L6.5,4 M11,2 L9.5,4" stroke="#b8b8b8" stroke-width="1.2"/><path d="M2,1 L15,15" stroke="#191919" stroke-width="2.2"/><path d="M2,1 L15,15" stroke="#b8b8b8" stroke-width="1"/></svg>
<svg style="left:1847px;top:1022px" width="15" height="16" viewBox="0 0 15 16"><ellipse cx="7.5" cy="3.5" rx="6" ry="2.5" fill="#b8b8b8"/><path d="M1.5,5.5 V8 A6,2.5 0 0 0 13.5,8 V5.5 A6,2.5 0 0 1 1.5,5.5Z M1.5,10 V12.5 A6,2.5 0 0 0 13.5,12.5 V10 A6,2.5 0 0 1 1.5,10Z" fill="#b8b8b8"/><path d="M1,1 L14,15" stroke="#191919" stroke-width="2.2"/><path d="M1,1 L14,15" stroke="#b8b8b8" stroke-width="1"/></svg>
<svg style="left:1873px;top:1022px" width="15" height="16" viewBox="0 0 15 16"><path d="M2,8 A5.5,5.5 0 0 1 12,4.5 M13,8 A5.5,5.5 0 0 1 3,11.5" fill="none" stroke="#b8b8b8" stroke-width="1.3"/><circle cx="7.5" cy="7" r="2" fill="#b8b8b8"/><path d="M4.5,12 Q7.5,8 10.5,12" fill="#b8b8b8"/><path d="M1,1 L14,15" stroke="#b8b8b8" stroke-width="1"/></svg>
<svg style="left:1899px;top:1023px" width="15" height="15" viewBox="0 0 15 15"><circle cx="7.5" cy="7.5" r="6.7" fill="none" stroke="#b8b8b8" stroke-width="1.2"/><path d="M4.5,7.5 L6.7,9.7 L10.7,5.5" fill="none" stroke="#b8b8b8" stroke-width="1.4"/></svg>
<div style="left:0px;top:1040px;width:1920px;height:40px;background:#1c1c1c;"></div>
<svg style="left:15px;top:1051px" width="18" height="18" viewBox="0 0 18 18"><polygon points="0.5,2.5 7.5,1.5 7.5,8.3 0.5,8.3" fill="#fff"/><polygon points="8.5,1.4 17,0.3 17,8.3 8.5,8.3" fill="#fff"/><polygon points="0.5,9.3 7.5,9.3 7.5,16.2 0.5,15.3" fill="#fff"/><polygon points="8.5,9.3 17,9.3 17,17.5 8.5,16.3" fill="#fff"/></svg>
<div style="left:48px;top:1040px;width:288px;height:40px;background:#303030;border:1px solid #585858;border-bottom:none;box-sizing:border-box;"></div>
<svg style="left:59px;top:1051px" width="19" height="19" viewBox="0 0 19 19"><circle cx="11.3" cy="6.7" r="5.3" fill="none" stroke="#fff" stroke-width="1.3"/><path d="M7.5,10.5 L1,17" stroke="#fff" stroke-width="1.5"/></svg>
<div class="t" style="left:88.50px;top:1048.50px;height:24px;line-height:24px;font-size:15px;color:#ffffff;letter-spacing:-0.260px;">Escriu aquí per cercar</div>
<svg style="left:256px;top:1042px" width="80" height="38" viewBox="256 1042 80 38"><polygon points="257,1080 269,1064.5 336,1064.5 336,1080" fill="#e6c9a1"/><polygon points="257,1080 269,1064.5 336,1064.5 336,1068 271,1068 261,1080" fill="#d4b48a"/><polygon points="268,1057 283,1051 296,1056 295,1070 281,1074 268,1069" fill="#5bb04c"/><polygon points="269,1056 282,1050.5 282,1071 269,1067" fill="#f0f0f8"/><polygon points="282,1050.5 294,1054 294,1068 282,1071" fill="#e2e2ee"/><path d="M288,1060 L298,1047" stroke="#f5b731" stroke-width="3.5"/><path d="M297,1048.2 L299.5,1045" stroke="#e55050" stroke-width="3.5"/><path d="M306,1058 A9.5,12 0 0 1 325,1058 V1071 A3,3 0 0 1 322,1074 H309 A3,3 0 0 1 306,1071Z" fill="#1f7ef2"/><path d="M311,1047 A4.5,4 0 0 1 320,1047" fill="none" stroke="#2b8cf5" stroke-width="1.8"/><path d="M308,1072 V1066 A7.5,7 0 0 1 323,1066 V1072Z" fill="#2a8ff7"/><path d="M309,1071 H322" stroke="#b06ee8" stroke-width="1.2"/></svg>
<svg style="left:351px;top:1051px" width="18" height="18" viewBox="0 0 18 18"><circle cx="9" cy="9" r="7" fill="none" stroke="#fff" stroke-width="2"/></svg>
<svg style="left:399px;top:1051px" width="18" height="17" viewBox="0 0 18 17"><rect x="1.5" y="4" width="10" height="8.5" fill="none" stroke="#fff" stroke-width="1.4"/><path d="M0,1 H13 M0,15.5 H13 M15.5,0 V16" stroke="#fff" stroke-width="1.2"/><rect x="14" y="4.5" width="3" height="3" fill="#fff"/></svg>
<svg style="left:447px;top:1048px" width="24" height="24" viewBox="0 0 24 24"><rect width="24" height="24" rx="2.5" fill="#f47b20"/><path d="M7,5 A3,3 0 0 0 6,11 L9,12 L6,13 A3,3 0 0 0 7,19 L12,15.5 L17,19 A3,3 0 0 0 18,13 L15,12 L18,11 A3,3 0 0 0 17,5 L12,8.5Z" fill="none" stroke="#fff" stroke-width="2.2" stroke-linejoin="round"/></svg>
<svg style="left:497px;top:1050px" width="22" height="19" viewBox="0 0 22 19"><path d="M0,2 A1.5,1.5 0 0 1 1.5,0.5 H8 L10,2.5 H20.5 A1.5,1.5 0 0 1 22,4 V17 A1.5,1.5 0 0 1 20.5,18.5 H1.5 A1.5,1.5 0 0 1 0,17Z" fill="#f8c63d"/><path d="M0,5 H22" stroke="#e0a92a" stroke-width="1"/><path d="M5,18.5 V12 H17 V18.5 H14 V15 H8 V18.5Z" fill="#2f8ee0"/></svg>
<svg style="left:545px;top:1048px" width="24" height="24" viewBox="0 0 24 24"><circle cx="12" cy="12" r="12" fill="#dd4435"/><path d="M12,12 L22.4,6 A12,12 0 0 1 12,24Z" fill="#fbc02d"/><path d="M12,12 L12,24 A12,12 0 0 1 1.6,6Z" fill="#1e9e55"/><path d="M12,6.5 H22.4 L17,15.5Z" fill="#fbc02d"/><path d="M1.6,6 L7.3,14.8 L12,24 A12,12 0 0 1 1.6,6Z" fill="#1e9e55"/><circle cx="12" cy="12" r="5.4" fill="#fff"/><circle cx="12" cy="12" r="4.3" fill="#3b7ded"/></svg>
<svg style="left:594px;top:1048px" width="25" height="24" viewBox="0 0 25 24"><path d="M17.5,0.5 L24.5,3.8 V20.2 L17.5,23.5 L6,13 L2,16 L0,14.8 V9.2 L2,8 L6,11 Z M17.5,6.5 L10.5,12 L17.5,17.5Z" fill="#1f8ad2" fill-rule="evenodd"/><path d="M17.5,0.5 L24.5,3.8 V20.2 L17.5,23.5Z" fill="#30a9f0"/></svg>
<div style="left:631px;top:1040px;width:48px;height:40px;background:#474747;"></div>
<div style="left:631px;top:1078px;width:48px;height:2px;background:#76b9ed;"></div>
<svg style="left:640px;top:1042px" width="32" height="34" viewBox="0 0 32 34"><polygon points="5,12.3 14.8,6.3 24.6,12 24.6,13 5,13" fill="#7a7a7a"/><polygon points="24.8,13 24.8,23.5 15.2,29 15.2,25" fill="#000"/><polygon points="8,14.2 14.6,10.6 21.3,14.2 21.3,21.8 14.6,25.5 8,21.8" fill="#fff"/><path d="M14.6,10.5 V14.5" stroke="#7a7a7a" stroke-width="2.2"/><ellipse cx="14.6" cy="14.8" rx="2.4" ry="1.4" fill="#7a7a7a"/><polygon points="10.2,17 13.3,18.8 13.3,22.3 10.2,20.5" fill="#3a3a3a"/><polygon points="19,17 15.9,18.8 15.9,22.3 19,20.5" fill="#000"/></svg>
<div style="left:684px;top:1078px;width:40px;height:2px;background:#76b9ed;"></div>
<svg style="left:693px;top:1048px" width="23" height="23" viewBox="0 0 23 23"><rect x="0.75" y="0.75" width="21.5" height="21.5" fill="#001e36" stroke="#31a8ff" stroke-width="1.5"/></svg>
<div class="t" style="left:696.36px;top:1049.50px;height:20px;line-height:20px;font-size:12.5px;color:#31a8ff;font-weight:bold;">Ps</div>
<svg style="left:1478px;top:1050px" width="26" height="22" viewBox="0 0 26 22"><circle cx="18" cy="7" r="5.5" fill="#f6a623"/><path d="M4,20 A4,4 0 0 1 3,12.3 A6.5,6.5 0 0 1 15.5,10 A4.5,4.5 0 0 1 22,14 A3.5,3.5 0 0 1 21,20Z" fill="#c8dcf5"/></svg>
<div class="t" style="left:1511.50px;top:1048.50px;height:23px;line-height:23px;font-size:14.5px;color:#ffffff;letter-spacing:-0.974px;">18°C</div>
<div class="t" style="left:1549.60px;top:1048.50px;height:23px;line-height:23px;font-size:14.5px;color:#ffffff;letter-spacing:-0.374px;">Mayorm. nubla...</div>
<svg style="left:1676px;top:1056px" width="14" height="8" viewBox="0 0 14 8"><path d="M1,7.5 L7,1.5 L13,7.5" fill="none" stroke="#fff" stroke-width="1.2"/></svg>
<svg style="left:1699px;top:1053px" width="17" height="13" viewBox="0 0 17 13"><rect x="5.5" y="3.5" width="10" height="8" fill="none" stroke="#fff" stroke-width="1.2"/><rect x="15.5" y="5.5" width="1.3" height="4" fill="#fff"/><rect x="7" y="5" width="7" height="5" fill="#fff"/><path d="M1.5,0 V2.5 M4,0 V2.5 M0.7,2.5 H4.8 V5 A2,2 0 0 1 0.7,5Z M2.75,7 V12" stroke="#fff" stroke-width="1" fill="#fff"/></svg>
<svg style="left:1726px;top:1054px" width="14" height="14" viewBox="0 0 14 14"><path d="M1,12 A11,11 0 0 1 12,1 M3.5,12 A8.5,8.5 0 0 1 12,3.5 M6,12 A6,6 0 0 1 12,6" fill="none" stroke="#fff" stroke-width="1.1"/><circle cx="11" cy="12" r="1.5" fill="#fff"/></svg>
<svg style="left:1746px;top:1053px" width="17" height="15" viewBox="0 0 17 15"><path d="M0.6,5 H3.5 L7.5,1 V14 L3.5,10 H0.6Z" fill="none" stroke="#fff" stroke-width="1.1"/><path d="M9.5,5 Q10.8,7.5 9.5,10 M11.8,3 Q14,7.5 11.8,12 M14,1 Q17.2,7.5 14,14" fill="none" stroke="#fff" stroke-width="1.1"/></svg>
<div class="t" style="left:1774.50px;top:1049.50px;height:21px;line-height:21px;font-size:13.5px;color:#ffffff;letter-spacing:-1.833px;">CAT</div>
<div class="t" style="left:1821.70px;top:1040.50px;height:21px;line-height:21px;font-size:13.5px;color:#ffffff;letter-spacing:-1.556px;">14:05</div>
<div class="t" style="left:1809.70px;top:1058.00px;height:21px;line-height:21px;font-size:13.5px;color:#ffffff;letter-spacing:-1.006px;">19/2/2024</div>
<svg style="left:1879px;top:1051px" width="17" height="18" viewBox="0 0 17 18"><path d="M0.5,0.5 H16.5 V13 H10.5 L8.5,17 L6.5,13 H0.5Z" fill="#fff"/><path d="M3,3.5 H14 M3,6.5 H14 M3,9.5 H10" stroke="#1c1c1c" stroke-width="1.1"/></svg>
<div style="left:1915px;top:1040px;width:1px;height:40px;background:#6a6a6a;"></div>
<div style="left:970px;top:170px;width:254px;height:671px;background:#f2f2f2;border:1px solid #d4d4d4;box-sizing:border-box;box-shadow:2px 2px 3px rgba(0,0,0,0.35);"></div>
<div style="left:973px;top:633px;width:245px;height:22px;background:#91c9f7;"></div>
<div class="t" style="left:1005.50px;top:175.20px;height:19px;line-height:19px;font-size:12px;color:#000000;letter-spacing:0.026px;">Cut</div>
<div class="t" style="left:1005.50px;top:197.10px;height:19px;line-height:19px;font-size:12px;color:#000000;letter-spacing:-0.003px;">Copy</div>
<div class="t" style="left:1005.50px;top:219.10px;height:19px;line-height:19px;font-size:12px;color:#6d6d6d;letter-spacing:-0.537px;">Paste</div>
<div class="t" style="left:1005.50px;top:241.10px;height:19px;line-height:19px;font-size:12px;color:#6d6d6d;letter-spacing:-0.253px;">Paste As Child</div>
<div style="left:1001px;top:264px;width:220px;height:1px;background:#d7d7d7;"></div>
<div class="t" style="left:1005.50px;top:270.00px;height:19px;line-height:19px;font-size:12px;color:#000000;letter-spacing:-0.392px;">Rename</div>
<div class="t" style="left:1005.50px;top:292.00px;height:19px;line-height:19px;font-size:12px;color:#000000;letter-spacing:-0.003px;">Duplicate</div>
<div class="t" style="left:1005.50px;top:314.00px;height:19px;line-height:19px;font-size:12px;color:#000000;letter-spacing:-0.281px;">Delete</div>
<div style="left:1001px;top:337px;width:220px;height:1px;background:#d7d7d7;"></div>
<div class="t" style="left:1005.50px;top:343.00px;height:19px;line-height:19px;font-size:12px;color:#000000;letter-spacing:-0.175px;">Select Children</div>
<div style="left:1001px;top:366px;width:220px;height:1px;background:#d7d7d7;"></div>
<div class="t" style="left:1005.50px;top:372.00px;height:19px;line-height:19px;font-size:12px;color:#000000;letter-spacing:-0.336px;">Find References in Scene</div>
<div style="left:1001px;top:395px;width:220px;height:1px;background:#d7d7d7;"></div>
<div class="t" style="left:1005.50px;top:401.00px;height:19px;line-height:19px;font-size:12px;color:#000000;letter-spacing:-0.288px;">Set as Default Parent</div>
<div style="left:1001px;top:424px;width:220px;height:1px;background:#d7d7d7;"></div>
<div class="t" style="left:1005.50px;top:430.00px;height:19px;line-height:19px;font-size:12px;color:#000000;letter-spacing:-0.267px;">Prefab</div>
<svg style="left:1207px;top:434.5px" width="6" height="9" viewBox="0 0 6 9"><path d="M1,0.8 L4.8,4.5 L1,8.2" fill="none" stroke="#333" stroke-width="1.1"/></svg>
<div style="left:1001px;top:453px;width:220px;height:1px;background:#d7d7d7;"></div>
<div class="t" style="left:1005.50px;top:459.00px;height:19px;line-height:19px;font-size:12px;color:#000000;letter-spacing:-0.213px;">Create Empty Parent</div>
<div class="t" style="left:1005.50px;top:481.00px;height:19px;line-height:19px;font-size:12px;color:#000000;letter-spacing:-0.217px;">Create Empty</div>
<div class="t" style="left:1005.50px;top:503.00px;height:19px;line-height:19px;font-size:12px;color:#000000;letter-spacing:-0.150px;">2D Object</div>
<svg style="left:1207px;top:507.5px" width="6" height="9" viewBox="0 0 6 9"><path d="M1,0.8 L4.8,4.5 L1,8.2" fill="none" stroke="#333" stroke-width="1.1"/></svg>
<div class="t" style="left:1005.50px;top:525.00px;height:19px;line-height:19px;font-size:12px;color:#000000;letter-spacing:-0.150px;">3D Object</div>
<svg style="left:1207px;top:529.5px" width="6" height="9" viewBox="0 0 6 9"><path d="M1,0.8 L4.8,4.5 L1,8.2" fill="none" stroke="#333" stroke-width="1.1"/></svg>
<div class="t" style="left:1005.50px;top:547.00px;height:19px;line-height:19px;font-size:12px;color:#000000;letter-spacing:-0.209px;">Effects</div>
<svg style="left:1207px;top:551.5px" width="6" height="9" viewBox="0 0 6 9"><path d="M1,0.8 L4.8,4.5 L1,8.2" fill="none" stroke="#333" stroke-width="1.1"/></svg>
<div class="t" style="left:1005.50px;top:569.00px;height:19px;line-height:19px;font-size:12px;color:#000000;letter-spacing:0.196px;">Light</div>
<svg style="left:1207px;top:573.5px" width="6" height="9" viewBox="0 0 6 9"><path d="M1,0.8 L4.8,4.5 L1,8.2" fill="none" stroke="#333" stroke-width="1.1"/></svg>
<div class="t" style="left:1005.50px;top:591.00px;height:19px;line-height:19px;font-size:12px;color:#000000;letter-spacing:0.212px;">Audio</div>
<svg style="left:1207px;top:595.5px" width="6" height="9" viewBox="0 0 6 9"><path d="M1,0.8 L4.8,4.5 L1,8.2" fill="none" stroke="#333" stroke-width="1.1"/></svg>
<div class="t" style="left:1005.50px;top:613.00px;height:19px;line-height:19px;font-size:12px;color:#000000;letter-spacing:-0.095px;">Video</div>
<svg style="left:1207px;top:617.5px" width="6" height="9" viewBox="0 0 6 9"><path d="M1,0.8 L4.8,4.5 L1,8.2" fill="none" stroke="#333" stroke-width="1.1"/></svg>
<div class="t" style="left:1005.50px;top:635.00px;height:19px;line-height:19px;font-size:12px;color:#000000;letter-spacing:-0.750px;">UI</div>
<svg style="left:1207px;top:639.5px" width="6" height="9" viewBox="0 0 6 9"><path d="M1,0.8 L4.8,4.5 L1,8.2" fill="none" stroke="#333" stroke-width="1.1"/></svg>
<div class="t" style="left:1005.50px;top:657.00px;height:19px;line-height:19px;font-size:12px;color:#000000;letter-spacing:0.012px;">UI Toolkit</div>
<svg style="left:1207px;top:661.5px" width="6" height="9" viewBox="0 0 6 9"><path d="M1,0.8 L4.8,4.5 L1,8.2" fill="none" stroke="#333" stroke-width="1.1"/></svg>
<div class="t" style="left:1005.50px;top:679.00px;height:19px;line-height:19px;font-size:12px;color:#000000;letter-spacing:-0.321px;">Camera</div>
<div class="t" style="left:1005.50px;top:701.00px;height:19px;line-height:19px;font-size:12px;color:#000000;letter-spacing:-0.268px;">Visual Scripting Scene Variables</div>
<div class="t" style="left:1005.50px;top:723.00px;height:19px;line-height:19px;font-size:12px;color:#000000;letter-spacing:-0.110px;">Align View to Selected</div>
<div class="t" style="left:1005.50px;top:745.00px;height:19px;line-height:19px;font-size:12px;color:#000000;letter-spacing:-0.105px;">Move To View</div>
<div class="t" style="left:1005.50px;top:767.00px;height:19px;line-height:19px;font-size:12px;color:#000000;letter-spacing:-0.108px;">Toggle Active State</div>
<div class="t" style="left:1005.50px;top:789.00px;height:19px;line-height:19px;font-size:12px;color:#000000;letter-spacing:0.074px;">Align With View</div>
<div style="left:1001px;top:812px;width:220px;height:1px;background:#d7d7d7;"></div>
<div class="t" style="left:1005.50px;top:818.20px;height:19px;line-height:19px;font-size:12px;color:#000000;letter-spacing:-0.207px;">Properties...</div>
<div style="left:1218px;top:630px;width:225px;height:335px;background:#f2f2f2;border:1px solid #d4d4d4;box-sizing:border-box;box-shadow:2px 2px 3px rgba(0,0,0,0.35);"></div>
<div style="left:1221px;top:816px;width:219px;height:22px;background:#91c9f7;"></div>
<div class="t" style="left:1253.30px;top:635.00px;height:19px;line-height:19px;font-size:12px;color:#000000;letter-spacing:-0.070px;">Image</div>
<div class="t" style="left:1253.30px;top:657.00px;height:19px;line-height:19px;font-size:12px;color:#000000;letter-spacing:-0.137px;">Text - TextMeshPro</div>
<div class="t" style="left:1253.30px;top:679.00px;height:19px;line-height:19px;font-size:12px;color:#000000;letter-spacing:-0.299px;">Raw Image</div>
<div class="t" style="left:1253.30px;top:701.00px;height:19px;line-height:19px;font-size:12px;color:#000000;letter-spacing:-0.438px;">Panel</div>
<div style="left:1249px;top:724px;width:191px;height:1px;background:#d7d7d7;"></div>
<div class="t" style="left:1253.30px;top:730.00px;height:19px;line-height:19px;font-size:12px;color:#000000;letter-spacing:-0.060px;">Toggle</div>
<div class="t" style="left:1253.30px;top:752.00px;height:19px;line-height:19px;font-size:12px;color:#000000;letter-spacing:-0.280px;">Slider</div>
<div class="t" style="left:1253.30px;top:774.00px;height:19px;line-height:19px;font-size:12px;color:#000000;letter-spacing:-0.150px;">Scrollbar</div>
<div class="t" style="left:1253.30px;top:796.00px;height:19px;line-height:19px;font-size:12px;color:#000000;letter-spacing:-0.194px;">Scroll View</div>
<div class="t" style="left:1253.30px;top:818.20px;height:19px;line-height:19px;font-size:12px;color:#000000;letter-spacing:-0.058px;">Button - TextMeshPro</div>
<div class="t" style="left:1253.30px;top:840.50px;height:19px;line-height:19px;font-size:12px;color:#000000;letter-spacing:-0.030px;">Dropdown - TextMeshPro</div>
<div class="t" style="left:1253.30px;top:862.30px;height:19px;line-height:19px;font-size:12px;color:#000000;letter-spacing:-0.080px;">Input Field - TextMeshPro</div>
<div style="left:1249px;top:885px;width:191px;height:1px;background:#d7d7d7;"></div>
<div class="t" style="left:1253.30px;top:891.50px;height:19px;line-height:19px;font-size:12px;color:#000000;letter-spacing:-0.531px;">Canvas</div>
<div class="t" style="left:1253.30px;top:913.20px;height:19px;line-height:19px;font-size:12px;color:#000000;letter-spacing:-0.419px;">Event System</div>
<div style="left:1249px;top:936px;width:191px;height:1px;background:#d7d7d7;"></div>
<div class="t" style="left:1253.30px;top:942.30px;height:19px;line-height:19px;font-size:12px;color:#000000;letter-spacing:-0.282px;">Legacy</div>
<svg style="left:1426px;top:946.8px" width="6" height="9" viewBox="0 0 6 9"><path d="M1,0.8 L4.8,4.5 L1,8.2" fill="none" stroke="#333" stroke-width="1.1"/></svg>
<svg style="left:895px;top:630px" width="125" height="70" viewBox="895 630 125 70"><path d="M902.8,692.3 L997,646" stroke="#fff" stroke-width="2.4" stroke-linecap="round"/><polygon points="1013.2,638.1 994.4,642.7 998.2,650.8" fill="#fff"/></svg>
<svg style="left:1315px;top:715px" width="80" height="115" viewBox="1315 715 80 115"><path d="M1388.7,720 L1329,812" stroke="#fff" stroke-width="2.2" stroke-linecap="round"/><polygon points="1321.4,826.3 1324,810 1334.3,814" fill="#fff"/></svg>
</body></html>
